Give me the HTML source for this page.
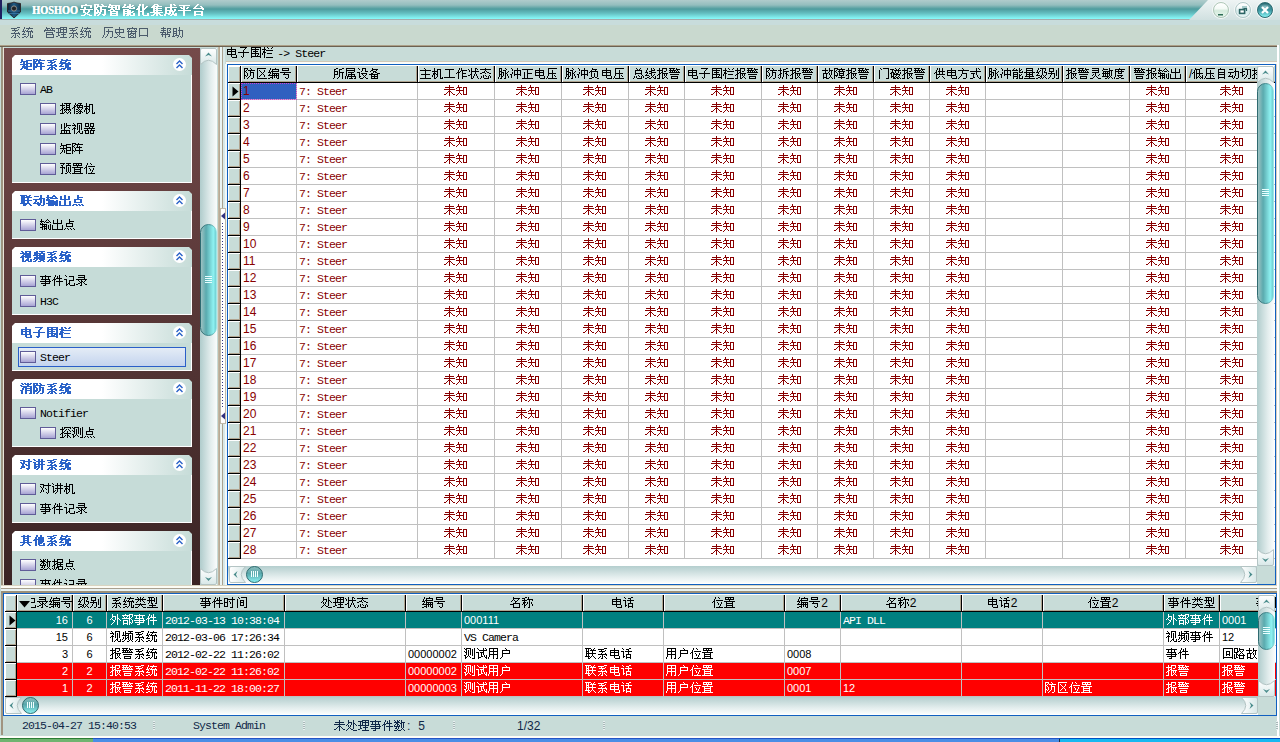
<!DOCTYPE html><html><head><meta charset="utf-8"><style>
*{margin:0;padding:0;box-sizing:border-box}
html,body{width:1280px;height:742px;overflow:hidden;background:#c8dcd8;font-family:"Liberation Sans",sans-serif;font-size:12px;color:#000;position:relative}
.ab,.hc,.c,.ind,.row{position:absolute}
.mono{font-family:"Liberation Mono",monospace;font-size:11.5px!important;letter-spacing:-0.9px}
#title{left:0;top:0;width:1280px;height:20px;background:linear-gradient(#b0cccc 0px,#94bebe 5px,#4e9c9e 9px,#62bcbe 13px,#8afcfc 19px,#a4acac 19px,#a4acac 20px)}
#titlecut{left:1189px;top:0;width:91px;height:20px;background:linear-gradient(#eef4f4,#d0e0e0);clip-path:polygon(19px 0,91px 0,91px 20px,0 20px)}
.tt{font-weight:bold;color:#fff;font-size:13px;line-height:19px}
.tt b{font-family:"Liberation Serif",serif;font-size:13px;display:inline-block;transform:scaleX(0.79);transform-origin:0 0;text-shadow:0.7px 0 0 #fff}
.menu{color:#4c5c6c;font-size:12px;line-height:20px;top:23px;--gy:2px}
.grp{left:12px;width:180px}
.gbody{left:0;top:20px;width:180px;background:#c6dcd8;border-right:1px solid #fff;border-bottom:1px solid #fff}
.gh{left:0;top:0;width:180px;height:20px;background:linear-gradient(90deg,#ffffff 0%,#ffffff 50%,#c6dcd8 100%);clip-path:polygon(3px 0,177px 0,180px 3px,180px 20px,0 20px,0 3px)}
.gt{left:8px;top:0;line-height:20px;color:#2a62c8;font-weight:bold;font-size:12px;--gy:2px}
.gc{left:161px;top:3px;width:13px;height:13px;border-radius:50%;background:#fff}
.ico{width:16px;height:12px;border:1px solid #605c98;background:linear-gradient(#ffffff,#a8a4d4)}
.it{line-height:14px;font-size:12px;--gy:-2px}
.hc{top:0;height:17px;line-height:17px;overflow:hidden;white-space:nowrap;border-right:1px solid #000;border-bottom:1px solid #000;box-shadow:inset 1px 0 0 #fff,inset -1px -1px 0 #b0a490;background:#c8dcd8}
.c{top:0;height:17px;line-height:16px;overflow:hidden;white-space:nowrap;border-right:1px solid #c0c0c0;border-bottom:1px solid #c0c0c0}
.ind{background:#c8dcd8;border-right:1px solid #000;border-bottom:1px solid #000;box-shadow:inset 1px 1px 0 #fff,inset -1px -1px 0 #b0a490}
.r{color:#880000}
.hc.l{padding-left:3px}
svg.ab{position:absolute;overflow:visible}
.g,.gb{width:12px;height:14px;vertical-align:top;fill:currentColor;position:relative;top:var(--gy,0px);overflow:visible}
.gb{width:13px}
.gt13{width:14px;height:16px;vertical-align:top;fill:currentColor;position:relative;top:var(--gy,0px);overflow:visible}
</style></head><body>
<svg width="0" height="0" style="position:absolute"><defs>
<linearGradient id="gbtn" x1="0" y1="0" x2="0" y2="1"><stop offset="0" stop-color="#ffffff"/><stop offset="1" stop-color="#d8e8e8"/></linearGradient>
<linearGradient id="gbtnh" x1="0" y1="0" x2="1" y2="0"><stop offset="0" stop-color="#ffffff"/><stop offset="1" stop-color="#d8e8e8"/></linearGradient>
<linearGradient id="gthv" x1="0" y1="0" x2="1" y2="0"><stop offset="0" stop-color="#a4c4c4"/><stop offset="0.35" stop-color="#5aaaae"/><stop offset="0.8" stop-color="#8ef2f2"/><stop offset="1" stop-color="#6cc8cc"/></linearGradient>
<linearGradient id="gstv" x1="0" y1="0" x2="1" y2="0"><stop offset="0" stop-color="#2e6a70"/><stop offset="0.6" stop-color="#4a9094"/><stop offset="1" stop-color="#9ae8e8"/></linearGradient>
<linearGradient id="gthh" x1="0" y1="0" x2="0" y2="1"><stop offset="0" stop-color="#8cbcbc"/><stop offset="0.45" stop-color="#58a8ac"/><stop offset="1" stop-color="#8cf4f4"/></linearGradient>
</defs></svg>
<div class="ab" id="title"></div>
<div class="ab" style="left:0;top:0;width:2px;height:19px;background:#202060"></div>
<div class="ab" id="titlecut"></div>
<svg class="ab" style="left:7px;top:2px" width="14" height="16" viewBox="0 0 14 16"><defs><linearGradient id="shg" x1="0" y1="0" x2="1" y2="0"><stop offset="0" stop-color="#0c2034"/><stop offset="0.5" stop-color="#1e5a84"/><stop offset="1" stop-color="#0c2a44"/></linearGradient></defs><path d="M0.5,1.5 L4,1 L6,0.5 L7,0 L8,0.5 L10,1 L13.5,1.5 L13.5,10 L7,16 L0.5,10 Z" fill="url(#shg)" stroke="#2a1a1a" stroke-width="0.8"/><path d="M1,9 H13 M1.5,11.5 H12.5" stroke="#3a7aa8" stroke-width="0.8"/><circle cx="7" cy="6.5" r="2.6" fill="#202428" stroke="#8a8a8a" stroke-width="1"/></svg>
<div class="ab tt" style="left:32px;top:0"><b>HOSHOO</b></div>
<div class="ab tt" style="left:80px;top:0;--gy:2px"><svg class=gt13><use href=#b135b89 /></svg><svg class=gt13><use href=#b139632 /></svg><svg class=gt13><use href=#b13667a /></svg><svg class=gt13><use href=#b1380fd /></svg><svg class=gt13><use href=#b135316 /></svg><svg class=gt13><use href=#b1396c6 /></svg><svg class=gt13><use href=#b136210 /></svg><svg class=gt13><use href=#b135e73 /></svg><svg class=gt13><use href=#b1353f0 /></svg></div>
<div class="ab" style="left:1213px;top:2px;width:16px;height:16px;border-radius:50%;background:linear-gradient(#ffffff 0%,#f4faf6 40%,#d4eadc 55%,#e8f6ee 100%);border:1px solid #b0c8b8;box-shadow:0 0 0 1px #f4f8f8"></div>
<div class="ab" style="left:1235px;top:2px;width:16px;height:16px;border-radius:50%;background:linear-gradient(#ffffff 0%,#f0f8f8 40%,#d4eaea 55%,#e8f6f6 100%);border:1px solid #b0c8c8;box-shadow:0 0 0 1px #f4f8f8"></div>
<div class="ab" style="left:1257px;top:2px;width:16px;height:16px;border-radius:50%;background:radial-gradient(ellipse 55% 28% at 50% 28%,rgba(230,255,255,0.55),rgba(255,255,255,0) 80%),linear-gradient(#2c6c74,#3a94a0 50%,#8af4f4);border:1px solid #2a6a70;box-shadow:0 0 0 1px #f4f8f8"></div>
<div class="ab" style="left:1218px;top:14px;width:5px;height:1px;background:#2c6c54;box-shadow:0 0.5px 0 #2c6c54"></div>
<svg class="ab" style="left:1238px;top:5px" width="10" height="10"><rect x="4" y="1" width="5" height="4" fill="#a8cccc"/><path d="M5.5 3.5 H8.5 V6" fill="none" stroke="#2c6464" stroke-width="1.2"/><rect x="1.6" y="4.6" width="5" height="3.8" fill="#fff" stroke="#2c6464" stroke-width="1.6"/></svg>
<svg class="ab" style="left:1260px;top:5px" width="10" height="10"><path d="M2 2 L8 8 M8 2 L2 8" stroke="#fff" stroke-width="2.2"/></svg>
<div class="ab" style="left:0;top:20px;width:1280px;height:5px;background:#c8dcdc"></div>
<div class="ab" style="left:0;top:25px;width:1280px;height:21px;background:#c9d9cf"></div>
<div class="ab menu" style="left:10px"><svg class=g><use href=#g7cfb /></svg><svg class=g><use href=#g7edf /></svg></div>
<div class="ab menu" style="left:44px"><svg class=g><use href=#g7ba1 /></svg><svg class=g><use href=#g7406 /></svg><svg class=g><use href=#g7cfb /></svg><svg class=g><use href=#g7edf /></svg></div>
<div class="ab menu" style="left:102px"><svg class=g><use href=#g5386 /></svg><svg class=g><use href=#g53f2 /></svg><svg class=g><use href=#g7a97 /></svg><svg class=g><use href=#g53e3 /></svg></div>
<div class="ab menu" style="left:160px"><svg class=g><use href=#g5e2e /></svg><svg class=g><use href=#g52a9 /></svg></div>
<div class="ab" style="left:0;top:45px;width:1277px;height:1px;background:#aca088"></div>
<div class="ab" style="left:0;top:46px;width:1277px;height:1px;background:#6c6252"></div>
<div class="ab" style="left:1277px;top:45px;width:2px;height:691px;background:#fff"></div>
<div class="ab" style="left:1276px;top:64px;width:1px;height:652px;background:#d8d0c0"></div>
<div class="ab" style="left:1px;top:47px;width:2px;height:538px;background:#9c9480"></div>
<div class="ab" style="left:3px;top:47px;width:1px;height:538px;background:#e8e4d8"></div>
<div class="ab" style="left:4px;top:48px;width:196px;height:537px;background:linear-gradient(#754a4a,#3a2424)"></div>
<div class="ab" style="left:4px;top:48px;width:196px;height:537px;overflow:hidden">
<div class="ab grp" style="left:8px;top:7px;height:128px">
<div class="ab gbody" style="height:108px"></div><div class="ab gh"></div><div class="ab gt"><svg class=gb><use href=#b77e9 /></svg><svg class=gb><use href=#b9635 /></svg><svg class=gb><use href=#b7cfb /></svg><svg class=gb><use href=#b7edf /></svg></div>
<div class="ab gc"><svg class="ab" width="13" height="13" style="left:0;top:0"><path d="M3.5 6 L6.5 3 L9.5 6 M3.5 10 L6.5 7 L9.5 10" fill="none" stroke="#2a62c8" stroke-width="1.4"/></svg></div>
<div class="ab ico" style="left:8px;top:28px"></div>
<div class="ab it mono" style="left:28px;top:28px">AB</div>
<div class="ab ico" style="left:28px;top:48px"></div>
<div class="ab it " style="left:48px;top:48px"><svg class=g><use href=#g6444 /></svg><svg class=g><use href=#g50cf /></svg><svg class=g><use href=#g673a /></svg></div>
<div class="ab ico" style="left:28px;top:68px"></div>
<div class="ab it " style="left:48px;top:68px"><svg class=g><use href=#g76d1 /></svg><svg class=g><use href=#g89c6 /></svg><svg class=g><use href=#g5668 /></svg></div>
<div class="ab ico" style="left:28px;top:88px"></div>
<div class="ab it " style="left:48px;top:88px"><svg class=g><use href=#g77e9 /></svg><svg class=g><use href=#g9635 /></svg></div>
<div class="ab ico" style="left:28px;top:108px"></div>
<div class="ab it " style="left:48px;top:108px"><svg class=g><use href=#g9884 /></svg><svg class=g><use href=#g7f6e /></svg><svg class=g><use href=#g4f4d /></svg></div>
</div>
<div class="ab grp" style="left:8px;top:143px;height:48px">
<div class="ab gbody" style="height:28px"></div><div class="ab gh"></div><div class="ab gt"><svg class=gb><use href=#b8054 /></svg><svg class=gb><use href=#b52a8 /></svg><svg class=gb><use href=#b8f93 /></svg><svg class=gb><use href=#b51fa /></svg><svg class=gb><use href=#b70b9 /></svg></div>
<div class="ab gc"><svg class="ab" width="13" height="13" style="left:0;top:0"><path d="M3.5 6 L6.5 3 L9.5 6 M3.5 10 L6.5 7 L9.5 10" fill="none" stroke="#2a62c8" stroke-width="1.4"/></svg></div>
<div class="ab ico" style="left:8px;top:28px"></div>
<div class="ab it " style="left:28px;top:28px"><svg class=g><use href=#g8f93 /></svg><svg class=g><use href=#g51fa /></svg><svg class=g><use href=#g70b9 /></svg></div>
</div>
<div class="ab grp" style="left:8px;top:199px;height:68px">
<div class="ab gbody" style="height:48px"></div><div class="ab gh"></div><div class="ab gt"><svg class=gb><use href=#b89c6 /></svg><svg class=gb><use href=#b9891 /></svg><svg class=gb><use href=#b7cfb /></svg><svg class=gb><use href=#b7edf /></svg></div>
<div class="ab gc"><svg class="ab" width="13" height="13" style="left:0;top:0"><path d="M3.5 6 L6.5 3 L9.5 6 M3.5 10 L6.5 7 L9.5 10" fill="none" stroke="#2a62c8" stroke-width="1.4"/></svg></div>
<div class="ab ico" style="left:8px;top:28px"></div>
<div class="ab it " style="left:28px;top:28px"><svg class=g><use href=#g4e8b /></svg><svg class=g><use href=#g4ef6 /></svg><svg class=g><use href=#g8bb0 /></svg><svg class=g><use href=#g5f55 /></svg></div>
<div class="ab ico" style="left:8px;top:48px"></div>
<div class="ab it mono" style="left:28px;top:48px">H3C</div>
</div>
<div class="ab grp" style="left:8px;top:275px;height:48px">
<div class="ab gbody" style="height:28px"></div><div class="ab gh"></div><div class="ab gt"><svg class=gb><use href=#b7535 /></svg><svg class=gb><use href=#b5b50 /></svg><svg class=gb><use href=#b56f4 /></svg><svg class=gb><use href=#b680f /></svg></div>
<div class="ab gc"><svg class="ab" width="13" height="13" style="left:0;top:0"><path d="M3.5 6 L6.5 3 L9.5 6 M3.5 10 L6.5 7 L9.5 10" fill="none" stroke="#2a62c8" stroke-width="1.4"/></svg></div>
<div class="ab" style="left:6px;top:24px;width:168px;height:20px;border:1px solid #2a5fc8;background:linear-gradient(#e4ecf6,#c4d4ee)"></div>
<div class="ab ico" style="left:8px;top:28px"></div>
<div class="ab it mono" style="left:28px;top:28px">Steer</div>
</div>
<div class="ab grp" style="left:8px;top:331px;height:68px">
<div class="ab gbody" style="height:48px"></div><div class="ab gh"></div><div class="ab gt"><svg class=gb><use href=#b6d88 /></svg><svg class=gb><use href=#b9632 /></svg><svg class=gb><use href=#b7cfb /></svg><svg class=gb><use href=#b7edf /></svg></div>
<div class="ab gc"><svg class="ab" width="13" height="13" style="left:0;top:0"><path d="M3.5 6 L6.5 3 L9.5 6 M3.5 10 L6.5 7 L9.5 10" fill="none" stroke="#2a62c8" stroke-width="1.4"/></svg></div>
<div class="ab ico" style="left:8px;top:28px"></div>
<div class="ab it mono" style="left:28px;top:28px">Notifier</div>
<div class="ab ico" style="left:28px;top:48px"></div>
<div class="ab it " style="left:48px;top:48px"><svg class=g><use href=#g63a2 /></svg><svg class=g><use href=#g6d4b /></svg><svg class=g><use href=#g70b9 /></svg></div>
</div>
<div class="ab grp" style="left:8px;top:407px;height:68px">
<div class="ab gbody" style="height:48px"></div><div class="ab gh"></div><div class="ab gt"><svg class=gb><use href=#b5bf9 /></svg><svg class=gb><use href=#b8bb2 /></svg><svg class=gb><use href=#b7cfb /></svg><svg class=gb><use href=#b7edf /></svg></div>
<div class="ab gc"><svg class="ab" width="13" height="13" style="left:0;top:0"><path d="M3.5 6 L6.5 3 L9.5 6 M3.5 10 L6.5 7 L9.5 10" fill="none" stroke="#2a62c8" stroke-width="1.4"/></svg></div>
<div class="ab ico" style="left:8px;top:28px"></div>
<div class="ab it " style="left:28px;top:28px"><svg class=g><use href=#g5bf9 /></svg><svg class=g><use href=#g8bb2 /></svg><svg class=g><use href=#g673a /></svg></div>
<div class="ab ico" style="left:8px;top:48px"></div>
<div class="ab it " style="left:28px;top:48px"><svg class=g><use href=#g4e8b /></svg><svg class=g><use href=#g4ef6 /></svg><svg class=g><use href=#g8bb0 /></svg><svg class=g><use href=#g5f55 /></svg></div>
</div>
<div class="ab grp" style="left:8px;top:483px;height:68px">
<div class="ab gbody" style="height:48px"></div><div class="ab gh"></div><div class="ab gt"><svg class=gb><use href=#b5176 /></svg><svg class=gb><use href=#b4ed6 /></svg><svg class=gb><use href=#b7cfb /></svg><svg class=gb><use href=#b7edf /></svg></div>
<div class="ab gc"><svg class="ab" width="13" height="13" style="left:0;top:0"><path d="M3.5 6 L6.5 3 L9.5 6 M3.5 10 L6.5 7 L9.5 10" fill="none" stroke="#2a62c8" stroke-width="1.4"/></svg></div>
<div class="ab ico" style="left:8px;top:28px"></div>
<div class="ab it " style="left:28px;top:28px"><svg class=g><use href=#g6570 /></svg><svg class=g><use href=#g636e /></svg><svg class=g><use href=#g70b9 /></svg></div>
<div class="ab ico" style="left:8px;top:48px"></div>
<div class="ab it " style="left:28px;top:48px"><svg class=g><use href=#g4e8b /></svg><svg class=g><use href=#g4ef6 /></svg><svg class=g><use href=#g8bb0 /></svg><svg class=g><use href=#g5f55 /></svg></div>
</div>
</div>
<div class="ab" style="left:200px;top:48px;width:17px;height:537px;background:linear-gradient(90deg,#b0cccc,#e4eeee 65%,#fafcfc)"></div>
<svg class="ab" style="left:200px;top:48px" width="17" height="17"><path d="M0.5,2 Q0.5,0.5 2,0.5 H15 Q16.5,0.5 16.5,2 V16.5 Q8.5,8 0.5,16.5 Z" fill="url(#gbtn)" stroke="#b4c4c4" stroke-width="1"/><path d="M5,8.5 L8.5,4.5 L12,8.5 L8.5,7 Z" fill="#4a8c8c"/></svg>
<svg class="ab" style="left:200px;top:568px" width="17" height="17"><path d="M0.5,0.5 Q8.5,9 16.5,0.5 V15 Q16.5,16.5 15,16.5 H2 Q0.5,16.5 0.5,15 Z" fill="url(#gbtn)" stroke="#b4c4c4" stroke-width="1"/><path d="M5,9 L8.5,13 L12,9 L8.5,10.5 Z" fill="#4a8c8c"/></svg>
<svg class="ab" style="left:200px;top:224px" width="17" height="112"><rect x="0.5" y="0.5" width="16" height="111" rx="8" ry="8" fill="url(#gthv)" stroke="url(#gstv)" stroke-width="1"/></svg>
<div class="ab" style="left:205px;top:276px;width:7px;height:8px;background:repeating-linear-gradient(#e8ffff 0 1px,transparent 1px 2px)"></div>
<div class="ab" style="left:217px;top:47px;width:10px;height:538px;background:#f2f8f8"></div>
<div class="ab" style="left:225px;top:47px;width:2px;height:17px;background:#c8dcd8"></div>
<div class="ab" style="left:217px;top:47px;width:1px;height:538px;background:#c8dcd8"></div>
<div class="ab" style="left:218px;top:47px;width:2px;height:538px;background:linear-gradient(90deg,#c8bca8,#b0a490)"></div>
<div class="ab" style="left:220px;top:47px;width:2px;height:538px;background:#eaf4f4"></div>
<div class="ab" style="left:222px;top:47px;width:1px;height:538px;background:#aaa290"></div>
<div class="ab" style="left:223px;top:47px;width:2px;height:538px;background:#d8e8e8"></div>
<div class="ab" style="left:220px;top:208px;width:6px;height:216px;background:#fff;border:1px solid #c0b8a8"></div>
<div class="ab" style="left:222px;top:223px;width:1px;height:185px;background:repeating-linear-gradient(#303080 0 1px,transparent 1px 3px)"></div>
<svg class="ab" style="left:220px;top:212px" width="6" height="8"><path d="M1 4 L5 0.5 L5 7.5 Z" fill="#303080"/></svg>
<svg class="ab" style="left:220px;top:412px" width="6" height="8"><path d="M1 4 L5 0.5 L5 7.5 Z" fill="#303080"/></svg>
<div class="ab" style="left:226px;top:61px;width:1051px;height:1px;background:#d0c8b8"></div>
<div class="ab" style="left:226px;top:62px;width:1051px;height:2px;background:#fcfcf8"></div>
<div class="ab" style="left:226px;top:45px;line-height:16px;font-size:12px"><svg class=g><use href=#g7535 /></svg><svg class=g><use href=#g5b50 /></svg><svg class=g><use href=#g56f4 /></svg><svg class=g><use href=#g680f /></svg> <span class="mono">-&gt; Steer</span></div>
<div class="ab" style="left:227px;top:64px;width:1049px;height:521px;border:1px solid #1060c0;background:#fff;overflow:hidden">
<div class="ind" style="left:0px;top:1px;width:13px;height:17px"></div>
<div class="hc" style="left:13px;top:1px;width:56px;padding-left:3px"><svg class=g><use href=#g9632 /></svg><svg class=g><use href=#g533a /></svg><svg class=g><use href=#g7f16 /></svg><svg class=g><use href=#g53f7 /></svg></div>
<div class="hc" style="left:69px;top:1px;width:121px;text-align:center"><svg class=g><use href=#g6240 /></svg><svg class=g><use href=#g5c5e /></svg><svg class=g><use href=#g8bbe /></svg><svg class=g><use href=#g5907 /></svg></div>
<div class="hc" style="left:190px;top:1px;width:77px;text-align:center"><svg class=g><use href=#g4e3b /></svg><svg class=g><use href=#g673a /></svg><svg class=g><use href=#g5de5 /></svg><svg class=g><use href=#g4f5c /></svg><svg class=g><use href=#g72b6 /></svg><svg class=g><use href=#g6001 /></svg></div>
<div class="hc" style="left:267px;top:1px;width:67px;text-align:center"><svg class=g><use href=#g8109 /></svg><svg class=g><use href=#g51b2 /></svg><svg class=g><use href=#g6b63 /></svg><svg class=g><use href=#g7535 /></svg><svg class=g><use href=#g538b /></svg></div>
<div class="hc" style="left:334px;top:1px;width:67px;text-align:center"><svg class=g><use href=#g8109 /></svg><svg class=g><use href=#g51b2 /></svg><svg class=g><use href=#g8d1f /></svg><svg class=g><use href=#g7535 /></svg><svg class=g><use href=#g538b /></svg></div>
<div class="hc" style="left:401px;top:1px;width:56px;text-align:center"><svg class=g><use href=#g603b /></svg><svg class=g><use href=#g7ebf /></svg><svg class=g><use href=#g62a5 /></svg><svg class=g><use href=#g8b66 /></svg></div>
<div class="hc" style="left:457px;top:1px;width:77px;text-align:center"><svg class=g><use href=#g7535 /></svg><svg class=g><use href=#g5b50 /></svg><svg class=g><use href=#g56f4 /></svg><svg class=g><use href=#g680f /></svg><svg class=g><use href=#g62a5 /></svg><svg class=g><use href=#g8b66 /></svg></div>
<div class="hc" style="left:534px;top:1px;width:56px;text-align:center"><svg class=g><use href=#g9632 /></svg><svg class=g><use href=#g62c6 /></svg><svg class=g><use href=#g62a5 /></svg><svg class=g><use href=#g8b66 /></svg></div>
<div class="hc" style="left:590px;top:1px;width:56px;text-align:center"><svg class=g><use href=#g6545 /></svg><svg class=g><use href=#g969c /></svg><svg class=g><use href=#g62a5 /></svg><svg class=g><use href=#g8b66 /></svg></div>
<div class="hc" style="left:646px;top:1px;width:56px;text-align:center"><svg class=g><use href=#g95e8 /></svg><svg class=g><use href=#g78c1 /></svg><svg class=g><use href=#g62a5 /></svg><svg class=g><use href=#g8b66 /></svg></div>
<div class="hc" style="left:702px;top:1px;width:56px;text-align:center"><svg class=g><use href=#g4f9b /></svg><svg class=g><use href=#g7535 /></svg><svg class=g><use href=#g65b9 /></svg><svg class=g><use href=#g5f0f /></svg></div>
<div class="hc" style="left:758px;top:1px;width:77px;text-align:center"><svg class=g><use href=#g8109 /></svg><svg class=g><use href=#g51b2 /></svg><svg class=g><use href=#g80fd /></svg><svg class=g><use href=#g91cf /></svg><svg class=g><use href=#g7ea7 /></svg><svg class=g><use href=#g522b /></svg></div>
<div class="hc" style="left:835px;top:1px;width:67px;text-align:center"><svg class=g><use href=#g62a5 /></svg><svg class=g><use href=#g8b66 /></svg><svg class=g><use href=#g7075 /></svg><svg class=g><use href=#g654f /></svg><svg class=g><use href=#g5ea6 /></svg></div>
<div class="hc" style="left:902px;top:1px;width:56px;text-align:center"><svg class=g><use href=#g8b66 /></svg><svg class=g><use href=#g62a5 /></svg><svg class=g><use href=#g8f93 /></svg><svg class=g><use href=#g51fa /></svg></div>
<div class="hc" style="left:958px;top:1px;width:93px;padding-left:3px">/<svg class=g><use href=#g4f4e /></svg><svg class=g><use href=#g538b /></svg><svg class=g><use href=#g81ea /></svg><svg class=g><use href=#g52a8 /></svg><svg class=g><use href=#g5207 /></svg><svg class=g><use href=#g6362 /></svg></div>
<div class="ind" style="left:0;top:18px;width:13px;height:17px"></div>
<svg class="ab" style="left:4px;top:21px" width="7" height="11"><path d="M0.5 0.5 L6.5 5.5 L0.5 10.5 Z" fill="#000"/></svg>
<div class="c r" style="left:13px;top:18px;width:56px;padding-left:2px;background:#3060c0;outline:1px dotted #d040d0;outline-offset:-1px;">1</div>
<div class="c r" style="left:69px;top:18px;width:121px;padding-left:2px;"><span class="mono">7: Steer</span></div>
<div class="c r" style="left:190px;top:18px;width:77px;text-align:center;"><svg class=g><use href=#g672a /></svg><svg class=g><use href=#g77e5 /></svg></div>
<div class="c r" style="left:267px;top:18px;width:67px;text-align:center;"><svg class=g><use href=#g672a /></svg><svg class=g><use href=#g77e5 /></svg></div>
<div class="c r" style="left:334px;top:18px;width:67px;text-align:center;"><svg class=g><use href=#g672a /></svg><svg class=g><use href=#g77e5 /></svg></div>
<div class="c r" style="left:401px;top:18px;width:56px;text-align:center;"><svg class=g><use href=#g672a /></svg><svg class=g><use href=#g77e5 /></svg></div>
<div class="c r" style="left:457px;top:18px;width:77px;text-align:center;"><svg class=g><use href=#g672a /></svg><svg class=g><use href=#g77e5 /></svg></div>
<div class="c r" style="left:534px;top:18px;width:56px;text-align:center;"><svg class=g><use href=#g672a /></svg><svg class=g><use href=#g77e5 /></svg></div>
<div class="c r" style="left:590px;top:18px;width:56px;text-align:center;"><svg class=g><use href=#g672a /></svg><svg class=g><use href=#g77e5 /></svg></div>
<div class="c r" style="left:646px;top:18px;width:56px;text-align:center;"><svg class=g><use href=#g672a /></svg><svg class=g><use href=#g77e5 /></svg></div>
<div class="c r" style="left:702px;top:18px;width:56px;text-align:center;"><svg class=g><use href=#g672a /></svg><svg class=g><use href=#g77e5 /></svg></div>
<div class="c r" style="left:758px;top:18px;width:77px;;"></div>
<div class="c r" style="left:835px;top:18px;width:67px;;"></div>
<div class="c r" style="left:902px;top:18px;width:56px;text-align:center;"><svg class=g><use href=#g672a /></svg><svg class=g><use href=#g77e5 /></svg></div>
<div class="c r" style="left:958px;top:18px;width:93px;text-align:center;"><svg class=g><use href=#g672a /></svg><svg class=g><use href=#g77e5 /></svg></div>
<div class="ind" style="left:0;top:35px;width:13px;height:17px"></div>
<div class="c r" style="left:13px;top:35px;width:56px;padding-left:2px;">2</div>
<div class="c r" style="left:69px;top:35px;width:121px;padding-left:2px;"><span class="mono">7: Steer</span></div>
<div class="c r" style="left:190px;top:35px;width:77px;text-align:center;"><svg class=g><use href=#g672a /></svg><svg class=g><use href=#g77e5 /></svg></div>
<div class="c r" style="left:267px;top:35px;width:67px;text-align:center;"><svg class=g><use href=#g672a /></svg><svg class=g><use href=#g77e5 /></svg></div>
<div class="c r" style="left:334px;top:35px;width:67px;text-align:center;"><svg class=g><use href=#g672a /></svg><svg class=g><use href=#g77e5 /></svg></div>
<div class="c r" style="left:401px;top:35px;width:56px;text-align:center;"><svg class=g><use href=#g672a /></svg><svg class=g><use href=#g77e5 /></svg></div>
<div class="c r" style="left:457px;top:35px;width:77px;text-align:center;"><svg class=g><use href=#g672a /></svg><svg class=g><use href=#g77e5 /></svg></div>
<div class="c r" style="left:534px;top:35px;width:56px;text-align:center;"><svg class=g><use href=#g672a /></svg><svg class=g><use href=#g77e5 /></svg></div>
<div class="c r" style="left:590px;top:35px;width:56px;text-align:center;"><svg class=g><use href=#g672a /></svg><svg class=g><use href=#g77e5 /></svg></div>
<div class="c r" style="left:646px;top:35px;width:56px;text-align:center;"><svg class=g><use href=#g672a /></svg><svg class=g><use href=#g77e5 /></svg></div>
<div class="c r" style="left:702px;top:35px;width:56px;text-align:center;"><svg class=g><use href=#g672a /></svg><svg class=g><use href=#g77e5 /></svg></div>
<div class="c r" style="left:758px;top:35px;width:77px;;"></div>
<div class="c r" style="left:835px;top:35px;width:67px;;"></div>
<div class="c r" style="left:902px;top:35px;width:56px;text-align:center;"><svg class=g><use href=#g672a /></svg><svg class=g><use href=#g77e5 /></svg></div>
<div class="c r" style="left:958px;top:35px;width:93px;text-align:center;"><svg class=g><use href=#g672a /></svg><svg class=g><use href=#g77e5 /></svg></div>
<div class="ind" style="left:0;top:52px;width:13px;height:17px"></div>
<div class="c r" style="left:13px;top:52px;width:56px;padding-left:2px;">3</div>
<div class="c r" style="left:69px;top:52px;width:121px;padding-left:2px;"><span class="mono">7: Steer</span></div>
<div class="c r" style="left:190px;top:52px;width:77px;text-align:center;"><svg class=g><use href=#g672a /></svg><svg class=g><use href=#g77e5 /></svg></div>
<div class="c r" style="left:267px;top:52px;width:67px;text-align:center;"><svg class=g><use href=#g672a /></svg><svg class=g><use href=#g77e5 /></svg></div>
<div class="c r" style="left:334px;top:52px;width:67px;text-align:center;"><svg class=g><use href=#g672a /></svg><svg class=g><use href=#g77e5 /></svg></div>
<div class="c r" style="left:401px;top:52px;width:56px;text-align:center;"><svg class=g><use href=#g672a /></svg><svg class=g><use href=#g77e5 /></svg></div>
<div class="c r" style="left:457px;top:52px;width:77px;text-align:center;"><svg class=g><use href=#g672a /></svg><svg class=g><use href=#g77e5 /></svg></div>
<div class="c r" style="left:534px;top:52px;width:56px;text-align:center;"><svg class=g><use href=#g672a /></svg><svg class=g><use href=#g77e5 /></svg></div>
<div class="c r" style="left:590px;top:52px;width:56px;text-align:center;"><svg class=g><use href=#g672a /></svg><svg class=g><use href=#g77e5 /></svg></div>
<div class="c r" style="left:646px;top:52px;width:56px;text-align:center;"><svg class=g><use href=#g672a /></svg><svg class=g><use href=#g77e5 /></svg></div>
<div class="c r" style="left:702px;top:52px;width:56px;text-align:center;"><svg class=g><use href=#g672a /></svg><svg class=g><use href=#g77e5 /></svg></div>
<div class="c r" style="left:758px;top:52px;width:77px;;"></div>
<div class="c r" style="left:835px;top:52px;width:67px;;"></div>
<div class="c r" style="left:902px;top:52px;width:56px;text-align:center;"><svg class=g><use href=#g672a /></svg><svg class=g><use href=#g77e5 /></svg></div>
<div class="c r" style="left:958px;top:52px;width:93px;text-align:center;"><svg class=g><use href=#g672a /></svg><svg class=g><use href=#g77e5 /></svg></div>
<div class="ind" style="left:0;top:69px;width:13px;height:17px"></div>
<div class="c r" style="left:13px;top:69px;width:56px;padding-left:2px;">4</div>
<div class="c r" style="left:69px;top:69px;width:121px;padding-left:2px;"><span class="mono">7: Steer</span></div>
<div class="c r" style="left:190px;top:69px;width:77px;text-align:center;"><svg class=g><use href=#g672a /></svg><svg class=g><use href=#g77e5 /></svg></div>
<div class="c r" style="left:267px;top:69px;width:67px;text-align:center;"><svg class=g><use href=#g672a /></svg><svg class=g><use href=#g77e5 /></svg></div>
<div class="c r" style="left:334px;top:69px;width:67px;text-align:center;"><svg class=g><use href=#g672a /></svg><svg class=g><use href=#g77e5 /></svg></div>
<div class="c r" style="left:401px;top:69px;width:56px;text-align:center;"><svg class=g><use href=#g672a /></svg><svg class=g><use href=#g77e5 /></svg></div>
<div class="c r" style="left:457px;top:69px;width:77px;text-align:center;"><svg class=g><use href=#g672a /></svg><svg class=g><use href=#g77e5 /></svg></div>
<div class="c r" style="left:534px;top:69px;width:56px;text-align:center;"><svg class=g><use href=#g672a /></svg><svg class=g><use href=#g77e5 /></svg></div>
<div class="c r" style="left:590px;top:69px;width:56px;text-align:center;"><svg class=g><use href=#g672a /></svg><svg class=g><use href=#g77e5 /></svg></div>
<div class="c r" style="left:646px;top:69px;width:56px;text-align:center;"><svg class=g><use href=#g672a /></svg><svg class=g><use href=#g77e5 /></svg></div>
<div class="c r" style="left:702px;top:69px;width:56px;text-align:center;"><svg class=g><use href=#g672a /></svg><svg class=g><use href=#g77e5 /></svg></div>
<div class="c r" style="left:758px;top:69px;width:77px;;"></div>
<div class="c r" style="left:835px;top:69px;width:67px;;"></div>
<div class="c r" style="left:902px;top:69px;width:56px;text-align:center;"><svg class=g><use href=#g672a /></svg><svg class=g><use href=#g77e5 /></svg></div>
<div class="c r" style="left:958px;top:69px;width:93px;text-align:center;"><svg class=g><use href=#g672a /></svg><svg class=g><use href=#g77e5 /></svg></div>
<div class="ind" style="left:0;top:86px;width:13px;height:17px"></div>
<div class="c r" style="left:13px;top:86px;width:56px;padding-left:2px;">5</div>
<div class="c r" style="left:69px;top:86px;width:121px;padding-left:2px;"><span class="mono">7: Steer</span></div>
<div class="c r" style="left:190px;top:86px;width:77px;text-align:center;"><svg class=g><use href=#g672a /></svg><svg class=g><use href=#g77e5 /></svg></div>
<div class="c r" style="left:267px;top:86px;width:67px;text-align:center;"><svg class=g><use href=#g672a /></svg><svg class=g><use href=#g77e5 /></svg></div>
<div class="c r" style="left:334px;top:86px;width:67px;text-align:center;"><svg class=g><use href=#g672a /></svg><svg class=g><use href=#g77e5 /></svg></div>
<div class="c r" style="left:401px;top:86px;width:56px;text-align:center;"><svg class=g><use href=#g672a /></svg><svg class=g><use href=#g77e5 /></svg></div>
<div class="c r" style="left:457px;top:86px;width:77px;text-align:center;"><svg class=g><use href=#g672a /></svg><svg class=g><use href=#g77e5 /></svg></div>
<div class="c r" style="left:534px;top:86px;width:56px;text-align:center;"><svg class=g><use href=#g672a /></svg><svg class=g><use href=#g77e5 /></svg></div>
<div class="c r" style="left:590px;top:86px;width:56px;text-align:center;"><svg class=g><use href=#g672a /></svg><svg class=g><use href=#g77e5 /></svg></div>
<div class="c r" style="left:646px;top:86px;width:56px;text-align:center;"><svg class=g><use href=#g672a /></svg><svg class=g><use href=#g77e5 /></svg></div>
<div class="c r" style="left:702px;top:86px;width:56px;text-align:center;"><svg class=g><use href=#g672a /></svg><svg class=g><use href=#g77e5 /></svg></div>
<div class="c r" style="left:758px;top:86px;width:77px;;"></div>
<div class="c r" style="left:835px;top:86px;width:67px;;"></div>
<div class="c r" style="left:902px;top:86px;width:56px;text-align:center;"><svg class=g><use href=#g672a /></svg><svg class=g><use href=#g77e5 /></svg></div>
<div class="c r" style="left:958px;top:86px;width:93px;text-align:center;"><svg class=g><use href=#g672a /></svg><svg class=g><use href=#g77e5 /></svg></div>
<div class="ind" style="left:0;top:103px;width:13px;height:17px"></div>
<div class="c r" style="left:13px;top:103px;width:56px;padding-left:2px;">6</div>
<div class="c r" style="left:69px;top:103px;width:121px;padding-left:2px;"><span class="mono">7: Steer</span></div>
<div class="c r" style="left:190px;top:103px;width:77px;text-align:center;"><svg class=g><use href=#g672a /></svg><svg class=g><use href=#g77e5 /></svg></div>
<div class="c r" style="left:267px;top:103px;width:67px;text-align:center;"><svg class=g><use href=#g672a /></svg><svg class=g><use href=#g77e5 /></svg></div>
<div class="c r" style="left:334px;top:103px;width:67px;text-align:center;"><svg class=g><use href=#g672a /></svg><svg class=g><use href=#g77e5 /></svg></div>
<div class="c r" style="left:401px;top:103px;width:56px;text-align:center;"><svg class=g><use href=#g672a /></svg><svg class=g><use href=#g77e5 /></svg></div>
<div class="c r" style="left:457px;top:103px;width:77px;text-align:center;"><svg class=g><use href=#g672a /></svg><svg class=g><use href=#g77e5 /></svg></div>
<div class="c r" style="left:534px;top:103px;width:56px;text-align:center;"><svg class=g><use href=#g672a /></svg><svg class=g><use href=#g77e5 /></svg></div>
<div class="c r" style="left:590px;top:103px;width:56px;text-align:center;"><svg class=g><use href=#g672a /></svg><svg class=g><use href=#g77e5 /></svg></div>
<div class="c r" style="left:646px;top:103px;width:56px;text-align:center;"><svg class=g><use href=#g672a /></svg><svg class=g><use href=#g77e5 /></svg></div>
<div class="c r" style="left:702px;top:103px;width:56px;text-align:center;"><svg class=g><use href=#g672a /></svg><svg class=g><use href=#g77e5 /></svg></div>
<div class="c r" style="left:758px;top:103px;width:77px;;"></div>
<div class="c r" style="left:835px;top:103px;width:67px;;"></div>
<div class="c r" style="left:902px;top:103px;width:56px;text-align:center;"><svg class=g><use href=#g672a /></svg><svg class=g><use href=#g77e5 /></svg></div>
<div class="c r" style="left:958px;top:103px;width:93px;text-align:center;"><svg class=g><use href=#g672a /></svg><svg class=g><use href=#g77e5 /></svg></div>
<div class="ind" style="left:0;top:120px;width:13px;height:17px"></div>
<div class="c r" style="left:13px;top:120px;width:56px;padding-left:2px;">7</div>
<div class="c r" style="left:69px;top:120px;width:121px;padding-left:2px;"><span class="mono">7: Steer</span></div>
<div class="c r" style="left:190px;top:120px;width:77px;text-align:center;"><svg class=g><use href=#g672a /></svg><svg class=g><use href=#g77e5 /></svg></div>
<div class="c r" style="left:267px;top:120px;width:67px;text-align:center;"><svg class=g><use href=#g672a /></svg><svg class=g><use href=#g77e5 /></svg></div>
<div class="c r" style="left:334px;top:120px;width:67px;text-align:center;"><svg class=g><use href=#g672a /></svg><svg class=g><use href=#g77e5 /></svg></div>
<div class="c r" style="left:401px;top:120px;width:56px;text-align:center;"><svg class=g><use href=#g672a /></svg><svg class=g><use href=#g77e5 /></svg></div>
<div class="c r" style="left:457px;top:120px;width:77px;text-align:center;"><svg class=g><use href=#g672a /></svg><svg class=g><use href=#g77e5 /></svg></div>
<div class="c r" style="left:534px;top:120px;width:56px;text-align:center;"><svg class=g><use href=#g672a /></svg><svg class=g><use href=#g77e5 /></svg></div>
<div class="c r" style="left:590px;top:120px;width:56px;text-align:center;"><svg class=g><use href=#g672a /></svg><svg class=g><use href=#g77e5 /></svg></div>
<div class="c r" style="left:646px;top:120px;width:56px;text-align:center;"><svg class=g><use href=#g672a /></svg><svg class=g><use href=#g77e5 /></svg></div>
<div class="c r" style="left:702px;top:120px;width:56px;text-align:center;"><svg class=g><use href=#g672a /></svg><svg class=g><use href=#g77e5 /></svg></div>
<div class="c r" style="left:758px;top:120px;width:77px;;"></div>
<div class="c r" style="left:835px;top:120px;width:67px;;"></div>
<div class="c r" style="left:902px;top:120px;width:56px;text-align:center;"><svg class=g><use href=#g672a /></svg><svg class=g><use href=#g77e5 /></svg></div>
<div class="c r" style="left:958px;top:120px;width:93px;text-align:center;"><svg class=g><use href=#g672a /></svg><svg class=g><use href=#g77e5 /></svg></div>
<div class="ind" style="left:0;top:137px;width:13px;height:17px"></div>
<div class="c r" style="left:13px;top:137px;width:56px;padding-left:2px;">8</div>
<div class="c r" style="left:69px;top:137px;width:121px;padding-left:2px;"><span class="mono">7: Steer</span></div>
<div class="c r" style="left:190px;top:137px;width:77px;text-align:center;"><svg class=g><use href=#g672a /></svg><svg class=g><use href=#g77e5 /></svg></div>
<div class="c r" style="left:267px;top:137px;width:67px;text-align:center;"><svg class=g><use href=#g672a /></svg><svg class=g><use href=#g77e5 /></svg></div>
<div class="c r" style="left:334px;top:137px;width:67px;text-align:center;"><svg class=g><use href=#g672a /></svg><svg class=g><use href=#g77e5 /></svg></div>
<div class="c r" style="left:401px;top:137px;width:56px;text-align:center;"><svg class=g><use href=#g672a /></svg><svg class=g><use href=#g77e5 /></svg></div>
<div class="c r" style="left:457px;top:137px;width:77px;text-align:center;"><svg class=g><use href=#g672a /></svg><svg class=g><use href=#g77e5 /></svg></div>
<div class="c r" style="left:534px;top:137px;width:56px;text-align:center;"><svg class=g><use href=#g672a /></svg><svg class=g><use href=#g77e5 /></svg></div>
<div class="c r" style="left:590px;top:137px;width:56px;text-align:center;"><svg class=g><use href=#g672a /></svg><svg class=g><use href=#g77e5 /></svg></div>
<div class="c r" style="left:646px;top:137px;width:56px;text-align:center;"><svg class=g><use href=#g672a /></svg><svg class=g><use href=#g77e5 /></svg></div>
<div class="c r" style="left:702px;top:137px;width:56px;text-align:center;"><svg class=g><use href=#g672a /></svg><svg class=g><use href=#g77e5 /></svg></div>
<div class="c r" style="left:758px;top:137px;width:77px;;"></div>
<div class="c r" style="left:835px;top:137px;width:67px;;"></div>
<div class="c r" style="left:902px;top:137px;width:56px;text-align:center;"><svg class=g><use href=#g672a /></svg><svg class=g><use href=#g77e5 /></svg></div>
<div class="c r" style="left:958px;top:137px;width:93px;text-align:center;"><svg class=g><use href=#g672a /></svg><svg class=g><use href=#g77e5 /></svg></div>
<div class="ind" style="left:0;top:154px;width:13px;height:17px"></div>
<div class="c r" style="left:13px;top:154px;width:56px;padding-left:2px;">9</div>
<div class="c r" style="left:69px;top:154px;width:121px;padding-left:2px;"><span class="mono">7: Steer</span></div>
<div class="c r" style="left:190px;top:154px;width:77px;text-align:center;"><svg class=g><use href=#g672a /></svg><svg class=g><use href=#g77e5 /></svg></div>
<div class="c r" style="left:267px;top:154px;width:67px;text-align:center;"><svg class=g><use href=#g672a /></svg><svg class=g><use href=#g77e5 /></svg></div>
<div class="c r" style="left:334px;top:154px;width:67px;text-align:center;"><svg class=g><use href=#g672a /></svg><svg class=g><use href=#g77e5 /></svg></div>
<div class="c r" style="left:401px;top:154px;width:56px;text-align:center;"><svg class=g><use href=#g672a /></svg><svg class=g><use href=#g77e5 /></svg></div>
<div class="c r" style="left:457px;top:154px;width:77px;text-align:center;"><svg class=g><use href=#g672a /></svg><svg class=g><use href=#g77e5 /></svg></div>
<div class="c r" style="left:534px;top:154px;width:56px;text-align:center;"><svg class=g><use href=#g672a /></svg><svg class=g><use href=#g77e5 /></svg></div>
<div class="c r" style="left:590px;top:154px;width:56px;text-align:center;"><svg class=g><use href=#g672a /></svg><svg class=g><use href=#g77e5 /></svg></div>
<div class="c r" style="left:646px;top:154px;width:56px;text-align:center;"><svg class=g><use href=#g672a /></svg><svg class=g><use href=#g77e5 /></svg></div>
<div class="c r" style="left:702px;top:154px;width:56px;text-align:center;"><svg class=g><use href=#g672a /></svg><svg class=g><use href=#g77e5 /></svg></div>
<div class="c r" style="left:758px;top:154px;width:77px;;"></div>
<div class="c r" style="left:835px;top:154px;width:67px;;"></div>
<div class="c r" style="left:902px;top:154px;width:56px;text-align:center;"><svg class=g><use href=#g672a /></svg><svg class=g><use href=#g77e5 /></svg></div>
<div class="c r" style="left:958px;top:154px;width:93px;text-align:center;"><svg class=g><use href=#g672a /></svg><svg class=g><use href=#g77e5 /></svg></div>
<div class="ind" style="left:0;top:171px;width:13px;height:17px"></div>
<div class="c r" style="left:13px;top:171px;width:56px;padding-left:2px;">10</div>
<div class="c r" style="left:69px;top:171px;width:121px;padding-left:2px;"><span class="mono">7: Steer</span></div>
<div class="c r" style="left:190px;top:171px;width:77px;text-align:center;"><svg class=g><use href=#g672a /></svg><svg class=g><use href=#g77e5 /></svg></div>
<div class="c r" style="left:267px;top:171px;width:67px;text-align:center;"><svg class=g><use href=#g672a /></svg><svg class=g><use href=#g77e5 /></svg></div>
<div class="c r" style="left:334px;top:171px;width:67px;text-align:center;"><svg class=g><use href=#g672a /></svg><svg class=g><use href=#g77e5 /></svg></div>
<div class="c r" style="left:401px;top:171px;width:56px;text-align:center;"><svg class=g><use href=#g672a /></svg><svg class=g><use href=#g77e5 /></svg></div>
<div class="c r" style="left:457px;top:171px;width:77px;text-align:center;"><svg class=g><use href=#g672a /></svg><svg class=g><use href=#g77e5 /></svg></div>
<div class="c r" style="left:534px;top:171px;width:56px;text-align:center;"><svg class=g><use href=#g672a /></svg><svg class=g><use href=#g77e5 /></svg></div>
<div class="c r" style="left:590px;top:171px;width:56px;text-align:center;"><svg class=g><use href=#g672a /></svg><svg class=g><use href=#g77e5 /></svg></div>
<div class="c r" style="left:646px;top:171px;width:56px;text-align:center;"><svg class=g><use href=#g672a /></svg><svg class=g><use href=#g77e5 /></svg></div>
<div class="c r" style="left:702px;top:171px;width:56px;text-align:center;"><svg class=g><use href=#g672a /></svg><svg class=g><use href=#g77e5 /></svg></div>
<div class="c r" style="left:758px;top:171px;width:77px;;"></div>
<div class="c r" style="left:835px;top:171px;width:67px;;"></div>
<div class="c r" style="left:902px;top:171px;width:56px;text-align:center;"><svg class=g><use href=#g672a /></svg><svg class=g><use href=#g77e5 /></svg></div>
<div class="c r" style="left:958px;top:171px;width:93px;text-align:center;"><svg class=g><use href=#g672a /></svg><svg class=g><use href=#g77e5 /></svg></div>
<div class="ind" style="left:0;top:188px;width:13px;height:17px"></div>
<div class="c r" style="left:13px;top:188px;width:56px;padding-left:2px;">11</div>
<div class="c r" style="left:69px;top:188px;width:121px;padding-left:2px;"><span class="mono">7: Steer</span></div>
<div class="c r" style="left:190px;top:188px;width:77px;text-align:center;"><svg class=g><use href=#g672a /></svg><svg class=g><use href=#g77e5 /></svg></div>
<div class="c r" style="left:267px;top:188px;width:67px;text-align:center;"><svg class=g><use href=#g672a /></svg><svg class=g><use href=#g77e5 /></svg></div>
<div class="c r" style="left:334px;top:188px;width:67px;text-align:center;"><svg class=g><use href=#g672a /></svg><svg class=g><use href=#g77e5 /></svg></div>
<div class="c r" style="left:401px;top:188px;width:56px;text-align:center;"><svg class=g><use href=#g672a /></svg><svg class=g><use href=#g77e5 /></svg></div>
<div class="c r" style="left:457px;top:188px;width:77px;text-align:center;"><svg class=g><use href=#g672a /></svg><svg class=g><use href=#g77e5 /></svg></div>
<div class="c r" style="left:534px;top:188px;width:56px;text-align:center;"><svg class=g><use href=#g672a /></svg><svg class=g><use href=#g77e5 /></svg></div>
<div class="c r" style="left:590px;top:188px;width:56px;text-align:center;"><svg class=g><use href=#g672a /></svg><svg class=g><use href=#g77e5 /></svg></div>
<div class="c r" style="left:646px;top:188px;width:56px;text-align:center;"><svg class=g><use href=#g672a /></svg><svg class=g><use href=#g77e5 /></svg></div>
<div class="c r" style="left:702px;top:188px;width:56px;text-align:center;"><svg class=g><use href=#g672a /></svg><svg class=g><use href=#g77e5 /></svg></div>
<div class="c r" style="left:758px;top:188px;width:77px;;"></div>
<div class="c r" style="left:835px;top:188px;width:67px;;"></div>
<div class="c r" style="left:902px;top:188px;width:56px;text-align:center;"><svg class=g><use href=#g672a /></svg><svg class=g><use href=#g77e5 /></svg></div>
<div class="c r" style="left:958px;top:188px;width:93px;text-align:center;"><svg class=g><use href=#g672a /></svg><svg class=g><use href=#g77e5 /></svg></div>
<div class="ind" style="left:0;top:205px;width:13px;height:17px"></div>
<div class="c r" style="left:13px;top:205px;width:56px;padding-left:2px;">12</div>
<div class="c r" style="left:69px;top:205px;width:121px;padding-left:2px;"><span class="mono">7: Steer</span></div>
<div class="c r" style="left:190px;top:205px;width:77px;text-align:center;"><svg class=g><use href=#g672a /></svg><svg class=g><use href=#g77e5 /></svg></div>
<div class="c r" style="left:267px;top:205px;width:67px;text-align:center;"><svg class=g><use href=#g672a /></svg><svg class=g><use href=#g77e5 /></svg></div>
<div class="c r" style="left:334px;top:205px;width:67px;text-align:center;"><svg class=g><use href=#g672a /></svg><svg class=g><use href=#g77e5 /></svg></div>
<div class="c r" style="left:401px;top:205px;width:56px;text-align:center;"><svg class=g><use href=#g672a /></svg><svg class=g><use href=#g77e5 /></svg></div>
<div class="c r" style="left:457px;top:205px;width:77px;text-align:center;"><svg class=g><use href=#g672a /></svg><svg class=g><use href=#g77e5 /></svg></div>
<div class="c r" style="left:534px;top:205px;width:56px;text-align:center;"><svg class=g><use href=#g672a /></svg><svg class=g><use href=#g77e5 /></svg></div>
<div class="c r" style="left:590px;top:205px;width:56px;text-align:center;"><svg class=g><use href=#g672a /></svg><svg class=g><use href=#g77e5 /></svg></div>
<div class="c r" style="left:646px;top:205px;width:56px;text-align:center;"><svg class=g><use href=#g672a /></svg><svg class=g><use href=#g77e5 /></svg></div>
<div class="c r" style="left:702px;top:205px;width:56px;text-align:center;"><svg class=g><use href=#g672a /></svg><svg class=g><use href=#g77e5 /></svg></div>
<div class="c r" style="left:758px;top:205px;width:77px;;"></div>
<div class="c r" style="left:835px;top:205px;width:67px;;"></div>
<div class="c r" style="left:902px;top:205px;width:56px;text-align:center;"><svg class=g><use href=#g672a /></svg><svg class=g><use href=#g77e5 /></svg></div>
<div class="c r" style="left:958px;top:205px;width:93px;text-align:center;"><svg class=g><use href=#g672a /></svg><svg class=g><use href=#g77e5 /></svg></div>
<div class="ind" style="left:0;top:222px;width:13px;height:17px"></div>
<div class="c r" style="left:13px;top:222px;width:56px;padding-left:2px;">13</div>
<div class="c r" style="left:69px;top:222px;width:121px;padding-left:2px;"><span class="mono">7: Steer</span></div>
<div class="c r" style="left:190px;top:222px;width:77px;text-align:center;"><svg class=g><use href=#g672a /></svg><svg class=g><use href=#g77e5 /></svg></div>
<div class="c r" style="left:267px;top:222px;width:67px;text-align:center;"><svg class=g><use href=#g672a /></svg><svg class=g><use href=#g77e5 /></svg></div>
<div class="c r" style="left:334px;top:222px;width:67px;text-align:center;"><svg class=g><use href=#g672a /></svg><svg class=g><use href=#g77e5 /></svg></div>
<div class="c r" style="left:401px;top:222px;width:56px;text-align:center;"><svg class=g><use href=#g672a /></svg><svg class=g><use href=#g77e5 /></svg></div>
<div class="c r" style="left:457px;top:222px;width:77px;text-align:center;"><svg class=g><use href=#g672a /></svg><svg class=g><use href=#g77e5 /></svg></div>
<div class="c r" style="left:534px;top:222px;width:56px;text-align:center;"><svg class=g><use href=#g672a /></svg><svg class=g><use href=#g77e5 /></svg></div>
<div class="c r" style="left:590px;top:222px;width:56px;text-align:center;"><svg class=g><use href=#g672a /></svg><svg class=g><use href=#g77e5 /></svg></div>
<div class="c r" style="left:646px;top:222px;width:56px;text-align:center;"><svg class=g><use href=#g672a /></svg><svg class=g><use href=#g77e5 /></svg></div>
<div class="c r" style="left:702px;top:222px;width:56px;text-align:center;"><svg class=g><use href=#g672a /></svg><svg class=g><use href=#g77e5 /></svg></div>
<div class="c r" style="left:758px;top:222px;width:77px;;"></div>
<div class="c r" style="left:835px;top:222px;width:67px;;"></div>
<div class="c r" style="left:902px;top:222px;width:56px;text-align:center;"><svg class=g><use href=#g672a /></svg><svg class=g><use href=#g77e5 /></svg></div>
<div class="c r" style="left:958px;top:222px;width:93px;text-align:center;"><svg class=g><use href=#g672a /></svg><svg class=g><use href=#g77e5 /></svg></div>
<div class="ind" style="left:0;top:239px;width:13px;height:17px"></div>
<div class="c r" style="left:13px;top:239px;width:56px;padding-left:2px;">14</div>
<div class="c r" style="left:69px;top:239px;width:121px;padding-left:2px;"><span class="mono">7: Steer</span></div>
<div class="c r" style="left:190px;top:239px;width:77px;text-align:center;"><svg class=g><use href=#g672a /></svg><svg class=g><use href=#g77e5 /></svg></div>
<div class="c r" style="left:267px;top:239px;width:67px;text-align:center;"><svg class=g><use href=#g672a /></svg><svg class=g><use href=#g77e5 /></svg></div>
<div class="c r" style="left:334px;top:239px;width:67px;text-align:center;"><svg class=g><use href=#g672a /></svg><svg class=g><use href=#g77e5 /></svg></div>
<div class="c r" style="left:401px;top:239px;width:56px;text-align:center;"><svg class=g><use href=#g672a /></svg><svg class=g><use href=#g77e5 /></svg></div>
<div class="c r" style="left:457px;top:239px;width:77px;text-align:center;"><svg class=g><use href=#g672a /></svg><svg class=g><use href=#g77e5 /></svg></div>
<div class="c r" style="left:534px;top:239px;width:56px;text-align:center;"><svg class=g><use href=#g672a /></svg><svg class=g><use href=#g77e5 /></svg></div>
<div class="c r" style="left:590px;top:239px;width:56px;text-align:center;"><svg class=g><use href=#g672a /></svg><svg class=g><use href=#g77e5 /></svg></div>
<div class="c r" style="left:646px;top:239px;width:56px;text-align:center;"><svg class=g><use href=#g672a /></svg><svg class=g><use href=#g77e5 /></svg></div>
<div class="c r" style="left:702px;top:239px;width:56px;text-align:center;"><svg class=g><use href=#g672a /></svg><svg class=g><use href=#g77e5 /></svg></div>
<div class="c r" style="left:758px;top:239px;width:77px;;"></div>
<div class="c r" style="left:835px;top:239px;width:67px;;"></div>
<div class="c r" style="left:902px;top:239px;width:56px;text-align:center;"><svg class=g><use href=#g672a /></svg><svg class=g><use href=#g77e5 /></svg></div>
<div class="c r" style="left:958px;top:239px;width:93px;text-align:center;"><svg class=g><use href=#g672a /></svg><svg class=g><use href=#g77e5 /></svg></div>
<div class="ind" style="left:0;top:256px;width:13px;height:17px"></div>
<div class="c r" style="left:13px;top:256px;width:56px;padding-left:2px;">15</div>
<div class="c r" style="left:69px;top:256px;width:121px;padding-left:2px;"><span class="mono">7: Steer</span></div>
<div class="c r" style="left:190px;top:256px;width:77px;text-align:center;"><svg class=g><use href=#g672a /></svg><svg class=g><use href=#g77e5 /></svg></div>
<div class="c r" style="left:267px;top:256px;width:67px;text-align:center;"><svg class=g><use href=#g672a /></svg><svg class=g><use href=#g77e5 /></svg></div>
<div class="c r" style="left:334px;top:256px;width:67px;text-align:center;"><svg class=g><use href=#g672a /></svg><svg class=g><use href=#g77e5 /></svg></div>
<div class="c r" style="left:401px;top:256px;width:56px;text-align:center;"><svg class=g><use href=#g672a /></svg><svg class=g><use href=#g77e5 /></svg></div>
<div class="c r" style="left:457px;top:256px;width:77px;text-align:center;"><svg class=g><use href=#g672a /></svg><svg class=g><use href=#g77e5 /></svg></div>
<div class="c r" style="left:534px;top:256px;width:56px;text-align:center;"><svg class=g><use href=#g672a /></svg><svg class=g><use href=#g77e5 /></svg></div>
<div class="c r" style="left:590px;top:256px;width:56px;text-align:center;"><svg class=g><use href=#g672a /></svg><svg class=g><use href=#g77e5 /></svg></div>
<div class="c r" style="left:646px;top:256px;width:56px;text-align:center;"><svg class=g><use href=#g672a /></svg><svg class=g><use href=#g77e5 /></svg></div>
<div class="c r" style="left:702px;top:256px;width:56px;text-align:center;"><svg class=g><use href=#g672a /></svg><svg class=g><use href=#g77e5 /></svg></div>
<div class="c r" style="left:758px;top:256px;width:77px;;"></div>
<div class="c r" style="left:835px;top:256px;width:67px;;"></div>
<div class="c r" style="left:902px;top:256px;width:56px;text-align:center;"><svg class=g><use href=#g672a /></svg><svg class=g><use href=#g77e5 /></svg></div>
<div class="c r" style="left:958px;top:256px;width:93px;text-align:center;"><svg class=g><use href=#g672a /></svg><svg class=g><use href=#g77e5 /></svg></div>
<div class="ind" style="left:0;top:273px;width:13px;height:17px"></div>
<div class="c r" style="left:13px;top:273px;width:56px;padding-left:2px;">16</div>
<div class="c r" style="left:69px;top:273px;width:121px;padding-left:2px;"><span class="mono">7: Steer</span></div>
<div class="c r" style="left:190px;top:273px;width:77px;text-align:center;"><svg class=g><use href=#g672a /></svg><svg class=g><use href=#g77e5 /></svg></div>
<div class="c r" style="left:267px;top:273px;width:67px;text-align:center;"><svg class=g><use href=#g672a /></svg><svg class=g><use href=#g77e5 /></svg></div>
<div class="c r" style="left:334px;top:273px;width:67px;text-align:center;"><svg class=g><use href=#g672a /></svg><svg class=g><use href=#g77e5 /></svg></div>
<div class="c r" style="left:401px;top:273px;width:56px;text-align:center;"><svg class=g><use href=#g672a /></svg><svg class=g><use href=#g77e5 /></svg></div>
<div class="c r" style="left:457px;top:273px;width:77px;text-align:center;"><svg class=g><use href=#g672a /></svg><svg class=g><use href=#g77e5 /></svg></div>
<div class="c r" style="left:534px;top:273px;width:56px;text-align:center;"><svg class=g><use href=#g672a /></svg><svg class=g><use href=#g77e5 /></svg></div>
<div class="c r" style="left:590px;top:273px;width:56px;text-align:center;"><svg class=g><use href=#g672a /></svg><svg class=g><use href=#g77e5 /></svg></div>
<div class="c r" style="left:646px;top:273px;width:56px;text-align:center;"><svg class=g><use href=#g672a /></svg><svg class=g><use href=#g77e5 /></svg></div>
<div class="c r" style="left:702px;top:273px;width:56px;text-align:center;"><svg class=g><use href=#g672a /></svg><svg class=g><use href=#g77e5 /></svg></div>
<div class="c r" style="left:758px;top:273px;width:77px;;"></div>
<div class="c r" style="left:835px;top:273px;width:67px;;"></div>
<div class="c r" style="left:902px;top:273px;width:56px;text-align:center;"><svg class=g><use href=#g672a /></svg><svg class=g><use href=#g77e5 /></svg></div>
<div class="c r" style="left:958px;top:273px;width:93px;text-align:center;"><svg class=g><use href=#g672a /></svg><svg class=g><use href=#g77e5 /></svg></div>
<div class="ind" style="left:0;top:290px;width:13px;height:17px"></div>
<div class="c r" style="left:13px;top:290px;width:56px;padding-left:2px;">17</div>
<div class="c r" style="left:69px;top:290px;width:121px;padding-left:2px;"><span class="mono">7: Steer</span></div>
<div class="c r" style="left:190px;top:290px;width:77px;text-align:center;"><svg class=g><use href=#g672a /></svg><svg class=g><use href=#g77e5 /></svg></div>
<div class="c r" style="left:267px;top:290px;width:67px;text-align:center;"><svg class=g><use href=#g672a /></svg><svg class=g><use href=#g77e5 /></svg></div>
<div class="c r" style="left:334px;top:290px;width:67px;text-align:center;"><svg class=g><use href=#g672a /></svg><svg class=g><use href=#g77e5 /></svg></div>
<div class="c r" style="left:401px;top:290px;width:56px;text-align:center;"><svg class=g><use href=#g672a /></svg><svg class=g><use href=#g77e5 /></svg></div>
<div class="c r" style="left:457px;top:290px;width:77px;text-align:center;"><svg class=g><use href=#g672a /></svg><svg class=g><use href=#g77e5 /></svg></div>
<div class="c r" style="left:534px;top:290px;width:56px;text-align:center;"><svg class=g><use href=#g672a /></svg><svg class=g><use href=#g77e5 /></svg></div>
<div class="c r" style="left:590px;top:290px;width:56px;text-align:center;"><svg class=g><use href=#g672a /></svg><svg class=g><use href=#g77e5 /></svg></div>
<div class="c r" style="left:646px;top:290px;width:56px;text-align:center;"><svg class=g><use href=#g672a /></svg><svg class=g><use href=#g77e5 /></svg></div>
<div class="c r" style="left:702px;top:290px;width:56px;text-align:center;"><svg class=g><use href=#g672a /></svg><svg class=g><use href=#g77e5 /></svg></div>
<div class="c r" style="left:758px;top:290px;width:77px;;"></div>
<div class="c r" style="left:835px;top:290px;width:67px;;"></div>
<div class="c r" style="left:902px;top:290px;width:56px;text-align:center;"><svg class=g><use href=#g672a /></svg><svg class=g><use href=#g77e5 /></svg></div>
<div class="c r" style="left:958px;top:290px;width:93px;text-align:center;"><svg class=g><use href=#g672a /></svg><svg class=g><use href=#g77e5 /></svg></div>
<div class="ind" style="left:0;top:307px;width:13px;height:17px"></div>
<div class="c r" style="left:13px;top:307px;width:56px;padding-left:2px;">18</div>
<div class="c r" style="left:69px;top:307px;width:121px;padding-left:2px;"><span class="mono">7: Steer</span></div>
<div class="c r" style="left:190px;top:307px;width:77px;text-align:center;"><svg class=g><use href=#g672a /></svg><svg class=g><use href=#g77e5 /></svg></div>
<div class="c r" style="left:267px;top:307px;width:67px;text-align:center;"><svg class=g><use href=#g672a /></svg><svg class=g><use href=#g77e5 /></svg></div>
<div class="c r" style="left:334px;top:307px;width:67px;text-align:center;"><svg class=g><use href=#g672a /></svg><svg class=g><use href=#g77e5 /></svg></div>
<div class="c r" style="left:401px;top:307px;width:56px;text-align:center;"><svg class=g><use href=#g672a /></svg><svg class=g><use href=#g77e5 /></svg></div>
<div class="c r" style="left:457px;top:307px;width:77px;text-align:center;"><svg class=g><use href=#g672a /></svg><svg class=g><use href=#g77e5 /></svg></div>
<div class="c r" style="left:534px;top:307px;width:56px;text-align:center;"><svg class=g><use href=#g672a /></svg><svg class=g><use href=#g77e5 /></svg></div>
<div class="c r" style="left:590px;top:307px;width:56px;text-align:center;"><svg class=g><use href=#g672a /></svg><svg class=g><use href=#g77e5 /></svg></div>
<div class="c r" style="left:646px;top:307px;width:56px;text-align:center;"><svg class=g><use href=#g672a /></svg><svg class=g><use href=#g77e5 /></svg></div>
<div class="c r" style="left:702px;top:307px;width:56px;text-align:center;"><svg class=g><use href=#g672a /></svg><svg class=g><use href=#g77e5 /></svg></div>
<div class="c r" style="left:758px;top:307px;width:77px;;"></div>
<div class="c r" style="left:835px;top:307px;width:67px;;"></div>
<div class="c r" style="left:902px;top:307px;width:56px;text-align:center;"><svg class=g><use href=#g672a /></svg><svg class=g><use href=#g77e5 /></svg></div>
<div class="c r" style="left:958px;top:307px;width:93px;text-align:center;"><svg class=g><use href=#g672a /></svg><svg class=g><use href=#g77e5 /></svg></div>
<div class="ind" style="left:0;top:324px;width:13px;height:17px"></div>
<div class="c r" style="left:13px;top:324px;width:56px;padding-left:2px;">19</div>
<div class="c r" style="left:69px;top:324px;width:121px;padding-left:2px;"><span class="mono">7: Steer</span></div>
<div class="c r" style="left:190px;top:324px;width:77px;text-align:center;"><svg class=g><use href=#g672a /></svg><svg class=g><use href=#g77e5 /></svg></div>
<div class="c r" style="left:267px;top:324px;width:67px;text-align:center;"><svg class=g><use href=#g672a /></svg><svg class=g><use href=#g77e5 /></svg></div>
<div class="c r" style="left:334px;top:324px;width:67px;text-align:center;"><svg class=g><use href=#g672a /></svg><svg class=g><use href=#g77e5 /></svg></div>
<div class="c r" style="left:401px;top:324px;width:56px;text-align:center;"><svg class=g><use href=#g672a /></svg><svg class=g><use href=#g77e5 /></svg></div>
<div class="c r" style="left:457px;top:324px;width:77px;text-align:center;"><svg class=g><use href=#g672a /></svg><svg class=g><use href=#g77e5 /></svg></div>
<div class="c r" style="left:534px;top:324px;width:56px;text-align:center;"><svg class=g><use href=#g672a /></svg><svg class=g><use href=#g77e5 /></svg></div>
<div class="c r" style="left:590px;top:324px;width:56px;text-align:center;"><svg class=g><use href=#g672a /></svg><svg class=g><use href=#g77e5 /></svg></div>
<div class="c r" style="left:646px;top:324px;width:56px;text-align:center;"><svg class=g><use href=#g672a /></svg><svg class=g><use href=#g77e5 /></svg></div>
<div class="c r" style="left:702px;top:324px;width:56px;text-align:center;"><svg class=g><use href=#g672a /></svg><svg class=g><use href=#g77e5 /></svg></div>
<div class="c r" style="left:758px;top:324px;width:77px;;"></div>
<div class="c r" style="left:835px;top:324px;width:67px;;"></div>
<div class="c r" style="left:902px;top:324px;width:56px;text-align:center;"><svg class=g><use href=#g672a /></svg><svg class=g><use href=#g77e5 /></svg></div>
<div class="c r" style="left:958px;top:324px;width:93px;text-align:center;"><svg class=g><use href=#g672a /></svg><svg class=g><use href=#g77e5 /></svg></div>
<div class="ind" style="left:0;top:341px;width:13px;height:17px"></div>
<div class="c r" style="left:13px;top:341px;width:56px;padding-left:2px;">20</div>
<div class="c r" style="left:69px;top:341px;width:121px;padding-left:2px;"><span class="mono">7: Steer</span></div>
<div class="c r" style="left:190px;top:341px;width:77px;text-align:center;"><svg class=g><use href=#g672a /></svg><svg class=g><use href=#g77e5 /></svg></div>
<div class="c r" style="left:267px;top:341px;width:67px;text-align:center;"><svg class=g><use href=#g672a /></svg><svg class=g><use href=#g77e5 /></svg></div>
<div class="c r" style="left:334px;top:341px;width:67px;text-align:center;"><svg class=g><use href=#g672a /></svg><svg class=g><use href=#g77e5 /></svg></div>
<div class="c r" style="left:401px;top:341px;width:56px;text-align:center;"><svg class=g><use href=#g672a /></svg><svg class=g><use href=#g77e5 /></svg></div>
<div class="c r" style="left:457px;top:341px;width:77px;text-align:center;"><svg class=g><use href=#g672a /></svg><svg class=g><use href=#g77e5 /></svg></div>
<div class="c r" style="left:534px;top:341px;width:56px;text-align:center;"><svg class=g><use href=#g672a /></svg><svg class=g><use href=#g77e5 /></svg></div>
<div class="c r" style="left:590px;top:341px;width:56px;text-align:center;"><svg class=g><use href=#g672a /></svg><svg class=g><use href=#g77e5 /></svg></div>
<div class="c r" style="left:646px;top:341px;width:56px;text-align:center;"><svg class=g><use href=#g672a /></svg><svg class=g><use href=#g77e5 /></svg></div>
<div class="c r" style="left:702px;top:341px;width:56px;text-align:center;"><svg class=g><use href=#g672a /></svg><svg class=g><use href=#g77e5 /></svg></div>
<div class="c r" style="left:758px;top:341px;width:77px;;"></div>
<div class="c r" style="left:835px;top:341px;width:67px;;"></div>
<div class="c r" style="left:902px;top:341px;width:56px;text-align:center;"><svg class=g><use href=#g672a /></svg><svg class=g><use href=#g77e5 /></svg></div>
<div class="c r" style="left:958px;top:341px;width:93px;text-align:center;"><svg class=g><use href=#g672a /></svg><svg class=g><use href=#g77e5 /></svg></div>
<div class="ind" style="left:0;top:358px;width:13px;height:17px"></div>
<div class="c r" style="left:13px;top:358px;width:56px;padding-left:2px;">21</div>
<div class="c r" style="left:69px;top:358px;width:121px;padding-left:2px;"><span class="mono">7: Steer</span></div>
<div class="c r" style="left:190px;top:358px;width:77px;text-align:center;"><svg class=g><use href=#g672a /></svg><svg class=g><use href=#g77e5 /></svg></div>
<div class="c r" style="left:267px;top:358px;width:67px;text-align:center;"><svg class=g><use href=#g672a /></svg><svg class=g><use href=#g77e5 /></svg></div>
<div class="c r" style="left:334px;top:358px;width:67px;text-align:center;"><svg class=g><use href=#g672a /></svg><svg class=g><use href=#g77e5 /></svg></div>
<div class="c r" style="left:401px;top:358px;width:56px;text-align:center;"><svg class=g><use href=#g672a /></svg><svg class=g><use href=#g77e5 /></svg></div>
<div class="c r" style="left:457px;top:358px;width:77px;text-align:center;"><svg class=g><use href=#g672a /></svg><svg class=g><use href=#g77e5 /></svg></div>
<div class="c r" style="left:534px;top:358px;width:56px;text-align:center;"><svg class=g><use href=#g672a /></svg><svg class=g><use href=#g77e5 /></svg></div>
<div class="c r" style="left:590px;top:358px;width:56px;text-align:center;"><svg class=g><use href=#g672a /></svg><svg class=g><use href=#g77e5 /></svg></div>
<div class="c r" style="left:646px;top:358px;width:56px;text-align:center;"><svg class=g><use href=#g672a /></svg><svg class=g><use href=#g77e5 /></svg></div>
<div class="c r" style="left:702px;top:358px;width:56px;text-align:center;"><svg class=g><use href=#g672a /></svg><svg class=g><use href=#g77e5 /></svg></div>
<div class="c r" style="left:758px;top:358px;width:77px;;"></div>
<div class="c r" style="left:835px;top:358px;width:67px;;"></div>
<div class="c r" style="left:902px;top:358px;width:56px;text-align:center;"><svg class=g><use href=#g672a /></svg><svg class=g><use href=#g77e5 /></svg></div>
<div class="c r" style="left:958px;top:358px;width:93px;text-align:center;"><svg class=g><use href=#g672a /></svg><svg class=g><use href=#g77e5 /></svg></div>
<div class="ind" style="left:0;top:375px;width:13px;height:17px"></div>
<div class="c r" style="left:13px;top:375px;width:56px;padding-left:2px;">22</div>
<div class="c r" style="left:69px;top:375px;width:121px;padding-left:2px;"><span class="mono">7: Steer</span></div>
<div class="c r" style="left:190px;top:375px;width:77px;text-align:center;"><svg class=g><use href=#g672a /></svg><svg class=g><use href=#g77e5 /></svg></div>
<div class="c r" style="left:267px;top:375px;width:67px;text-align:center;"><svg class=g><use href=#g672a /></svg><svg class=g><use href=#g77e5 /></svg></div>
<div class="c r" style="left:334px;top:375px;width:67px;text-align:center;"><svg class=g><use href=#g672a /></svg><svg class=g><use href=#g77e5 /></svg></div>
<div class="c r" style="left:401px;top:375px;width:56px;text-align:center;"><svg class=g><use href=#g672a /></svg><svg class=g><use href=#g77e5 /></svg></div>
<div class="c r" style="left:457px;top:375px;width:77px;text-align:center;"><svg class=g><use href=#g672a /></svg><svg class=g><use href=#g77e5 /></svg></div>
<div class="c r" style="left:534px;top:375px;width:56px;text-align:center;"><svg class=g><use href=#g672a /></svg><svg class=g><use href=#g77e5 /></svg></div>
<div class="c r" style="left:590px;top:375px;width:56px;text-align:center;"><svg class=g><use href=#g672a /></svg><svg class=g><use href=#g77e5 /></svg></div>
<div class="c r" style="left:646px;top:375px;width:56px;text-align:center;"><svg class=g><use href=#g672a /></svg><svg class=g><use href=#g77e5 /></svg></div>
<div class="c r" style="left:702px;top:375px;width:56px;text-align:center;"><svg class=g><use href=#g672a /></svg><svg class=g><use href=#g77e5 /></svg></div>
<div class="c r" style="left:758px;top:375px;width:77px;;"></div>
<div class="c r" style="left:835px;top:375px;width:67px;;"></div>
<div class="c r" style="left:902px;top:375px;width:56px;text-align:center;"><svg class=g><use href=#g672a /></svg><svg class=g><use href=#g77e5 /></svg></div>
<div class="c r" style="left:958px;top:375px;width:93px;text-align:center;"><svg class=g><use href=#g672a /></svg><svg class=g><use href=#g77e5 /></svg></div>
<div class="ind" style="left:0;top:392px;width:13px;height:17px"></div>
<div class="c r" style="left:13px;top:392px;width:56px;padding-left:2px;">23</div>
<div class="c r" style="left:69px;top:392px;width:121px;padding-left:2px;"><span class="mono">7: Steer</span></div>
<div class="c r" style="left:190px;top:392px;width:77px;text-align:center;"><svg class=g><use href=#g672a /></svg><svg class=g><use href=#g77e5 /></svg></div>
<div class="c r" style="left:267px;top:392px;width:67px;text-align:center;"><svg class=g><use href=#g672a /></svg><svg class=g><use href=#g77e5 /></svg></div>
<div class="c r" style="left:334px;top:392px;width:67px;text-align:center;"><svg class=g><use href=#g672a /></svg><svg class=g><use href=#g77e5 /></svg></div>
<div class="c r" style="left:401px;top:392px;width:56px;text-align:center;"><svg class=g><use href=#g672a /></svg><svg class=g><use href=#g77e5 /></svg></div>
<div class="c r" style="left:457px;top:392px;width:77px;text-align:center;"><svg class=g><use href=#g672a /></svg><svg class=g><use href=#g77e5 /></svg></div>
<div class="c r" style="left:534px;top:392px;width:56px;text-align:center;"><svg class=g><use href=#g672a /></svg><svg class=g><use href=#g77e5 /></svg></div>
<div class="c r" style="left:590px;top:392px;width:56px;text-align:center;"><svg class=g><use href=#g672a /></svg><svg class=g><use href=#g77e5 /></svg></div>
<div class="c r" style="left:646px;top:392px;width:56px;text-align:center;"><svg class=g><use href=#g672a /></svg><svg class=g><use href=#g77e5 /></svg></div>
<div class="c r" style="left:702px;top:392px;width:56px;text-align:center;"><svg class=g><use href=#g672a /></svg><svg class=g><use href=#g77e5 /></svg></div>
<div class="c r" style="left:758px;top:392px;width:77px;;"></div>
<div class="c r" style="left:835px;top:392px;width:67px;;"></div>
<div class="c r" style="left:902px;top:392px;width:56px;text-align:center;"><svg class=g><use href=#g672a /></svg><svg class=g><use href=#g77e5 /></svg></div>
<div class="c r" style="left:958px;top:392px;width:93px;text-align:center;"><svg class=g><use href=#g672a /></svg><svg class=g><use href=#g77e5 /></svg></div>
<div class="ind" style="left:0;top:409px;width:13px;height:17px"></div>
<div class="c r" style="left:13px;top:409px;width:56px;padding-left:2px;">24</div>
<div class="c r" style="left:69px;top:409px;width:121px;padding-left:2px;"><span class="mono">7: Steer</span></div>
<div class="c r" style="left:190px;top:409px;width:77px;text-align:center;"><svg class=g><use href=#g672a /></svg><svg class=g><use href=#g77e5 /></svg></div>
<div class="c r" style="left:267px;top:409px;width:67px;text-align:center;"><svg class=g><use href=#g672a /></svg><svg class=g><use href=#g77e5 /></svg></div>
<div class="c r" style="left:334px;top:409px;width:67px;text-align:center;"><svg class=g><use href=#g672a /></svg><svg class=g><use href=#g77e5 /></svg></div>
<div class="c r" style="left:401px;top:409px;width:56px;text-align:center;"><svg class=g><use href=#g672a /></svg><svg class=g><use href=#g77e5 /></svg></div>
<div class="c r" style="left:457px;top:409px;width:77px;text-align:center;"><svg class=g><use href=#g672a /></svg><svg class=g><use href=#g77e5 /></svg></div>
<div class="c r" style="left:534px;top:409px;width:56px;text-align:center;"><svg class=g><use href=#g672a /></svg><svg class=g><use href=#g77e5 /></svg></div>
<div class="c r" style="left:590px;top:409px;width:56px;text-align:center;"><svg class=g><use href=#g672a /></svg><svg class=g><use href=#g77e5 /></svg></div>
<div class="c r" style="left:646px;top:409px;width:56px;text-align:center;"><svg class=g><use href=#g672a /></svg><svg class=g><use href=#g77e5 /></svg></div>
<div class="c r" style="left:702px;top:409px;width:56px;text-align:center;"><svg class=g><use href=#g672a /></svg><svg class=g><use href=#g77e5 /></svg></div>
<div class="c r" style="left:758px;top:409px;width:77px;;"></div>
<div class="c r" style="left:835px;top:409px;width:67px;;"></div>
<div class="c r" style="left:902px;top:409px;width:56px;text-align:center;"><svg class=g><use href=#g672a /></svg><svg class=g><use href=#g77e5 /></svg></div>
<div class="c r" style="left:958px;top:409px;width:93px;text-align:center;"><svg class=g><use href=#g672a /></svg><svg class=g><use href=#g77e5 /></svg></div>
<div class="ind" style="left:0;top:426px;width:13px;height:17px"></div>
<div class="c r" style="left:13px;top:426px;width:56px;padding-left:2px;">25</div>
<div class="c r" style="left:69px;top:426px;width:121px;padding-left:2px;"><span class="mono">7: Steer</span></div>
<div class="c r" style="left:190px;top:426px;width:77px;text-align:center;"><svg class=g><use href=#g672a /></svg><svg class=g><use href=#g77e5 /></svg></div>
<div class="c r" style="left:267px;top:426px;width:67px;text-align:center;"><svg class=g><use href=#g672a /></svg><svg class=g><use href=#g77e5 /></svg></div>
<div class="c r" style="left:334px;top:426px;width:67px;text-align:center;"><svg class=g><use href=#g672a /></svg><svg class=g><use href=#g77e5 /></svg></div>
<div class="c r" style="left:401px;top:426px;width:56px;text-align:center;"><svg class=g><use href=#g672a /></svg><svg class=g><use href=#g77e5 /></svg></div>
<div class="c r" style="left:457px;top:426px;width:77px;text-align:center;"><svg class=g><use href=#g672a /></svg><svg class=g><use href=#g77e5 /></svg></div>
<div class="c r" style="left:534px;top:426px;width:56px;text-align:center;"><svg class=g><use href=#g672a /></svg><svg class=g><use href=#g77e5 /></svg></div>
<div class="c r" style="left:590px;top:426px;width:56px;text-align:center;"><svg class=g><use href=#g672a /></svg><svg class=g><use href=#g77e5 /></svg></div>
<div class="c r" style="left:646px;top:426px;width:56px;text-align:center;"><svg class=g><use href=#g672a /></svg><svg class=g><use href=#g77e5 /></svg></div>
<div class="c r" style="left:702px;top:426px;width:56px;text-align:center;"><svg class=g><use href=#g672a /></svg><svg class=g><use href=#g77e5 /></svg></div>
<div class="c r" style="left:758px;top:426px;width:77px;;"></div>
<div class="c r" style="left:835px;top:426px;width:67px;;"></div>
<div class="c r" style="left:902px;top:426px;width:56px;text-align:center;"><svg class=g><use href=#g672a /></svg><svg class=g><use href=#g77e5 /></svg></div>
<div class="c r" style="left:958px;top:426px;width:93px;text-align:center;"><svg class=g><use href=#g672a /></svg><svg class=g><use href=#g77e5 /></svg></div>
<div class="ind" style="left:0;top:443px;width:13px;height:17px"></div>
<div class="c r" style="left:13px;top:443px;width:56px;padding-left:2px;">26</div>
<div class="c r" style="left:69px;top:443px;width:121px;padding-left:2px;"><span class="mono">7: Steer</span></div>
<div class="c r" style="left:190px;top:443px;width:77px;text-align:center;"><svg class=g><use href=#g672a /></svg><svg class=g><use href=#g77e5 /></svg></div>
<div class="c r" style="left:267px;top:443px;width:67px;text-align:center;"><svg class=g><use href=#g672a /></svg><svg class=g><use href=#g77e5 /></svg></div>
<div class="c r" style="left:334px;top:443px;width:67px;text-align:center;"><svg class=g><use href=#g672a /></svg><svg class=g><use href=#g77e5 /></svg></div>
<div class="c r" style="left:401px;top:443px;width:56px;text-align:center;"><svg class=g><use href=#g672a /></svg><svg class=g><use href=#g77e5 /></svg></div>
<div class="c r" style="left:457px;top:443px;width:77px;text-align:center;"><svg class=g><use href=#g672a /></svg><svg class=g><use href=#g77e5 /></svg></div>
<div class="c r" style="left:534px;top:443px;width:56px;text-align:center;"><svg class=g><use href=#g672a /></svg><svg class=g><use href=#g77e5 /></svg></div>
<div class="c r" style="left:590px;top:443px;width:56px;text-align:center;"><svg class=g><use href=#g672a /></svg><svg class=g><use href=#g77e5 /></svg></div>
<div class="c r" style="left:646px;top:443px;width:56px;text-align:center;"><svg class=g><use href=#g672a /></svg><svg class=g><use href=#g77e5 /></svg></div>
<div class="c r" style="left:702px;top:443px;width:56px;text-align:center;"><svg class=g><use href=#g672a /></svg><svg class=g><use href=#g77e5 /></svg></div>
<div class="c r" style="left:758px;top:443px;width:77px;;"></div>
<div class="c r" style="left:835px;top:443px;width:67px;;"></div>
<div class="c r" style="left:902px;top:443px;width:56px;text-align:center;"><svg class=g><use href=#g672a /></svg><svg class=g><use href=#g77e5 /></svg></div>
<div class="c r" style="left:958px;top:443px;width:93px;text-align:center;"><svg class=g><use href=#g672a /></svg><svg class=g><use href=#g77e5 /></svg></div>
<div class="ind" style="left:0;top:460px;width:13px;height:17px"></div>
<div class="c r" style="left:13px;top:460px;width:56px;padding-left:2px;">27</div>
<div class="c r" style="left:69px;top:460px;width:121px;padding-left:2px;"><span class="mono">7: Steer</span></div>
<div class="c r" style="left:190px;top:460px;width:77px;text-align:center;"><svg class=g><use href=#g672a /></svg><svg class=g><use href=#g77e5 /></svg></div>
<div class="c r" style="left:267px;top:460px;width:67px;text-align:center;"><svg class=g><use href=#g672a /></svg><svg class=g><use href=#g77e5 /></svg></div>
<div class="c r" style="left:334px;top:460px;width:67px;text-align:center;"><svg class=g><use href=#g672a /></svg><svg class=g><use href=#g77e5 /></svg></div>
<div class="c r" style="left:401px;top:460px;width:56px;text-align:center;"><svg class=g><use href=#g672a /></svg><svg class=g><use href=#g77e5 /></svg></div>
<div class="c r" style="left:457px;top:460px;width:77px;text-align:center;"><svg class=g><use href=#g672a /></svg><svg class=g><use href=#g77e5 /></svg></div>
<div class="c r" style="left:534px;top:460px;width:56px;text-align:center;"><svg class=g><use href=#g672a /></svg><svg class=g><use href=#g77e5 /></svg></div>
<div class="c r" style="left:590px;top:460px;width:56px;text-align:center;"><svg class=g><use href=#g672a /></svg><svg class=g><use href=#g77e5 /></svg></div>
<div class="c r" style="left:646px;top:460px;width:56px;text-align:center;"><svg class=g><use href=#g672a /></svg><svg class=g><use href=#g77e5 /></svg></div>
<div class="c r" style="left:702px;top:460px;width:56px;text-align:center;"><svg class=g><use href=#g672a /></svg><svg class=g><use href=#g77e5 /></svg></div>
<div class="c r" style="left:758px;top:460px;width:77px;;"></div>
<div class="c r" style="left:835px;top:460px;width:67px;;"></div>
<div class="c r" style="left:902px;top:460px;width:56px;text-align:center;"><svg class=g><use href=#g672a /></svg><svg class=g><use href=#g77e5 /></svg></div>
<div class="c r" style="left:958px;top:460px;width:93px;text-align:center;"><svg class=g><use href=#g672a /></svg><svg class=g><use href=#g77e5 /></svg></div>
<div class="ind" style="left:0;top:477px;width:13px;height:17px"></div>
<div class="c r" style="left:13px;top:477px;width:56px;padding-left:2px;">28</div>
<div class="c r" style="left:69px;top:477px;width:121px;padding-left:2px;"><span class="mono">7: Steer</span></div>
<div class="c r" style="left:190px;top:477px;width:77px;text-align:center;"><svg class=g><use href=#g672a /></svg><svg class=g><use href=#g77e5 /></svg></div>
<div class="c r" style="left:267px;top:477px;width:67px;text-align:center;"><svg class=g><use href=#g672a /></svg><svg class=g><use href=#g77e5 /></svg></div>
<div class="c r" style="left:334px;top:477px;width:67px;text-align:center;"><svg class=g><use href=#g672a /></svg><svg class=g><use href=#g77e5 /></svg></div>
<div class="c r" style="left:401px;top:477px;width:56px;text-align:center;"><svg class=g><use href=#g672a /></svg><svg class=g><use href=#g77e5 /></svg></div>
<div class="c r" style="left:457px;top:477px;width:77px;text-align:center;"><svg class=g><use href=#g672a /></svg><svg class=g><use href=#g77e5 /></svg></div>
<div class="c r" style="left:534px;top:477px;width:56px;text-align:center;"><svg class=g><use href=#g672a /></svg><svg class=g><use href=#g77e5 /></svg></div>
<div class="c r" style="left:590px;top:477px;width:56px;text-align:center;"><svg class=g><use href=#g672a /></svg><svg class=g><use href=#g77e5 /></svg></div>
<div class="c r" style="left:646px;top:477px;width:56px;text-align:center;"><svg class=g><use href=#g672a /></svg><svg class=g><use href=#g77e5 /></svg></div>
<div class="c r" style="left:702px;top:477px;width:56px;text-align:center;"><svg class=g><use href=#g672a /></svg><svg class=g><use href=#g77e5 /></svg></div>
<div class="c r" style="left:758px;top:477px;width:77px;;"></div>
<div class="c r" style="left:835px;top:477px;width:67px;;"></div>
<div class="c r" style="left:902px;top:477px;width:56px;text-align:center;"><svg class=g><use href=#g672a /></svg><svg class=g><use href=#g77e5 /></svg></div>
<div class="c r" style="left:958px;top:477px;width:93px;text-align:center;"><svg class=g><use href=#g672a /></svg><svg class=g><use href=#g77e5 /></svg></div>
<div class="ab" style="left:1029px;top:1px;width:17px;height:500px;background:linear-gradient(90deg,#b0cccc,#e4eeee 65%,#fafcfc)"></div>
<svg class="ab" style="left:1029px;top:1px" width="17" height="17"><path d="M0.5,2 Q0.5,0.5 2,0.5 H15 Q16.5,0.5 16.5,2 V16.5 Q8.5,8 0.5,16.5 Z" fill="url(#gbtn)" stroke="#b4c4c4" stroke-width="1"/><path d="M5,8.5 L8.5,4.5 L12,8.5 L8.5,7 Z" fill="#4a8c8c"/></svg>
<svg class="ab" style="left:1029px;top:484px" width="17" height="17"><path d="M0.5,0.5 Q8.5,9 16.5,0.5 V15 Q16.5,16.5 15,16.5 H2 Q0.5,16.5 0.5,15 Z" fill="url(#gbtn)" stroke="#b4c4c4" stroke-width="1"/><path d="M5,9 L8.5,13 L12,9 L8.5,10.5 Z" fill="#4a8c8c"/></svg>
<svg class="ab" style="left:1029px;top:18px" width="17" height="221"><rect x="0.5" y="0.5" width="16" height="220" rx="8" ry="8" fill="url(#gthv)" stroke="url(#gstv)" stroke-width="1"/></svg>
<div class="ab" style="left:1034px;top:124px;width:7px;height:8px;background:repeating-linear-gradient(#e8ffff 0 1px,transparent 1px 2px)"></div>
<div class="ab" style="left:0px;top:501px;width:1029px;height:17px;background:linear-gradient(#b4cece,#e4eeee 65%,#fafcfc)"></div>
<div class="ab" style="left:1029px;top:501px;width:18px;height:18px;background:#c8dcd8"></div>
<svg class="ab" style="left:1px;top:501px" width="17" height="17"><path d="M2,0.5 H16.5 Q8,8.5 16.5,16.5 H2 Q0.5,16.5 0.5,15 V2 Q0.5,0.5 2,0.5 Z" fill="url(#gbtnh)" stroke="#b4c4c4" stroke-width="1"/><path d="M8.5,5 L4.5,8.5 L8.5,12 L7,8.5 Z" fill="#4a8c8c"/></svg>
<svg class="ab" style="left:18px;top:501px" width="17" height="17"><circle cx="8.5" cy="8.5" r="8" fill="url(#gthh)" stroke="#2e6c70" stroke-width="1"/><path d="M5.5 5 V11 M7.5 5 V11 M9.5 5 V11 M11.5 5 V11" stroke="#f0ffff" stroke-width="1"/></svg>
<svg class="ab" style="left:1012px;top:501px" width="17" height="17"><path d="M0.5,0.5 H15 Q16.5,0.5 16.5,2 V15 Q16.5,16.5 15,16.5 H0.5 Q9,8.5 0.5,0.5 Z" fill="url(#gbtnh)" stroke="#b4c4c4" stroke-width="1"/><path d="M8.5,5 L12.5,8.5 L8.5,12 L10,8.5 Z" fill="#4a8c8c"/></svg>
</div>
<div class="ab" style="left:1px;top:585px;width:1276px;height:8px;background:#e8f2f2"></div>
<div class="ab" style="left:1px;top:585px;width:1276px;height:1px;background:#d8d4c0"></div>
<div class="ab" style="left:1px;top:586px;width:1276px;height:2px;background:#fcfcf4"></div>
<div class="ab" style="left:1px;top:588px;width:1276px;height:1px;background:#a8a090"></div>
<div class="ab" style="left:1px;top:591px;width:1276px;height:2px;background:#9c9078"></div>
<div class="ab" style="left:1px;top:593px;width:2px;height:123px;background:#a09480"></div>
<div class="ab" style="left:3px;top:593px;width:1274px;height:123px;border:1px solid #1060c0;background:#fff;overflow:hidden">
<div class="ind" style="left:1px;top:1px;width:12px;height:17px"></div>
<div class="hc" style="left:13px;top:1px;width:56px;padding-left:8px"><svg class=g><use href=#g8bb0 /></svg><svg class=g><use href=#g5f55 /></svg><svg class=g><use href=#g7f16 /></svg><svg class=g><use href=#g53f7 /></svg></div>
<div class="hc" style="left:69px;top:1px;width:34px;text-align:center"><svg class=g><use href=#g7ea7 /></svg><svg class=g><use href=#g522b /></svg></div>
<div class="hc" style="left:103px;top:1px;width:56px;text-align:center"><svg class=g><use href=#g7cfb /></svg><svg class=g><use href=#g7edf /></svg><svg class=g><use href=#g7c7b /></svg><svg class=g><use href=#g578b /></svg></div>
<div class="hc" style="left:159px;top:1px;width:122px;text-align:center"><svg class=g><use href=#g4e8b /></svg><svg class=g><use href=#g4ef6 /></svg><svg class=g><use href=#g65f6 /></svg><svg class=g><use href=#g95f4 /></svg></div>
<div class="hc" style="left:281px;top:1px;width:121px;text-align:center"><svg class=g><use href=#g5904 /></svg><svg class=g><use href=#g7406 /></svg><svg class=g><use href=#g72b6 /></svg><svg class=g><use href=#g6001 /></svg></div>
<div class="hc" style="left:402px;top:1px;width:56px;text-align:center"><svg class=g><use href=#g7f16 /></svg><svg class=g><use href=#g53f7 /></svg></div>
<div class="hc" style="left:458px;top:1px;width:121px;text-align:center"><svg class=g><use href=#g540d /></svg><svg class=g><use href=#g79f0 /></svg></div>
<div class="hc" style="left:579px;top:1px;width:81px;text-align:center"><svg class=g><use href=#g7535 /></svg><svg class=g><use href=#g8bdd /></svg></div>
<div class="hc" style="left:660px;top:1px;width:121px;text-align:center"><svg class=g><use href=#g4f4d /></svg><svg class=g><use href=#g7f6e /></svg></div>
<div class="hc" style="left:781px;top:1px;width:56px;text-align:center"><svg class=g><use href=#g7f16 /></svg><svg class=g><use href=#g53f7 /></svg>2</div>
<div class="hc" style="left:837px;top:1px;width:121px;text-align:center"><svg class=g><use href=#g540d /></svg><svg class=g><use href=#g79f0 /></svg>2</div>
<div class="hc" style="left:958px;top:1px;width:81px;text-align:center"><svg class=g><use href=#g7535 /></svg><svg class=g><use href=#g8bdd /></svg>2</div>
<div class="hc" style="left:1039px;top:1px;width:121px;text-align:center"><svg class=g><use href=#g4f4d /></svg><svg class=g><use href=#g7f6e /></svg>2</div>
<div class="hc" style="left:1160px;top:1px;width:56px;text-align:center"><svg class=g><use href=#g4e8b /></svg><svg class=g><use href=#g4ef6 /></svg><svg class=g><use href=#g7c7b /></svg><svg class=g><use href=#g578b /></svg></div>
<div class="hc" style="left:1216px;top:1px;width:120px;text-align:center"><svg class=g><use href=#g4e8b /></svg><svg class=g><use href=#g4ef6 /></svg><svg class=g><use href=#g63cf /></svg><svg class=g><use href=#g8ff0 /></svg></div>
<div class="ab" style="left:14px;top:3px;width:13px;height:12px;background:#c8dcd8"></div>
<svg class="ab" style="left:15px;top:7px" width="11" height="7"><path d="M0 0 H11 L5.5 6.5 Z" fill="#000"/></svg>
<div class="ind" style="left:1px;top:18px;width:12px;height:17px"></div>
<svg class="ab" style="left:5px;top:21px" width="7" height="11"><path d="M0.5 0.5 L6.5 5.5 L0.5 10.5 Z" fill="#000"/></svg>
<div class="c" style="left:13px;top:18px;width:56px;background:#008080;color:#fff;text-align:right;padding-right:4px;font-size:11px">16</div>
<div class="c" style="left:69px;top:18px;width:34px;background:#008080;color:#fff;text-align:center;font-size:11px">6</div>
<div class="c" style="left:103px;top:18px;width:56px;background:#008080;color:#fff;padding-left:3px"><svg class=g><use href=#g5916 /></svg><svg class=g><use href=#g90e8 /></svg><svg class=g><use href=#g4e8b /></svg><svg class=g><use href=#g4ef6 /></svg></div>
<div class="c" style="left:159px;top:18px;width:122px;background:#008080;color:#fff;padding-left:2px"><span class="mono">2012-03-13 10:38:04</span></div>
<div class="c" style="left:281px;top:18px;width:121px;background:#008080;color:#fff;padding-left:2px"></div>
<div class="c" style="left:402px;top:18px;width:56px;background:#008080;color:#fff;padding-left:2px"></div>
<div class="c" style="left:458px;top:18px;width:121px;background:#008080;color:#fff;padding-left:2px;font-size:11px">000111</div>
<div class="c" style="left:579px;top:18px;width:81px;background:#008080;color:#fff;padding-left:2px"></div>
<div class="c" style="left:660px;top:18px;width:121px;background:#008080;color:#fff;padding-left:2px"></div>
<div class="c" style="left:781px;top:18px;width:56px;background:#008080;color:#fff;padding-left:2px"></div>
<div class="c" style="left:837px;top:18px;width:121px;background:#008080;color:#fff;padding-left:2px"><span class="mono">API DLL</span></div>
<div class="c" style="left:958px;top:18px;width:81px;background:#008080;color:#fff;padding-left:2px"></div>
<div class="c" style="left:1039px;top:18px;width:121px;background:#008080;color:#fff;padding-left:2px"></div>
<div class="c" style="left:1160px;top:18px;width:56px;background:#008080;color:#fff;padding-left:2px"><svg class=g><use href=#g5916 /></svg><svg class=g><use href=#g90e8 /></svg><svg class=g><use href=#g4e8b /></svg><svg class=g><use href=#g4ef6 /></svg></div>
<div class="c" style="left:1216px;top:18px;width:120px;background:#008080;color:#fff;padding-left:2px;font-size:11px">0001</div>
<div class="ind" style="left:1px;top:35px;width:12px;height:17px"></div>
<div class="c" style="left:13px;top:35px;width:56px;background:#ffffff;color:#000;text-align:right;padding-right:4px;font-size:11px">15</div>
<div class="c" style="left:69px;top:35px;width:34px;background:#ffffff;color:#000;text-align:center;font-size:11px">6</div>
<div class="c" style="left:103px;top:35px;width:56px;background:#ffffff;color:#000;padding-left:3px"><svg class=g><use href=#g89c6 /></svg><svg class=g><use href=#g9891 /></svg><svg class=g><use href=#g7cfb /></svg><svg class=g><use href=#g7edf /></svg></div>
<div class="c" style="left:159px;top:35px;width:122px;background:#ffffff;color:#000;padding-left:2px"><span class="mono">2012-03-06 17:26:34</span></div>
<div class="c" style="left:281px;top:35px;width:121px;background:#ffffff;color:#000;padding-left:2px"></div>
<div class="c" style="left:402px;top:35px;width:56px;background:#ffffff;color:#000;padding-left:2px"></div>
<div class="c" style="left:458px;top:35px;width:121px;background:#ffffff;color:#000;padding-left:2px"><span class="mono">VS Camera</span></div>
<div class="c" style="left:579px;top:35px;width:81px;background:#ffffff;color:#000;padding-left:2px"></div>
<div class="c" style="left:660px;top:35px;width:121px;background:#ffffff;color:#000;padding-left:2px"></div>
<div class="c" style="left:781px;top:35px;width:56px;background:#ffffff;color:#000;padding-left:2px"></div>
<div class="c" style="left:837px;top:35px;width:121px;background:#ffffff;color:#000;padding-left:2px"></div>
<div class="c" style="left:958px;top:35px;width:81px;background:#ffffff;color:#000;padding-left:2px"></div>
<div class="c" style="left:1039px;top:35px;width:121px;background:#ffffff;color:#000;padding-left:2px"></div>
<div class="c" style="left:1160px;top:35px;width:56px;background:#ffffff;color:#000;padding-left:2px"><svg class=g><use href=#g89c6 /></svg><svg class=g><use href=#g9891 /></svg><svg class=g><use href=#g4e8b /></svg><svg class=g><use href=#g4ef6 /></svg></div>
<div class="c" style="left:1216px;top:35px;width:120px;background:#ffffff;color:#000;padding-left:2px;font-size:11px">12</div>
<div class="ind" style="left:1px;top:52px;width:12px;height:17px"></div>
<div class="c" style="left:13px;top:52px;width:56px;background:#ffffff;color:#000;text-align:right;padding-right:4px;font-size:11px">3</div>
<div class="c" style="left:69px;top:52px;width:34px;background:#ffffff;color:#000;text-align:center;font-size:11px">6</div>
<div class="c" style="left:103px;top:52px;width:56px;background:#ffffff;color:#000;padding-left:3px"><svg class=g><use href=#g62a5 /></svg><svg class=g><use href=#g8b66 /></svg><svg class=g><use href=#g7cfb /></svg><svg class=g><use href=#g7edf /></svg></div>
<div class="c" style="left:159px;top:52px;width:122px;background:#ffffff;color:#000;padding-left:2px"><span class="mono">2012-02-22 11:26:02</span></div>
<div class="c" style="left:281px;top:52px;width:121px;background:#ffffff;color:#000;padding-left:2px"></div>
<div class="c" style="left:402px;top:52px;width:56px;background:#ffffff;color:#000;padding-left:2px;font-size:11px">00000002</div>
<div class="c" style="left:458px;top:52px;width:121px;background:#ffffff;color:#000;padding-left:2px"><svg class=g><use href=#g6d4b /></svg><svg class=g><use href=#g8bd5 /></svg><svg class=g><use href=#g7528 /></svg><svg class=g><use href=#g6237 /></svg></div>
<div class="c" style="left:579px;top:52px;width:81px;background:#ffffff;color:#000;padding-left:2px"><svg class=g><use href=#g8054 /></svg><svg class=g><use href=#g7cfb /></svg><svg class=g><use href=#g7535 /></svg><svg class=g><use href=#g8bdd /></svg></div>
<div class="c" style="left:660px;top:52px;width:121px;background:#ffffff;color:#000;padding-left:2px"><svg class=g><use href=#g7528 /></svg><svg class=g><use href=#g6237 /></svg><svg class=g><use href=#g4f4d /></svg><svg class=g><use href=#g7f6e /></svg></div>
<div class="c" style="left:781px;top:52px;width:56px;background:#ffffff;color:#000;padding-left:2px;font-size:11px">0008</div>
<div class="c" style="left:837px;top:52px;width:121px;background:#ffffff;color:#000;padding-left:2px"></div>
<div class="c" style="left:958px;top:52px;width:81px;background:#ffffff;color:#000;padding-left:2px"></div>
<div class="c" style="left:1039px;top:52px;width:121px;background:#ffffff;color:#000;padding-left:2px"></div>
<div class="c" style="left:1160px;top:52px;width:56px;background:#ffffff;color:#000;padding-left:2px"><svg class=g><use href=#g4e8b /></svg><svg class=g><use href=#g4ef6 /></svg></div>
<div class="c" style="left:1216px;top:52px;width:120px;background:#ffffff;color:#000;padding-left:2px"><svg class=g><use href=#g56de /></svg><svg class=g><use href=#g8def /></svg><svg class=g><use href=#g6545 /></svg><svg class=g><use href=#g969c /></svg></div>
<div class="ind" style="left:1px;top:69px;width:12px;height:17px"></div>
<div class="c" style="left:13px;top:69px;width:56px;background:#ff0000;color:#fff;text-align:right;padding-right:4px;font-size:11px">2</div>
<div class="c" style="left:69px;top:69px;width:34px;background:#ff0000;color:#fff;text-align:center;font-size:11px">2</div>
<div class="c" style="left:103px;top:69px;width:56px;background:#ff0000;color:#fff;padding-left:3px"><svg class=g><use href=#g62a5 /></svg><svg class=g><use href=#g8b66 /></svg><svg class=g><use href=#g7cfb /></svg><svg class=g><use href=#g7edf /></svg></div>
<div class="c" style="left:159px;top:69px;width:122px;background:#ff0000;color:#fff;padding-left:2px"><span class="mono">2012-02-22 11:26:02</span></div>
<div class="c" style="left:281px;top:69px;width:121px;background:#ff0000;color:#fff;padding-left:2px"></div>
<div class="c" style="left:402px;top:69px;width:56px;background:#ff0000;color:#fff;padding-left:2px;font-size:11px">00000002</div>
<div class="c" style="left:458px;top:69px;width:121px;background:#ff0000;color:#fff;padding-left:2px"><svg class=g><use href=#g6d4b /></svg><svg class=g><use href=#g8bd5 /></svg><svg class=g><use href=#g7528 /></svg><svg class=g><use href=#g6237 /></svg></div>
<div class="c" style="left:579px;top:69px;width:81px;background:#ff0000;color:#fff;padding-left:2px"><svg class=g><use href=#g8054 /></svg><svg class=g><use href=#g7cfb /></svg><svg class=g><use href=#g7535 /></svg><svg class=g><use href=#g8bdd /></svg></div>
<div class="c" style="left:660px;top:69px;width:121px;background:#ff0000;color:#fff;padding-left:2px"><svg class=g><use href=#g7528 /></svg><svg class=g><use href=#g6237 /></svg><svg class=g><use href=#g4f4d /></svg><svg class=g><use href=#g7f6e /></svg></div>
<div class="c" style="left:781px;top:69px;width:56px;background:#ff0000;color:#fff;padding-left:2px;font-size:11px">0007</div>
<div class="c" style="left:837px;top:69px;width:121px;background:#ff0000;color:#fff;padding-left:2px"></div>
<div class="c" style="left:958px;top:69px;width:81px;background:#ff0000;color:#fff;padding-left:2px"></div>
<div class="c" style="left:1039px;top:69px;width:121px;background:#ff0000;color:#fff;padding-left:2px"></div>
<div class="c" style="left:1160px;top:69px;width:56px;background:#ff0000;color:#fff;padding-left:2px"><svg class=g><use href=#g62a5 /></svg><svg class=g><use href=#g8b66 /></svg></div>
<div class="c" style="left:1216px;top:69px;width:120px;background:#ff0000;color:#fff;padding-left:2px"><svg class=g><use href=#g62a5 /></svg><svg class=g><use href=#g8b66 /></svg></div>
<div class="ind" style="left:1px;top:86px;width:12px;height:17px"></div>
<div class="c" style="left:13px;top:86px;width:56px;background:#ff0000;color:#fff;text-align:right;padding-right:4px;font-size:11px">1</div>
<div class="c" style="left:69px;top:86px;width:34px;background:#ff0000;color:#fff;text-align:center;font-size:11px">2</div>
<div class="c" style="left:103px;top:86px;width:56px;background:#ff0000;color:#fff;padding-left:3px"><svg class=g><use href=#g62a5 /></svg><svg class=g><use href=#g8b66 /></svg><svg class=g><use href=#g7cfb /></svg><svg class=g><use href=#g7edf /></svg></div>
<div class="c" style="left:159px;top:86px;width:122px;background:#ff0000;color:#fff;padding-left:2px"><span class="mono">2011-11-22 18:00:27</span></div>
<div class="c" style="left:281px;top:86px;width:121px;background:#ff0000;color:#fff;padding-left:2px"></div>
<div class="c" style="left:402px;top:86px;width:56px;background:#ff0000;color:#fff;padding-left:2px;font-size:11px">00000003</div>
<div class="c" style="left:458px;top:86px;width:121px;background:#ff0000;color:#fff;padding-left:2px"><svg class=g><use href=#g6d4b /></svg><svg class=g><use href=#g8bd5 /></svg><svg class=g><use href=#g7528 /></svg><svg class=g><use href=#g6237 /></svg></div>
<div class="c" style="left:579px;top:86px;width:81px;background:#ff0000;color:#fff;padding-left:2px"><svg class=g><use href=#g8054 /></svg><svg class=g><use href=#g7cfb /></svg><svg class=g><use href=#g7535 /></svg><svg class=g><use href=#g8bdd /></svg></div>
<div class="c" style="left:660px;top:86px;width:121px;background:#ff0000;color:#fff;padding-left:2px"><svg class=g><use href=#g7528 /></svg><svg class=g><use href=#g6237 /></svg><svg class=g><use href=#g4f4d /></svg><svg class=g><use href=#g7f6e /></svg></div>
<div class="c" style="left:781px;top:86px;width:56px;background:#ff0000;color:#fff;padding-left:2px;font-size:11px">0001</div>
<div class="c" style="left:837px;top:86px;width:121px;background:#ff0000;color:#fff;padding-left:2px;font-size:11px">12</div>
<div class="c" style="left:958px;top:86px;width:81px;background:#ff0000;color:#fff;padding-left:2px"></div>
<div class="c" style="left:1039px;top:86px;width:121px;background:#ff0000;color:#fff;padding-left:2px"><svg class=g><use href=#g9632 /></svg><svg class=g><use href=#g533a /></svg><svg class=g><use href=#g4f4d /></svg><svg class=g><use href=#g7f6e /></svg></div>
<div class="c" style="left:1160px;top:86px;width:56px;background:#ff0000;color:#fff;padding-left:2px"><svg class=g><use href=#g62a5 /></svg><svg class=g><use href=#g8b66 /></svg></div>
<div class="c" style="left:1216px;top:86px;width:120px;background:#ff0000;color:#fff;padding-left:2px"><svg class=g><use href=#g62a5 /></svg><svg class=g><use href=#g8b66 /></svg></div>
<div class="ab" style="left:1254px;top:1px;width:17px;height:102px;background:linear-gradient(90deg,#b0cccc,#e4eeee 65%,#fafcfc)"></div>
<svg class="ab" style="left:1254px;top:1px" width="17" height="17"><path d="M0.5,2 Q0.5,0.5 2,0.5 H15 Q16.5,0.5 16.5,2 V16.5 Q8.5,8 0.5,16.5 Z" fill="url(#gbtn)" stroke="#b4c4c4" stroke-width="1"/><path d="M5,8.5 L8.5,4.5 L12,8.5 L8.5,7 Z" fill="#4a8c8c"/></svg>
<svg class="ab" style="left:1254px;top:86px" width="17" height="17"><path d="M0.5,0.5 Q8.5,9 16.5,0.5 V15 Q16.5,16.5 15,16.5 H2 Q0.5,16.5 0.5,15 Z" fill="url(#gbtn)" stroke="#b4c4c4" stroke-width="1"/><path d="M5,9 L8.5,13 L12,9 L8.5,10.5 Z" fill="#4a8c8c"/></svg>
<svg class="ab" style="left:1254px;top:18px" width="17" height="38"><rect x="0.5" y="0.5" width="16" height="37" rx="8" ry="8" fill="url(#gthv)" stroke="url(#gstv)" stroke-width="1"/></svg>
<div class="ab" style="left:1259px;top:33px;width:7px;height:8px;background:repeating-linear-gradient(#e8ffff 0 1px,transparent 1px 2px)"></div>
<div class="ab" style="left:1px;top:103px;width:1253px;height:17px;background:linear-gradient(#b4cece,#e4eeee 65%,#fafcfc)"></div>
<div class="ab" style="left:1254px;top:103px;width:18px;height:18px;background:#c8dcd8"></div>
<svg class="ab" style="left:1px;top:103px" width="17" height="17"><path d="M2,0.5 H16.5 Q8,8.5 16.5,16.5 H2 Q0.5,16.5 0.5,15 V2 Q0.5,0.5 2,0.5 Z" fill="url(#gbtnh)" stroke="#b4c4c4" stroke-width="1"/><path d="M8.5,5 L4.5,8.5 L8.5,12 L7,8.5 Z" fill="#4a8c8c"/></svg>
<svg class="ab" style="left:18px;top:103px" width="17" height="17"><circle cx="8.5" cy="8.5" r="8" fill="url(#gthh)" stroke="#2e6c70" stroke-width="1"/><path d="M5.5 5 V11 M7.5 5 V11 M9.5 5 V11 M11.5 5 V11" stroke="#f0ffff" stroke-width="1"/></svg>
<svg class="ab" style="left:1237px;top:103px" width="17" height="17"><path d="M0.5,0.5 H15 Q16.5,0.5 16.5,2 V15 Q16.5,16.5 15,16.5 H0.5 Q9,8.5 0.5,0.5 Z" fill="url(#gbtnh)" stroke="#b4c4c4" stroke-width="1"/><path d="M8.5,5 L12.5,8.5 L8.5,12 L10,8.5 Z" fill="#4a8c8c"/></svg>
</div>
<div class="ab" style="left:0;top:716px;width:1277px;height:20px;background:#c8dcd8"></div>
<div class="ab" style="left:1px;top:716px;width:2px;height:19px;background:#a09480"></div>
<div class="ab mono" style="left:22px;top:718px;line-height:16px;color:#102848">2015-04-27 15:40:53</div>
<div class="ab mono" style="left:193px;top:718px;line-height:16px;color:#102848">System Admin</div>
<div class="ab " style="left:517px;top:718px;line-height:16px;color:#102848">1/32</div>
<div class="ab" style="left:334px;top:718px;line-height:16px;color:#102848"><svg class=g><use href=#g672a /></svg><svg class=g><use href=#g5904 /></svg><svg class=g><use href=#g7406 /></svg><svg class=g><use href=#g4e8b /></svg><svg class=g><use href=#g4ef6 /></svg><svg class=g><use href=#g6570 /></svg><span style="margin-left:1px">:</span><span style="margin-left:8px">5</span></div>
<div class="ab" style="left:153px;top:721px;width:2px;height:9px;background:repeating-linear-gradient(#e8f0f0 0 1px,#a8b8b8 1px 2px)"></div>
<div class="ab" style="left:303px;top:721px;width:2px;height:9px;background:repeating-linear-gradient(#e8f0f0 0 1px,#a8b8b8 1px 2px)"></div>
<div class="ab" style="left:453px;top:721px;width:2px;height:9px;background:repeating-linear-gradient(#e8f0f0 0 1px,#a8b8b8 1px 2px)"></div>
<div class="ab" style="left:603px;top:721px;width:2px;height:9px;background:repeating-linear-gradient(#e8f0f0 0 1px,#a8b8b8 1px 2px)"></div>
<div class="ab" style="left:1276px;top:721px;width:2px;height:9px;background:repeating-linear-gradient(#e8f0f0 0 1px,#a8b8b8 1px 2px)"></div>
<div class="ab" style="left:0;top:736px;width:1280px;height:2px;background:#fdfdf8"></div>
<div class="ab" style="left:0;top:738px;width:1280px;height:4px;background:linear-gradient(#2454c4 0 1px,#4a8ee6 1px)"></div>
<div class="ab" style="left:0;top:738px;width:93px;height:4px;background:linear-gradient(#2c7c34 0 1px,#70b470 1px)"></div>
<div class="ab" style="left:1059px;top:738px;width:221px;height:4px;background:linear-gradient(#0050c0 0 1px,#18b8f0 1px)"></div>
<div class="ab" style="left:1059px;top:739px;width:1px;height:3px;background:#203040"></div>
<svg width="0" height="0" style="position:absolute;left:0;top:0"><defs><path id="b135b89" d="M5 2h2v1h-2zM1 3h11v1h-11zM1 4h2v1h-2zM10 4h2v1h-2zM1 5h2v1h-2zM4 5h2v1h-2zM10 5h2v1h-2zM4 6h2v1h-2zM0 7h13v1h-13zM3 8h2v1h-2zM8 8h2v1h-2zM3 9h2v1h-2zM8 9h2v1h-2zM3 10h3v1h-3zM7 10h2v1h-2zM5 11h3v1h-3zM4 12h2v1h-2zM7 12h3v1h-3zM1 13h4v1h-4zM9 13h3v1h-3z"/><path id="b139632" d="M0 2h5v1h-5zM7 2h2v1h-2zM0 3h2v1h-2zM3 3h2v1h-2zM8 3h2v1h-2zM0 4h2v1h-2zM3 4h10v1h-10zM0 5h4v1h-4zM6 5h2v1h-2zM0 6h3v1h-3zM6 6h2v1h-2zM0 7h4v1h-4zM6 7h6v1h-6zM0 8h2v1h-2zM3 8h2v1h-2zM6 8h2v1h-2zM10 8h2v1h-2zM0 9h2v1h-2zM3 9h2v1h-2zM6 9h2v1h-2zM10 9h2v1h-2zM0 10h7v1h-7zM10 10h2v1h-2zM0 11h4v1h-4zM5 11h2v1h-2zM10 11h2v1h-2zM0 12h2v1h-2zM4 12h2v1h-2zM8 12h4v1h-4zM0 13h2v1h-2zM3 13h2v1h-2zM9 13h2v1h-2z"/><path id="b13667a" d="M1 2h2v1h-2zM1 3h11v1h-11zM0 4h2v1h-2zM3 4h2v1h-2zM7 4h2v1h-2zM10 4h2v1h-2zM0 5h9v1h-9zM10 5h2v1h-2zM3 6h2v1h-2zM7 6h2v1h-2zM10 6h2v1h-2zM2 7h4v1h-4zM7 7h5v1h-5zM0 8h3v1h-3zM5 8h2v1h-2zM2 9h8v1h-8zM2 10h2v1h-2zM8 10h2v1h-2zM2 11h8v1h-8zM2 12h2v1h-2zM8 12h2v1h-2zM2 13h8v1h-8z"/><path id="b1380fd" d="M2 2h2v1h-2zM7 2h2v1h-2zM2 3h2v1h-2zM7 3h2v1h-2zM10 3h2v1h-2zM1 4h2v1h-2zM5 4h6v1h-6zM0 5h9v1h-9zM11 5h2v1h-2zM7 6h6v1h-6zM1 7h6v1h-6zM1 8h2v1h-2zM5 8h4v1h-4zM1 9h8v1h-8zM10 9h2v1h-2zM1 10h2v1h-2zM5 10h6v1h-6zM1 11h8v1h-8zM11 11h2v1h-2zM1 12h2v1h-2zM5 12h4v1h-4zM11 12h2v1h-2zM1 13h2v1h-2zM4 13h3v1h-3zM8 13h5v1h-5z"/><path id="b135316" d="M3 2h2v1h-2zM6 2h2v1h-2zM3 3h2v1h-2zM6 3h2v1h-2zM2 4h2v1h-2zM6 4h2v1h-2zM10 4h2v1h-2zM2 5h2v1h-2zM6 5h2v1h-2zM9 5h2v1h-2zM1 6h3v1h-3zM6 6h4v1h-4zM0 7h4v1h-4zM6 7h3v1h-3zM2 8h2v1h-2zM6 8h2v1h-2zM2 9h6v1h-6zM2 10h2v1h-2zM6 10h2v1h-2zM2 11h2v1h-2zM6 11h2v1h-2zM11 11h2v1h-2zM2 12h2v1h-2zM6 12h2v1h-2zM11 12h2v1h-2zM2 13h2v1h-2zM7 13h6v1h-6z"/><path id="b1396c6" d="M4 2h4v1h-4zM3 3h2v1h-2zM7 3h2v1h-2zM2 4h10v1h-10zM1 5h4v1h-4zM6 5h2v1h-2zM3 6h9v1h-9zM3 7h2v1h-2zM6 7h2v1h-2zM3 8h9v1h-9zM3 9h2v1h-2zM6 9h2v1h-2zM0 10h13v1h-13zM4 11h6v1h-6zM3 12h2v1h-2zM6 12h2v1h-2zM9 12h2v1h-2zM1 13h3v1h-3zM6 13h2v1h-2zM10 13h3v1h-3z"/><path id="b136210" d="M6 2h2v1h-2zM9 2h2v1h-2zM6 3h2v1h-2zM10 3h2v1h-2zM6 4h2v1h-2zM1 5h12v1h-12zM1 6h2v1h-2zM6 6h2v1h-2zM1 7h2v1h-2zM6 7h2v1h-2zM10 7h2v1h-2zM1 8h8v1h-8zM10 8h2v1h-2zM1 9h2v1h-2zM5 9h6v1h-6zM1 10h2v1h-2zM5 10h2v1h-2zM8 10h2v1h-2zM1 11h6v1h-6zM8 11h2v1h-2zM11 11h2v1h-2zM0 12h2v1h-2zM4 12h2v1h-2zM7 12h6v1h-6zM0 13h2v1h-2zM6 13h2v1h-2zM10 13h3v1h-3z"/><path id="b135e73" d="M1 3h11v1h-11zM5 4h2v1h-2zM2 5h2v1h-2zM5 5h2v1h-2zM9 5h2v1h-2zM3 6h4v1h-4zM8 6h2v1h-2zM5 7h2v1h-2zM0 8h13v1h-13zM5 9h2v1h-2zM5 10h2v1h-2zM5 11h2v1h-2zM5 12h2v1h-2zM5 13h2v1h-2z"/><path id="b1353f0" d="M5 2h2v1h-2zM4 3h2v1h-2zM3 4h2v1h-2zM8 4h2v1h-2zM2 5h2v1h-2zM9 5h2v1h-2zM1 6h11v1h-11zM10 7h2v1h-2zM2 9h9v1h-9zM2 10h2v1h-2zM9 10h2v1h-2zM2 11h2v1h-2zM9 11h2v1h-2zM2 12h9v1h-9zM2 13h2v1h-2zM9 13h2v1h-2z"/><path id="g7cfb" d="M7 2h3v1h-3zM1 3h6v1h-6zM4 4h1v1h-1zM8 4h1v1h-1zM2 5h6v1h-6zM5 6h1v1h-1zM4 7h1v1h-1zM8 7h1v1h-1zM1 8h9v1h-9zM5 9h1v1h-1zM9 9h1v1h-1zM3 10h1v1h-1zM5 10h1v1h-1zM7 10h1v1h-1zM2 11h1v1h-1zM5 11h1v1h-1zM8 11h1v1h-1zM1 12h1v1h-1zM4 12h2v1h-2zM9 12h1v1h-1z"/><path id="g7edf" d="M2 2h1v1h-1zM7 2h1v1h-1zM2 3h1v1h-1zM4 3h7v1h-7zM1 4h1v1h-1zM6 4h1v1h-1zM1 5h1v1h-1zM3 5h1v1h-1zM5 5h1v1h-1zM9 5h1v1h-1zM0 6h3v1h-3zM4 6h7v1h-7zM2 7h1v1h-1zM6 7h1v1h-1zM8 7h1v1h-1zM10 7h1v1h-1zM1 8h1v1h-1zM6 8h1v1h-1zM8 8h1v1h-1zM0 9h4v1h-4zM6 9h1v1h-1zM8 9h1v1h-1zM6 10h1v1h-1zM8 10h1v1h-1zM10 10h1v1h-1zM2 11h2v1h-2zM5 11h1v1h-1zM8 11h1v1h-1zM10 11h1v1h-1zM0 12h2v1h-2zM4 12h1v1h-1zM8 12h3v1h-3z"/><path id="g7ba1" d="M2 2h1v1h-1zM7 2h1v1h-1zM2 3h4v1h-4zM7 3h4v1h-4zM1 4h1v1h-1zM3 4h1v1h-1zM6 4h1v1h-1zM8 4h1v1h-1zM0 5h11v1h-11zM0 6h1v1h-1zM10 6h1v1h-1zM2 7h7v1h-7zM2 8h1v1h-1zM8 8h1v1h-1zM2 9h8v1h-8zM2 10h1v1h-1zM9 10h1v1h-1zM2 11h1v1h-1zM9 11h1v1h-1zM2 12h8v1h-8z"/><path id="g7406" d="M4 2h7v1h-7zM0 3h5v1h-5zM7 3h1v1h-1zM10 3h1v1h-1zM2 4h1v1h-1zM4 4h7v1h-7zM2 5h1v1h-1zM4 5h1v1h-1zM7 5h1v1h-1zM10 5h1v1h-1zM2 6h1v1h-1zM4 6h1v1h-1zM7 6h1v1h-1zM10 6h1v1h-1zM0 7h11v1h-11zM2 8h1v1h-1zM7 8h1v1h-1zM2 9h1v1h-1zM5 9h5v1h-5zM2 10h2v1h-2zM7 10h1v1h-1zM0 11h2v1h-2zM7 11h1v1h-1zM4 12h7v1h-7z"/><path id="g5386" d="M2 2h9v1h-9zM2 3h1v1h-1zM2 4h1v1h-1zM6 4h1v1h-1zM2 5h1v1h-1zM6 5h1v1h-1zM2 6h1v1h-1zM4 6h7v1h-7zM2 7h1v1h-1zM6 7h1v1h-1zM10 7h1v1h-1zM2 8h1v1h-1zM6 8h1v1h-1zM10 8h1v1h-1zM2 9h1v1h-1zM5 9h1v1h-1zM10 9h1v1h-1zM1 10h1v1h-1zM5 10h1v1h-1zM10 10h1v1h-1zM1 11h1v1h-1zM4 11h1v1h-1zM10 11h1v1h-1zM0 12h1v1h-1zM3 12h1v1h-1zM8 12h2v1h-2z"/><path id="g53f2" d="M5 2h1v1h-1zM5 3h1v1h-1zM1 4h9v1h-9zM1 5h1v1h-1zM5 5h1v1h-1zM9 5h1v1h-1zM1 6h1v1h-1zM5 6h1v1h-1zM9 6h1v1h-1zM1 7h9v1h-9zM2 8h1v1h-1zM5 8h1v1h-1zM3 9h1v1h-1zM5 9h1v1h-1zM4 10h1v1h-1zM3 11h1v1h-1zM5 11h2v1h-2zM0 12h3v1h-3zM7 12h4v1h-4z"/><path id="g7a97" d="M6 2h1v1h-1zM1 3h10v1h-10zM1 4h1v1h-1zM3 4h1v1h-1zM8 4h1v1h-1zM10 4h1v1h-1zM2 5h1v1h-1zM5 5h1v1h-1zM9 5h1v1h-1zM1 6h10v1h-10zM2 7h1v1h-1zM5 7h1v1h-1zM9 7h1v1h-1zM2 8h1v1h-1zM4 8h6v1h-6zM2 9h3v1h-3zM7 9h1v1h-1zM9 9h1v1h-1zM2 10h1v1h-1zM5 10h2v1h-2zM9 10h1v1h-1zM2 11h1v1h-1zM4 11h1v1h-1zM7 11h1v1h-1zM9 11h1v1h-1zM2 12h8v1h-8z"/><path id="g53e3" d="M1 3h9v1h-9zM1 4h1v1h-1zM9 4h1v1h-1zM1 5h1v1h-1zM9 5h1v1h-1zM1 6h1v1h-1zM9 6h1v1h-1zM1 7h1v1h-1zM9 7h1v1h-1zM1 8h1v1h-1zM9 8h1v1h-1zM1 9h1v1h-1zM9 9h1v1h-1zM1 10h9v1h-9zM1 11h1v1h-1zM9 11h1v1h-1z"/><path id="g5e2e" d="M3 2h1v1h-1zM1 3h5v1h-5zM7 3h4v1h-4zM3 4h1v1h-1zM7 4h1v1h-1zM10 4h1v1h-1zM1 5h5v1h-5zM7 5h1v1h-1zM9 5h1v1h-1zM3 6h1v1h-1zM7 6h1v1h-1zM10 6h1v1h-1zM0 7h6v1h-6zM7 7h4v1h-4zM2 8h1v1h-1zM5 8h1v1h-1zM7 8h1v1h-1zM1 9h9v1h-9zM2 10h1v1h-1zM5 10h1v1h-1zM9 10h1v1h-1zM2 11h1v1h-1zM5 11h1v1h-1zM8 11h2v1h-2zM5 12h1v1h-1z"/><path id="g52a9" d="M7 2h1v1h-1zM1 3h4v1h-4zM7 3h1v1h-1zM1 4h1v1h-1zM4 4h1v1h-1zM7 4h1v1h-1zM1 5h1v1h-1zM4 5h1v1h-1zM6 5h5v1h-5zM1 6h4v1h-4zM7 6h1v1h-1zM10 6h1v1h-1zM1 7h1v1h-1zM4 7h1v1h-1zM7 7h1v1h-1zM10 7h1v1h-1zM1 8h4v1h-4zM7 8h1v1h-1zM10 8h1v1h-1zM1 9h1v1h-1zM4 9h1v1h-1zM7 9h1v1h-1zM10 9h1v1h-1zM1 10h1v1h-1zM3 10h4v1h-4zM10 10h1v1h-1zM0 11h3v1h-3zM6 11h1v1h-1zM8 11h1v1h-1zM10 11h1v1h-1zM5 12h1v1h-1zM9 12h1v1h-1z"/><path id="b77e9" d="M1 2h2v1h-2zM1 3h2v1h-2zM6 3h6v1h-6zM1 4h7v1h-7zM0 5h2v1h-2zM3 5h2v1h-2zM6 5h2v1h-2zM3 6h2v1h-2zM6 6h6v1h-6zM0 7h8v1h-8zM10 7h2v1h-2zM3 8h2v1h-2zM6 8h2v1h-2zM10 8h2v1h-2zM2 9h10v1h-10zM2 10h6v1h-6zM1 11h2v1h-2zM4 11h4v1h-4zM0 12h2v1h-2zM6 12h6v1h-6z"/><path id="b9635" d="M0 2h5v1h-5zM6 2h2v1h-2zM0 3h2v1h-2zM3 3h9v1h-9zM0 4h4v1h-4zM5 4h2v1h-2zM0 5h3v1h-3zM5 5h4v1h-4zM0 6h11v1h-11zM0 7h2v1h-2zM3 7h2v1h-2zM7 7h2v1h-2zM0 8h2v1h-2zM3 8h2v1h-2zM7 8h2v1h-2zM0 9h12v1h-12zM0 10h4v1h-4zM7 10h2v1h-2zM0 11h2v1h-2zM7 11h2v1h-2zM0 12h2v1h-2zM7 12h2v1h-2z"/><path id="b7cfb" d="M7 2h4v1h-4zM1 3h7v1h-7zM4 4h2v1h-2zM8 4h2v1h-2zM2 5h7v1h-7zM5 6h2v1h-2zM4 7h2v1h-2zM8 7h2v1h-2zM1 8h10v1h-10zM5 9h2v1h-2zM9 9h2v1h-2zM3 10h6v1h-6zM2 11h2v1h-2zM5 11h2v1h-2zM8 11h2v1h-2zM1 12h2v1h-2zM4 12h3v1h-3zM9 12h2v1h-2z"/><path id="b7edf" d="M2 2h2v1h-2zM7 2h2v1h-2zM2 3h10v1h-10zM1 4h2v1h-2zM6 4h2v1h-2zM1 5h6v1h-6zM9 5h2v1h-2zM0 6h12v1h-12zM2 7h2v1h-2zM6 7h6v1h-6zM1 8h2v1h-2zM6 8h4v1h-4zM0 9h5v1h-5zM6 9h4v1h-4zM6 10h6v1h-6zM2 11h5v1h-5zM8 11h4v1h-4zM0 12h3v1h-3zM4 12h2v1h-2zM8 12h4v1h-4z"/><path id="g6444" d="M2 2h1v1h-1zM4 2h7v1h-7zM2 3h1v1h-1zM6 3h1v1h-1zM9 3h1v1h-1zM0 4h5v1h-5zM6 4h4v1h-4zM2 5h1v1h-1zM6 5h1v1h-1zM9 5h1v1h-1zM2 6h1v1h-1zM4 6h1v1h-1zM6 6h4v1h-4zM2 7h2v1h-2zM6 7h1v1h-1zM9 7h1v1h-1zM1 8h2v1h-2zM4 8h7v1h-7zM0 9h1v1h-1zM2 9h1v1h-1zM4 9h1v1h-1zM6 9h1v1h-1zM8 9h1v1h-1zM10 9h1v1h-1zM2 10h1v1h-1zM5 10h1v1h-1zM9 10h1v1h-1zM2 11h1v1h-1zM4 11h1v1h-1zM6 11h1v1h-1zM8 11h1v1h-1zM10 11h1v1h-1zM0 12h4v1h-4zM7 12h1v1h-1zM10 12h1v1h-1z"/><path id="g50cf" d="M3 2h1v1h-1zM6 2h4v1h-4zM3 3h1v1h-1zM5 3h1v1h-1zM8 3h1v1h-1zM2 4h1v1h-1zM4 4h7v1h-7zM2 5h2v1h-2zM5 5h1v1h-1zM7 5h1v1h-1zM10 5h1v1h-1zM1 6h2v1h-2zM5 6h6v1h-6zM0 7h1v1h-1zM2 7h1v1h-1zM6 7h1v1h-1zM10 7h1v1h-1zM2 8h1v1h-1zM4 8h2v1h-2zM7 8h1v1h-1zM9 8h1v1h-1zM2 9h1v1h-1zM6 9h1v1h-1zM8 9h1v1h-1zM2 10h1v1h-1zM4 10h2v1h-2zM7 10h3v1h-3zM2 11h1v1h-1zM6 11h1v1h-1zM8 11h1v1h-1zM10 11h1v1h-1zM2 12h1v1h-1zM4 12h2v1h-2zM7 12h2v1h-2z"/><path id="g673a" d="M2 2h1v1h-1zM2 3h1v1h-1zM5 3h4v1h-4zM2 4h1v1h-1zM5 4h1v1h-1zM8 4h1v1h-1zM0 5h6v1h-6zM8 5h1v1h-1zM2 6h1v1h-1zM5 6h1v1h-1zM8 6h1v1h-1zM1 7h3v1h-3zM5 7h1v1h-1zM8 7h1v1h-1zM1 8h2v1h-2zM4 8h2v1h-2zM8 8h1v1h-1zM0 9h1v1h-1zM2 9h1v1h-1zM5 9h1v1h-1zM8 9h1v1h-1zM0 10h1v1h-1zM2 10h1v1h-1zM5 10h1v1h-1zM8 10h1v1h-1zM2 11h1v1h-1zM4 11h1v1h-1zM8 11h1v1h-1zM10 11h1v1h-1zM2 12h2v1h-2zM8 12h3v1h-3z"/><path id="g76d1" d="M4 2h1v1h-1zM6 2h1v1h-1zM1 3h1v1h-1zM4 3h1v1h-1zM6 3h1v1h-1zM1 4h1v1h-1zM4 4h1v1h-1zM6 4h5v1h-5zM1 5h1v1h-1zM4 5h1v1h-1zM6 5h1v1h-1zM1 6h1v1h-1zM4 6h2v1h-2zM8 6h1v1h-1zM1 7h1v1h-1zM4 7h1v1h-1zM9 7h1v1h-1zM4 8h1v1h-1zM1 9h9v1h-9zM1 10h1v1h-1zM4 10h1v1h-1zM6 10h1v1h-1zM9 10h1v1h-1zM1 11h1v1h-1zM4 11h1v1h-1zM6 11h1v1h-1zM9 11h1v1h-1zM0 12h11v1h-11z"/><path id="g89c6" d="M1 2h1v1h-1zM5 2h5v1h-5zM2 3h1v1h-1zM5 3h1v1h-1zM9 3h1v1h-1zM0 4h4v1h-4zM5 4h1v1h-1zM7 4h1v1h-1zM9 4h1v1h-1zM3 5h1v1h-1zM5 5h1v1h-1zM7 5h1v1h-1zM9 5h1v1h-1zM2 6h1v1h-1zM5 6h1v1h-1zM7 6h1v1h-1zM9 6h1v1h-1zM1 7h3v1h-3zM5 7h1v1h-1zM7 7h1v1h-1zM9 7h1v1h-1zM0 8h1v1h-1zM2 8h1v1h-1zM5 8h1v1h-1zM7 8h1v1h-1zM9 8h1v1h-1zM2 9h1v1h-1zM7 9h1v1h-1zM2 10h1v1h-1zM6 10h2v1h-2zM10 10h1v1h-1zM2 11h1v1h-1zM5 11h1v1h-1zM7 11h1v1h-1zM10 11h1v1h-1zM2 12h1v1h-1zM4 12h1v1h-1zM8 12h3v1h-3z"/><path id="g5668" d="M1 2h4v1h-4zM6 2h4v1h-4zM1 3h1v1h-1zM4 3h1v1h-1zM6 3h1v1h-1zM9 3h1v1h-1zM1 4h1v1h-1zM4 4h1v1h-1zM6 4h1v1h-1zM9 4h1v1h-1zM1 5h4v1h-4zM6 5h4v1h-4zM5 6h1v1h-1zM8 6h1v1h-1zM0 7h11v1h-11zM3 8h1v1h-1zM7 8h1v1h-1zM0 9h5v1h-5zM6 9h5v1h-5zM1 10h1v1h-1zM4 10h1v1h-1zM6 10h1v1h-1zM9 10h1v1h-1zM1 11h1v1h-1zM4 11h1v1h-1zM6 11h1v1h-1zM9 11h1v1h-1zM1 12h4v1h-4zM6 12h4v1h-4z"/><path id="g77e9" d="M1 2h1v1h-1zM1 3h1v1h-1zM6 3h5v1h-5zM1 4h6v1h-6zM0 5h1v1h-1zM3 5h1v1h-1zM6 5h1v1h-1zM3 6h1v1h-1zM6 6h5v1h-5zM0 7h7v1h-7zM10 7h1v1h-1zM3 8h1v1h-1zM6 8h1v1h-1zM10 8h1v1h-1zM2 9h1v1h-1zM4 9h1v1h-1zM6 9h5v1h-5zM2 10h1v1h-1zM4 10h1v1h-1zM6 10h1v1h-1zM1 11h1v1h-1zM4 11h1v1h-1zM6 11h1v1h-1zM0 12h1v1h-1zM6 12h5v1h-5z"/><path id="g9635" d="M0 2h4v1h-4zM6 2h1v1h-1zM0 3h1v1h-1zM3 3h8v1h-8zM0 4h1v1h-1zM2 4h1v1h-1zM5 4h1v1h-1zM0 5h2v1h-2zM5 5h1v1h-1zM7 5h1v1h-1zM0 6h1v1h-1zM2 6h1v1h-1zM4 6h6v1h-6zM0 7h1v1h-1zM3 7h1v1h-1zM7 7h1v1h-1zM0 8h1v1h-1zM3 8h1v1h-1zM7 8h1v1h-1zM0 9h2v1h-2zM3 9h8v1h-8zM0 10h1v1h-1zM2 10h1v1h-1zM7 10h1v1h-1zM0 11h1v1h-1zM7 11h1v1h-1zM0 12h1v1h-1zM7 12h1v1h-1z"/><path id="g9884" d="M0 2h5v1h-5zM6 2h5v1h-5zM3 3h1v1h-1zM8 3h1v1h-1zM1 4h2v1h-2zM6 4h5v1h-5zM2 5h1v1h-1zM6 5h1v1h-1zM10 5h1v1h-1zM0 6h5v1h-5zM6 6h1v1h-1zM8 6h1v1h-1zM10 6h1v1h-1zM2 7h1v1h-1zM4 7h1v1h-1zM6 7h1v1h-1zM8 7h1v1h-1zM10 7h1v1h-1zM2 8h1v1h-1zM6 8h1v1h-1zM8 8h1v1h-1zM10 8h1v1h-1zM2 9h1v1h-1zM6 9h1v1h-1zM8 9h1v1h-1zM10 9h1v1h-1zM2 10h1v1h-1zM6 10h1v1h-1zM8 10h1v1h-1zM10 10h1v1h-1zM2 11h1v1h-1zM7 11h1v1h-1zM9 11h1v1h-1zM1 12h2v1h-2zM5 12h2v1h-2zM10 12h1v1h-1z"/><path id="g7f6e" d="M1 2h9v1h-9zM1 3h1v1h-1zM4 3h1v1h-1zM6 3h1v1h-1zM9 3h1v1h-1zM1 4h9v1h-9zM5 5h1v1h-1zM0 6h11v1h-11zM2 7h1v1h-1zM8 7h1v1h-1zM2 8h7v1h-7zM2 9h1v1h-1zM8 9h1v1h-1zM2 10h7v1h-7zM2 11h1v1h-1zM8 11h1v1h-1zM0 12h11v1h-11z"/><path id="g4f4d" d="M3 2h1v1h-1zM6 2h1v1h-1zM3 3h1v1h-1zM7 3h1v1h-1zM2 4h1v1h-1zM2 5h1v1h-1zM4 5h7v1h-7zM1 6h2v1h-2zM0 7h1v1h-1zM2 7h1v1h-1zM5 7h1v1h-1zM9 7h1v1h-1zM2 8h1v1h-1zM6 8h1v1h-1zM9 8h1v1h-1zM2 9h1v1h-1zM6 9h1v1h-1zM8 9h1v1h-1zM2 10h1v1h-1zM8 10h1v1h-1zM2 11h1v1h-1zM7 11h1v1h-1zM2 12h1v1h-1zM4 12h7v1h-7z"/><path id="b8054" d="M0 2h7v1h-7zM9 2h2v1h-2zM1 3h4v1h-4zM6 3h4v1h-4zM1 4h11v1h-11zM1 5h4v1h-4zM7 5h2v1h-2zM1 6h4v1h-4zM7 6h2v1h-2zM1 7h11v1h-11zM1 8h4v1h-4zM7 8h2v1h-2zM1 9h4v1h-4zM7 9h2v1h-2zM0 10h10v1h-10zM3 11h4v1h-4zM9 11h2v1h-2zM3 12h3v1h-3zM10 12h2v1h-2z"/><path id="b52a8" d="M7 2h2v1h-2zM1 3h5v1h-5zM7 3h2v1h-2zM7 4h2v1h-2zM6 5h6v1h-6zM0 6h9v1h-9zM10 6h2v1h-2zM2 7h2v1h-2zM7 7h2v1h-2zM10 7h2v1h-2zM2 8h2v1h-2zM7 8h2v1h-2zM10 8h2v1h-2zM1 9h2v1h-2zM4 9h2v1h-2zM7 9h2v1h-2zM10 9h2v1h-2zM0 10h8v1h-8zM10 10h2v1h-2zM4 11h4v1h-4zM10 11h2v1h-2zM5 12h2v1h-2zM8 12h3v1h-3z"/><path id="b8f93" d="M1 2h2v1h-2zM7 2h2v1h-2zM1 3h2v1h-2zM6 3h4v1h-4zM0 4h7v1h-7zM9 4h2v1h-2zM1 5h2v1h-2zM4 5h8v1h-8zM0 6h4v1h-4zM0 7h8v1h-8zM10 7h2v1h-2zM2 8h10v1h-10zM2 9h10v1h-10zM0 10h12v1h-12zM2 11h10v1h-10zM2 12h6v1h-6zM9 12h3v1h-3z"/><path id="b51fa" d="M5 2h2v1h-2zM1 3h2v1h-2zM5 3h2v1h-2zM9 3h2v1h-2zM1 4h2v1h-2zM5 4h2v1h-2zM9 4h2v1h-2zM1 5h2v1h-2zM5 5h2v1h-2zM9 5h2v1h-2zM1 6h10v1h-10zM5 7h2v1h-2zM0 8h2v1h-2zM5 8h2v1h-2zM10 8h2v1h-2zM0 9h2v1h-2zM5 9h2v1h-2zM10 9h2v1h-2zM0 10h2v1h-2zM5 10h2v1h-2zM10 10h2v1h-2zM0 11h2v1h-2zM5 11h2v1h-2zM10 11h2v1h-2zM0 12h12v1h-12z"/><path id="b70b9" d="M5 2h2v1h-2zM5 3h2v1h-2zM5 4h6v1h-6zM5 5h2v1h-2zM2 6h8v1h-8zM2 7h2v1h-2zM8 7h2v1h-2zM2 8h2v1h-2zM8 8h2v1h-2zM2 9h8v1h-8zM1 11h4v1h-4zM6 11h2v1h-2zM9 11h2v1h-2zM0 12h2v1h-2zM4 12h2v1h-2zM7 12h2v1h-2zM10 12h2v1h-2z"/><path id="g8f93" d="M1 2h1v1h-1zM7 2h1v1h-1zM1 3h1v1h-1zM6 3h1v1h-1zM8 3h1v1h-1zM0 4h4v1h-4zM5 4h1v1h-1zM9 4h1v1h-1zM1 5h1v1h-1zM4 5h1v1h-1zM6 5h3v1h-3zM10 5h1v1h-1zM0 6h1v1h-1zM2 6h1v1h-1zM0 7h7v1h-7zM10 7h1v1h-1zM2 8h1v1h-1zM4 8h1v1h-1zM6 8h1v1h-1zM8 8h1v1h-1zM10 8h1v1h-1zM2 9h5v1h-5zM8 9h1v1h-1zM10 9h1v1h-1zM0 10h3v1h-3zM4 10h1v1h-1zM6 10h1v1h-1zM8 10h1v1h-1zM10 10h1v1h-1zM2 11h1v1h-1zM4 11h3v1h-3zM8 11h1v1h-1zM10 11h1v1h-1zM2 12h1v1h-1zM4 12h1v1h-1zM6 12h1v1h-1zM9 12h2v1h-2z"/><path id="g51fa" d="M5 2h1v1h-1zM1 3h1v1h-1zM5 3h1v1h-1zM9 3h1v1h-1zM1 4h1v1h-1zM5 4h1v1h-1zM9 4h1v1h-1zM1 5h1v1h-1zM5 5h1v1h-1zM9 5h1v1h-1zM1 6h9v1h-9zM5 7h1v1h-1zM0 8h1v1h-1zM5 8h1v1h-1zM10 8h1v1h-1zM0 9h1v1h-1zM5 9h1v1h-1zM10 9h1v1h-1zM0 10h1v1h-1zM5 10h1v1h-1zM10 10h1v1h-1zM0 11h1v1h-1zM5 11h1v1h-1zM10 11h1v1h-1zM0 12h11v1h-11z"/><path id="g70b9" d="M5 2h1v1h-1zM5 3h1v1h-1zM5 4h5v1h-5zM5 5h1v1h-1zM2 6h7v1h-7zM2 7h1v1h-1zM8 7h1v1h-1zM2 8h1v1h-1zM8 8h1v1h-1zM2 9h7v1h-7zM1 11h1v1h-1zM3 11h1v1h-1zM6 11h1v1h-1zM9 11h1v1h-1zM0 12h1v1h-1zM4 12h1v1h-1zM7 12h1v1h-1zM10 12h1v1h-1z"/><path id="b89c6" d="M1 2h2v1h-2zM5 2h6v1h-6zM2 3h2v1h-2zM5 3h2v1h-2zM9 3h2v1h-2zM0 4h11v1h-11zM3 5h8v1h-8zM2 6h2v1h-2zM5 6h6v1h-6zM1 7h10v1h-10zM0 8h4v1h-4zM5 8h6v1h-6zM2 9h2v1h-2zM7 9h2v1h-2zM2 10h2v1h-2zM6 10h3v1h-3zM10 10h2v1h-2zM2 11h2v1h-2zM5 11h4v1h-4zM10 11h2v1h-2zM2 12h4v1h-4zM8 12h4v1h-4z"/><path id="b9891" d="M3 2h2v1h-2zM6 2h6v1h-6zM1 3h4v1h-4zM8 3h2v1h-2zM1 4h11v1h-11zM1 5h4v1h-4zM6 5h2v1h-2zM10 5h2v1h-2zM0 6h12v1h-12zM3 7h2v1h-2zM6 7h6v1h-6zM1 8h11v1h-11zM1 9h11v1h-11zM0 10h2v1h-2zM3 10h2v1h-2zM6 10h6v1h-6zM2 11h2v1h-2zM7 11h4v1h-4zM0 12h3v1h-3zM5 12h3v1h-3zM10 12h2v1h-2z"/><path id="g4e8b" d="M5 2h1v1h-1zM0 3h11v1h-11zM2 4h1v1h-1zM5 4h1v1h-1zM8 4h1v1h-1zM2 5h1v1h-1zM5 5h1v1h-1zM8 5h1v1h-1zM1 6h9v1h-9zM5 7h1v1h-1zM9 7h1v1h-1zM0 8h11v1h-11zM5 9h1v1h-1zM9 9h1v1h-1zM1 10h9v1h-9zM5 11h1v1h-1zM3 12h3v1h-3z"/><path id="g4ef6" d="M3 2h1v1h-1zM7 2h1v1h-1zM3 3h1v1h-1zM5 3h1v1h-1zM7 3h1v1h-1zM2 4h1v1h-1zM5 4h1v1h-1zM7 4h1v1h-1zM2 5h1v1h-1zM4 5h6v1h-6zM1 6h3v1h-3zM7 6h1v1h-1zM0 7h1v1h-1zM2 7h1v1h-1zM7 7h1v1h-1zM2 8h1v1h-1zM4 8h7v1h-7zM2 9h1v1h-1zM7 9h1v1h-1zM2 10h1v1h-1zM7 10h1v1h-1zM2 11h1v1h-1zM7 11h1v1h-1zM2 12h1v1h-1zM7 12h1v1h-1z"/><path id="g8bb0" d="M1 2h1v1h-1zM2 3h1v1h-1zM5 3h5v1h-5zM9 4h1v1h-1zM9 5h1v1h-1zM0 6h3v1h-3zM9 6h1v1h-1zM2 7h1v1h-1zM5 7h5v1h-5zM2 8h1v1h-1zM5 8h1v1h-1zM2 9h1v1h-1zM5 9h1v1h-1zM2 10h1v1h-1zM4 10h2v1h-2zM10 10h1v1h-1zM2 11h2v1h-2zM5 11h1v1h-1zM10 11h1v1h-1zM2 12h1v1h-1zM6 12h5v1h-5z"/><path id="g5f55" d="M2 2h7v1h-7zM8 3h1v1h-1zM2 4h7v1h-7zM8 5h1v1h-1zM0 6h11v1h-11zM2 7h1v1h-1zM5 7h1v1h-1zM9 7h1v1h-1zM3 8h1v1h-1zM5 8h2v1h-2zM8 8h1v1h-1zM4 9h2v1h-2zM7 9h1v1h-1zM2 10h2v1h-2zM5 10h1v1h-1zM8 10h1v1h-1zM0 11h2v1h-2zM5 11h1v1h-1zM9 11h2v1h-2zM4 12h2v1h-2z"/><path id="b7535" d="M5 2h2v1h-2zM5 3h2v1h-2zM1 4h10v1h-10zM1 5h2v1h-2zM5 5h2v1h-2zM9 5h2v1h-2zM1 6h10v1h-10zM1 7h2v1h-2zM5 7h2v1h-2zM9 7h2v1h-2zM1 8h2v1h-2zM5 8h2v1h-2zM9 8h2v1h-2zM1 9h10v1h-10zM5 10h2v1h-2zM10 10h2v1h-2zM5 11h2v1h-2zM10 11h2v1h-2zM6 12h6v1h-6z"/><path id="b5b50" d="M2 2h8v1h-8zM7 3h2v1h-2zM6 4h2v1h-2zM5 5h2v1h-2zM5 6h2v1h-2zM0 7h12v1h-12zM5 8h2v1h-2zM5 9h2v1h-2zM5 10h2v1h-2zM3 11h4v1h-4zM4 12h2v1h-2z"/><path id="b56f4" d="M1 2h11v1h-11zM1 3h2v1h-2zM5 3h2v1h-2zM10 3h2v1h-2zM1 4h11v1h-11zM1 5h2v1h-2zM5 5h2v1h-2zM10 5h2v1h-2zM1 6h8v1h-8zM10 6h2v1h-2zM1 7h2v1h-2zM5 7h2v1h-2zM10 7h2v1h-2zM1 8h11v1h-11zM1 9h2v1h-2zM5 9h2v1h-2zM8 9h4v1h-4zM1 10h2v1h-2zM5 10h4v1h-4zM10 10h2v1h-2zM1 11h11v1h-11zM1 12h2v1h-2zM10 12h2v1h-2z"/><path id="b680f" d="M2 2h2v1h-2zM5 2h2v1h-2zM10 2h2v1h-2zM2 3h2v1h-2zM6 3h2v1h-2zM9 3h2v1h-2zM0 4h5v1h-5zM2 5h10v1h-10zM1 6h3v1h-3zM1 7h4v1h-4zM0 8h4v1h-4zM5 8h6v1h-6zM0 9h4v1h-4zM2 10h2v1h-2zM2 11h2v1h-2zM2 12h10v1h-10z"/><path id="b6d88" d="M1 2h2v1h-2zM4 2h2v1h-2zM7 2h2v1h-2zM10 2h2v1h-2zM2 3h2v1h-2zM5 3h6v1h-6zM0 4h2v1h-2zM7 4h2v1h-2zM1 5h11v1h-11zM3 6h4v1h-4zM10 6h2v1h-2zM2 7h2v1h-2zM5 7h7v1h-7zM2 8h2v1h-2zM5 8h2v1h-2zM10 8h2v1h-2zM0 9h3v1h-3zM5 9h7v1h-7zM1 10h2v1h-2zM5 10h2v1h-2zM10 10h2v1h-2zM1 11h2v1h-2zM5 11h2v1h-2zM10 11h2v1h-2zM1 12h2v1h-2zM5 12h2v1h-2zM9 12h3v1h-3z"/><path id="b9632" d="M0 2h5v1h-5zM6 2h2v1h-2zM0 3h2v1h-2zM3 3h2v1h-2zM7 3h2v1h-2zM0 4h12v1h-12zM0 5h3v1h-3zM6 5h2v1h-2zM0 6h4v1h-4zM6 6h5v1h-5zM0 7h2v1h-2zM3 7h2v1h-2zM6 7h2v1h-2zM9 7h2v1h-2zM0 8h2v1h-2zM3 8h2v1h-2zM6 8h2v1h-2zM9 8h2v1h-2zM0 9h5v1h-5zM6 9h2v1h-2zM9 9h2v1h-2zM0 10h4v1h-4zM5 10h2v1h-2zM9 10h2v1h-2zM0 11h2v1h-2zM4 11h2v1h-2zM9 11h2v1h-2zM0 12h2v1h-2zM3 12h2v1h-2zM7 12h3v1h-3z"/><path id="g63a2" d="M2 2h1v1h-1zM4 2h7v1h-7zM2 3h1v1h-1zM4 3h1v1h-1zM10 3h1v1h-1zM0 4h4v1h-4zM6 4h1v1h-1zM8 4h1v1h-1zM2 5h1v1h-1zM5 5h1v1h-1zM9 5h1v1h-1zM2 6h1v1h-1zM4 6h1v1h-1zM7 6h1v1h-1zM10 6h1v1h-1zM2 7h2v1h-2zM7 7h1v1h-1zM1 8h2v1h-2zM4 8h7v1h-7zM0 9h1v1h-1zM2 9h1v1h-1zM7 9h1v1h-1zM2 10h1v1h-1zM5 10h1v1h-1zM7 10h2v1h-2zM2 11h1v1h-1zM4 11h1v1h-1zM7 11h1v1h-1zM9 11h1v1h-1zM0 12h4v1h-4zM7 12h1v1h-1zM10 12h1v1h-1z"/><path id="g6d4b" d="M0 2h1v1h-1zM2 2h5v1h-5zM10 2h1v1h-1zM1 3h2v1h-2zM6 3h1v1h-1zM8 3h1v1h-1zM10 3h1v1h-1zM2 4h1v1h-1zM4 4h1v1h-1zM6 4h1v1h-1zM8 4h1v1h-1zM10 4h1v1h-1zM0 5h1v1h-1zM2 5h1v1h-1zM4 5h1v1h-1zM6 5h1v1h-1zM8 5h1v1h-1zM10 5h1v1h-1zM1 6h2v1h-2zM4 6h1v1h-1zM6 6h1v1h-1zM8 6h1v1h-1zM10 6h1v1h-1zM2 7h1v1h-1zM4 7h1v1h-1zM6 7h1v1h-1zM8 7h1v1h-1zM10 7h1v1h-1zM2 8h1v1h-1zM4 8h1v1h-1zM6 8h1v1h-1zM8 8h1v1h-1zM10 8h1v1h-1zM0 9h2v1h-2zM4 9h1v1h-1zM8 9h1v1h-1zM10 9h1v1h-1zM1 10h1v1h-1zM3 10h1v1h-1zM5 10h1v1h-1zM10 10h1v1h-1zM1 11h2v1h-2zM6 11h1v1h-1zM10 11h1v1h-1zM1 12h1v1h-1zM8 12h3v1h-3z"/><path id="b5bf9" d="M8 2h2v1h-2zM0 3h5v1h-5zM8 3h2v1h-2zM3 4h9v1h-9zM0 5h2v1h-2zM3 5h2v1h-2zM8 5h2v1h-2zM1 6h4v1h-4zM8 6h2v1h-2zM2 7h2v1h-2zM5 7h2v1h-2zM8 7h2v1h-2zM2 8h2v1h-2zM6 8h4v1h-4zM1 9h4v1h-4zM8 9h2v1h-2zM1 10h4v1h-4zM8 10h2v1h-2zM0 11h2v1h-2zM6 11h4v1h-4zM7 12h2v1h-2z"/><path id="b8bb2" d="M0 2h2v1h-2zM5 2h2v1h-2zM8 2h2v1h-2zM1 3h2v1h-2zM5 3h2v1h-2zM8 3h2v1h-2zM3 4h9v1h-9zM0 5h3v1h-3zM5 5h2v1h-2zM8 5h2v1h-2zM1 6h2v1h-2zM5 6h2v1h-2zM8 6h2v1h-2zM1 7h11v1h-11zM1 8h2v1h-2zM5 8h2v1h-2zM8 8h2v1h-2zM1 9h6v1h-6zM8 9h2v1h-2zM1 10h3v1h-3zM5 10h2v1h-2zM8 10h2v1h-2zM1 11h2v1h-2zM4 11h2v1h-2zM8 11h2v1h-2zM3 12h2v1h-2zM8 12h2v1h-2z"/><path id="g5bf9" d="M8 2h1v1h-1zM0 3h4v1h-4zM8 3h1v1h-1zM3 4h8v1h-8zM0 5h1v1h-1zM3 5h1v1h-1zM8 5h1v1h-1zM1 6h1v1h-1zM3 6h1v1h-1zM8 6h1v1h-1zM2 7h1v1h-1zM5 7h1v1h-1zM8 7h1v1h-1zM2 8h1v1h-1zM6 8h1v1h-1zM8 8h1v1h-1zM1 9h1v1h-1zM3 9h1v1h-1zM8 9h1v1h-1zM1 10h1v1h-1zM3 10h1v1h-1zM8 10h1v1h-1zM0 11h1v1h-1zM6 11h1v1h-1zM8 11h1v1h-1zM7 12h1v1h-1z"/><path id="g8bb2" d="M0 2h1v1h-1zM5 2h1v1h-1zM8 2h1v1h-1zM1 3h1v1h-1zM5 3h1v1h-1zM8 3h1v1h-1zM3 4h8v1h-8zM0 5h2v1h-2zM5 5h1v1h-1zM8 5h1v1h-1zM1 6h1v1h-1zM5 6h1v1h-1zM8 6h1v1h-1zM1 7h1v1h-1zM3 7h8v1h-8zM1 8h1v1h-1zM5 8h1v1h-1zM8 8h1v1h-1zM1 9h1v1h-1zM3 9h1v1h-1zM5 9h1v1h-1zM8 9h1v1h-1zM1 10h2v1h-2zM5 10h1v1h-1zM8 10h1v1h-1zM1 11h1v1h-1zM4 11h1v1h-1zM8 11h1v1h-1zM3 12h1v1h-1zM8 12h1v1h-1z"/><path id="b5176" d="M3 2h2v1h-2zM7 2h2v1h-2zM1 3h10v1h-10zM3 4h2v1h-2zM7 4h2v1h-2zM3 5h6v1h-6zM3 6h2v1h-2zM7 6h2v1h-2zM3 7h6v1h-6zM3 8h2v1h-2zM7 8h2v1h-2zM0 9h12v1h-12zM3 10h2v1h-2zM7 10h2v1h-2zM2 11h2v1h-2zM8 11h2v1h-2zM0 12h3v1h-3zM9 12h2v1h-2z"/><path id="b4ed6" d="M3 2h2v1h-2zM7 2h2v1h-2zM3 3h2v1h-2zM7 3h2v1h-2zM2 4h2v1h-2zM5 4h6v1h-6zM2 5h2v1h-2zM5 5h6v1h-6zM1 6h10v1h-10zM0 7h4v1h-4zM5 7h6v1h-6zM2 8h2v1h-2zM5 8h6v1h-6zM2 9h2v1h-2zM5 9h5v1h-5zM2 10h2v1h-2zM5 10h4v1h-4zM10 10h2v1h-2zM2 11h2v1h-2zM5 11h2v1h-2zM10 11h2v1h-2zM2 12h2v1h-2zM6 12h6v1h-6z"/><path id="g6570" d="M0 2h1v1h-1zM3 2h1v1h-1zM5 2h1v1h-1zM7 2h1v1h-1zM1 3h1v1h-1zM3 3h2v1h-2zM7 3h1v1h-1zM0 4h6v1h-6zM7 4h4v1h-4zM2 5h2v1h-2zM6 5h2v1h-2zM9 5h1v1h-1zM1 6h1v1h-1zM3 6h2v1h-2zM7 6h1v1h-1zM9 6h1v1h-1zM0 7h1v1h-1zM3 7h1v1h-1zM5 7h1v1h-1zM7 7h1v1h-1zM9 7h1v1h-1zM0 8h6v1h-6zM7 8h1v1h-1zM9 8h1v1h-1zM2 9h1v1h-1zM4 9h1v1h-1zM7 9h1v1h-1zM9 9h1v1h-1zM1 10h2v1h-2zM4 10h1v1h-1zM8 10h1v1h-1zM3 11h1v1h-1zM7 11h1v1h-1zM9 11h1v1h-1zM0 12h3v1h-3zM4 12h3v1h-3zM10 12h1v1h-1z"/><path id="g636e" d="M2 2h1v1h-1zM5 2h6v1h-6zM2 3h1v1h-1zM5 3h1v1h-1zM10 3h1v1h-1zM0 4h6v1h-6zM10 4h1v1h-1zM2 5h1v1h-1zM5 5h6v1h-6zM2 6h1v1h-1zM4 6h2v1h-2zM8 6h1v1h-1zM2 7h2v1h-2zM5 7h6v1h-6zM1 8h2v1h-2zM5 8h1v1h-1zM8 8h1v1h-1zM0 9h1v1h-1zM2 9h1v1h-1zM5 9h6v1h-6zM2 10h1v1h-1zM4 10h3v1h-3zM10 10h1v1h-1zM0 11h1v1h-1zM2 11h1v1h-1zM4 11h1v1h-1zM6 11h1v1h-1zM10 11h1v1h-1zM1 12h1v1h-1zM3 12h1v1h-1zM6 12h5v1h-5z"/><path id="g7535" d="M5 2h1v1h-1zM5 3h1v1h-1zM1 4h9v1h-9zM1 5h1v1h-1zM5 5h1v1h-1zM9 5h1v1h-1zM1 6h9v1h-9zM1 7h1v1h-1zM5 7h1v1h-1zM9 7h1v1h-1zM1 8h1v1h-1zM5 8h1v1h-1zM9 8h1v1h-1zM1 9h9v1h-9zM5 10h1v1h-1zM10 10h1v1h-1zM5 11h1v1h-1zM10 11h1v1h-1zM6 12h5v1h-5z"/><path id="g5b50" d="M2 2h7v1h-7zM7 3h1v1h-1zM6 4h1v1h-1zM5 5h1v1h-1zM5 6h1v1h-1zM0 7h11v1h-11zM5 8h1v1h-1zM5 9h1v1h-1zM5 10h1v1h-1zM3 11h1v1h-1zM5 11h1v1h-1zM4 12h1v1h-1z"/><path id="g56f4" d="M1 2h10v1h-10zM1 3h1v1h-1zM5 3h1v1h-1zM10 3h1v1h-1zM1 4h8v1h-8zM10 4h1v1h-1zM1 5h1v1h-1zM5 5h1v1h-1zM10 5h1v1h-1zM1 6h1v1h-1zM3 6h5v1h-5zM10 6h1v1h-1zM1 7h1v1h-1zM5 7h1v1h-1zM10 7h1v1h-1zM1 8h8v1h-8zM10 8h1v1h-1zM1 9h1v1h-1zM5 9h1v1h-1zM8 9h1v1h-1zM10 9h1v1h-1zM1 10h1v1h-1zM5 10h1v1h-1zM7 10h1v1h-1zM10 10h1v1h-1zM1 11h10v1h-10zM1 12h1v1h-1zM10 12h1v1h-1z"/><path id="g680f" d="M2 2h1v1h-1zM5 2h1v1h-1zM10 2h1v1h-1zM2 3h1v1h-1zM6 3h1v1h-1zM9 3h1v1h-1zM0 4h4v1h-4zM2 5h1v1h-1zM4 5h7v1h-7zM1 6h2v1h-2zM1 7h3v1h-3zM0 8h1v1h-1zM2 8h1v1h-1zM5 8h5v1h-5zM0 9h1v1h-1zM2 9h1v1h-1zM2 10h1v1h-1zM2 11h1v1h-1zM2 12h1v1h-1zM4 12h7v1h-7z"/><path id="g9632" d="M0 2h4v1h-4zM6 2h1v1h-1zM0 3h1v1h-1zM3 3h1v1h-1zM7 3h1v1h-1zM0 4h1v1h-1zM2 4h1v1h-1zM4 4h7v1h-7zM0 5h2v1h-2zM6 5h1v1h-1zM0 6h1v1h-1zM2 6h1v1h-1zM6 6h4v1h-4zM0 7h1v1h-1zM3 7h1v1h-1zM6 7h1v1h-1zM9 7h1v1h-1zM0 8h1v1h-1zM3 8h1v1h-1zM6 8h1v1h-1zM9 8h1v1h-1zM0 9h2v1h-2zM3 9h1v1h-1zM6 9h1v1h-1zM9 9h1v1h-1zM0 10h1v1h-1zM2 10h1v1h-1zM5 10h1v1h-1zM9 10h1v1h-1zM0 11h1v1h-1zM4 11h1v1h-1zM9 11h1v1h-1zM0 12h1v1h-1zM3 12h1v1h-1zM7 12h2v1h-2z"/><path id="g533a" d="M1 2h9v1h-9zM1 3h1v1h-1zM1 4h1v1h-1zM3 4h1v1h-1zM8 4h1v1h-1zM1 5h1v1h-1zM4 5h1v1h-1zM8 5h1v1h-1zM1 6h1v1h-1zM5 6h1v1h-1zM7 6h1v1h-1zM1 7h1v1h-1zM6 7h1v1h-1zM1 8h1v1h-1zM5 8h1v1h-1zM7 8h1v1h-1zM1 9h1v1h-1zM4 9h1v1h-1zM8 9h1v1h-1zM1 10h1v1h-1zM3 10h1v1h-1zM8 10h1v1h-1zM1 11h1v1h-1zM1 12h10v1h-10z"/><path id="g7f16" d="M2 2h1v1h-1zM7 2h1v1h-1zM2 3h1v1h-1zM4 3h7v1h-7zM1 4h1v1h-1zM4 4h1v1h-1zM10 4h1v1h-1zM1 5h1v1h-1zM3 5h8v1h-8zM0 6h3v1h-3zM4 6h1v1h-1zM2 7h1v1h-1zM4 7h7v1h-7zM1 8h1v1h-1zM4 8h1v1h-1zM6 8h1v1h-1zM8 8h1v1h-1zM10 8h1v1h-1zM0 9h11v1h-11zM4 10h1v1h-1zM6 10h1v1h-1zM8 10h1v1h-1zM10 10h1v1h-1zM2 11h3v1h-3zM6 11h1v1h-1zM8 11h1v1h-1zM10 11h1v1h-1zM0 12h2v1h-2zM4 12h1v1h-1zM9 12h2v1h-2z"/><path id="g53f7" d="M2 2h7v1h-7zM2 3h1v1h-1zM8 3h1v1h-1zM2 4h7v1h-7zM0 6h11v1h-11zM4 7h1v1h-1zM3 8h6v1h-6zM8 9h1v1h-1zM8 10h1v1h-1zM5 11h1v1h-1zM8 11h1v1h-1zM6 12h2v1h-2z"/><path id="g6240" d="M3 2h2v1h-2zM9 2h2v1h-2zM1 3h2v1h-2zM6 3h3v1h-3zM1 4h1v1h-1zM6 4h1v1h-1zM1 5h4v1h-4zM6 5h1v1h-1zM1 6h1v1h-1zM4 6h1v1h-1zM6 6h5v1h-5zM1 7h1v1h-1zM4 7h1v1h-1zM6 7h1v1h-1zM9 7h1v1h-1zM1 8h4v1h-4zM6 8h1v1h-1zM9 8h1v1h-1zM1 9h1v1h-1zM6 9h1v1h-1zM9 9h1v1h-1zM1 10h1v1h-1zM6 10h1v1h-1zM9 10h1v1h-1zM1 11h1v1h-1zM5 11h1v1h-1zM9 11h1v1h-1zM0 12h1v1h-1zM4 12h1v1h-1zM9 12h1v1h-1z"/><path id="g5c5e" d="M1 2h9v1h-9zM1 3h1v1h-1zM9 3h1v1h-1zM1 4h9v1h-9zM1 5h1v1h-1zM9 5h1v1h-1zM1 6h1v1h-1zM3 6h6v1h-6zM1 7h1v1h-1zM6 7h1v1h-1zM1 8h1v1h-1zM3 8h7v1h-7zM1 9h1v1h-1zM3 9h1v1h-1zM6 9h1v1h-1zM9 9h1v1h-1zM0 10h1v1h-1zM2 10h9v1h-9zM0 11h1v1h-1zM2 11h1v1h-1zM6 11h1v1h-1zM10 11h1v1h-1zM0 12h1v1h-1zM2 12h1v1h-1zM4 12h4v1h-4zM9 12h2v1h-2z"/><path id="g8bbe" d="M1 2h1v1h-1zM5 2h4v1h-4zM2 3h1v1h-1zM5 3h1v1h-1zM8 3h1v1h-1zM5 4h1v1h-1zM8 4h1v1h-1zM4 5h1v1h-1zM8 5h3v1h-3zM0 6h3v1h-3zM2 7h1v1h-1zM4 7h6v1h-6zM2 8h1v1h-1zM5 8h1v1h-1zM9 8h1v1h-1zM2 9h1v1h-1zM6 9h1v1h-1zM8 9h1v1h-1zM2 10h2v1h-2zM7 10h1v1h-1zM2 11h1v1h-1zM6 11h1v1h-1zM8 11h1v1h-1zM3 12h3v1h-3zM9 12h2v1h-2z"/><path id="g5907" d="M3 2h1v1h-1zM3 3h6v1h-6zM2 4h2v1h-2zM7 4h1v1h-1zM1 5h1v1h-1zM4 5h3v1h-3zM4 6h1v1h-1zM6 6h2v1h-2zM2 7h2v1h-2zM8 7h3v1h-3zM0 8h9v1h-9zM2 9h1v1h-1zM5 9h1v1h-1zM8 9h1v1h-1zM2 10h7v1h-7zM2 11h1v1h-1zM5 11h1v1h-1zM8 11h1v1h-1zM2 12h7v1h-7z"/><path id="g4e3b" d="M4 2h1v1h-1zM5 3h1v1h-1zM0 4h11v1h-11zM5 5h1v1h-1zM5 6h1v1h-1zM5 7h1v1h-1zM1 8h9v1h-9zM5 9h1v1h-1zM5 10h1v1h-1zM5 11h1v1h-1zM0 12h11v1h-11z"/><path id="g5de5" d="M1 3h9v1h-9zM5 4h1v1h-1zM5 5h1v1h-1zM5 6h1v1h-1zM5 7h1v1h-1zM5 8h1v1h-1zM5 9h1v1h-1zM5 10h1v1h-1zM0 11h11v1h-11z"/><path id="g4f5c" d="M3 2h1v1h-1zM5 2h1v1h-1zM3 3h1v1h-1zM5 3h1v1h-1zM2 4h1v1h-1zM5 4h6v1h-6zM2 5h1v1h-1zM4 5h1v1h-1zM6 5h1v1h-1zM1 6h3v1h-3zM6 6h1v1h-1zM0 7h1v1h-1zM2 7h1v1h-1zM6 7h4v1h-4zM2 8h1v1h-1zM6 8h1v1h-1zM2 9h1v1h-1zM6 9h1v1h-1zM2 10h1v1h-1zM6 10h5v1h-5zM2 11h1v1h-1zM6 11h1v1h-1zM2 12h1v1h-1zM6 12h1v1h-1z"/><path id="g72b6" d="M3 2h1v1h-1zM7 2h2v1h-2zM0 3h1v1h-1zM3 3h1v1h-1zM7 3h1v1h-1zM9 3h1v1h-1zM1 4h1v1h-1zM3 4h1v1h-1zM7 4h1v1h-1zM1 5h1v1h-1zM3 5h8v1h-8zM3 6h1v1h-1zM7 6h1v1h-1zM3 7h1v1h-1zM7 7h1v1h-1zM2 8h2v1h-2zM6 8h1v1h-1zM8 8h1v1h-1zM0 9h2v1h-2zM3 9h1v1h-1zM6 9h1v1h-1zM8 9h1v1h-1zM3 10h1v1h-1zM5 10h1v1h-1zM9 10h1v1h-1zM3 11h1v1h-1zM5 11h1v1h-1zM9 11h1v1h-1zM3 12h2v1h-2zM10 12h1v1h-1z"/><path id="g6001" d="M5 2h1v1h-1zM0 3h11v1h-11zM5 4h1v1h-1zM4 5h1v1h-1zM6 5h1v1h-1zM2 6h3v1h-3zM7 6h2v1h-2zM0 7h2v1h-2zM5 7h1v1h-1zM9 7h2v1h-2zM3 9h1v1h-1zM5 9h1v1h-1zM9 9h1v1h-1zM1 10h1v1h-1zM3 10h1v1h-1zM6 10h1v1h-1zM8 10h1v1h-1zM10 10h1v1h-1zM1 11h1v1h-1zM3 11h1v1h-1zM8 11h1v1h-1zM10 11h1v1h-1zM0 12h1v1h-1zM4 12h5v1h-5z"/><path id="g8109" d="M1 2h3v1h-3zM7 2h1v1h-1zM1 3h1v1h-1zM3 3h1v1h-1zM8 3h1v1h-1zM1 4h1v1h-1zM3 4h1v1h-1zM5 4h3v1h-3zM1 5h3v1h-3zM7 5h1v1h-1zM10 5h1v1h-1zM1 6h1v1h-1zM3 6h3v1h-3zM7 6h1v1h-1zM9 6h1v1h-1zM1 7h1v1h-1zM3 7h1v1h-1zM5 7h1v1h-1zM7 7h2v1h-2zM1 8h3v1h-3zM5 8h1v1h-1zM7 8h1v1h-1zM9 8h1v1h-1zM1 9h1v1h-1zM3 9h1v1h-1zM5 9h1v1h-1zM7 9h1v1h-1zM9 9h1v1h-1zM1 10h1v1h-1zM3 10h2v1h-2zM7 10h1v1h-1zM10 10h1v1h-1zM0 11h1v1h-1zM3 11h1v1h-1zM7 11h1v1h-1zM10 11h1v1h-1zM0 12h1v1h-1zM2 12h2v1h-2zM6 12h2v1h-2z"/><path id="g51b2" d="M1 2h1v1h-1zM7 2h1v1h-1zM2 3h1v1h-1zM7 3h1v1h-1zM2 4h1v1h-1zM4 4h7v1h-7zM4 5h1v1h-1zM7 5h1v1h-1zM10 5h1v1h-1zM2 6h1v1h-1zM4 6h1v1h-1zM7 6h1v1h-1zM10 6h1v1h-1zM2 7h1v1h-1zM4 7h1v1h-1zM7 7h1v1h-1zM10 7h1v1h-1zM0 8h2v1h-2zM4 8h7v1h-7zM1 9h1v1h-1zM4 9h1v1h-1zM7 9h1v1h-1zM10 9h1v1h-1zM1 10h1v1h-1zM7 10h1v1h-1zM1 11h1v1h-1zM7 11h1v1h-1zM7 12h1v1h-1z"/><path id="g6b63" d="M0 3h11v1h-11zM5 4h1v1h-1zM5 5h1v1h-1zM2 6h1v1h-1zM5 6h1v1h-1zM2 7h1v1h-1zM5 7h5v1h-5zM2 8h1v1h-1zM5 8h1v1h-1zM2 9h1v1h-1zM5 9h1v1h-1zM2 10h1v1h-1zM5 10h1v1h-1zM2 11h1v1h-1zM5 11h1v1h-1zM0 12h11v1h-11z"/><path id="g538b" d="M2 2h9v1h-9zM2 3h1v1h-1zM2 4h1v1h-1zM6 4h1v1h-1zM2 5h1v1h-1zM6 5h1v1h-1zM2 6h1v1h-1zM6 6h1v1h-1zM2 7h8v1h-8zM2 8h1v1h-1zM6 8h1v1h-1zM2 9h1v1h-1zM6 9h1v1h-1zM8 9h1v1h-1zM1 10h1v1h-1zM6 10h1v1h-1zM9 10h1v1h-1zM1 11h1v1h-1zM6 11h1v1h-1zM0 12h1v1h-1zM2 12h9v1h-9z"/><path id="g8d1f" d="M3 2h1v1h-1zM3 3h5v1h-5zM2 4h1v1h-1zM6 4h1v1h-1zM1 5h8v1h-8zM0 6h1v1h-1zM2 6h1v1h-1zM8 6h1v1h-1zM2 7h1v1h-1zM5 7h1v1h-1zM8 7h1v1h-1zM2 8h1v1h-1zM5 8h1v1h-1zM8 8h1v1h-1zM2 9h1v1h-1zM5 9h1v1h-1zM8 9h1v1h-1zM2 10h1v1h-1zM5 10h1v1h-1zM8 10h1v1h-1zM3 11h2v1h-2zM6 11h2v1h-2zM0 12h3v1h-3zM8 12h2v1h-2z"/><path id="g603b" d="M3 2h1v1h-1zM7 2h1v1h-1zM4 3h1v1h-1zM6 3h1v1h-1zM2 4h7v1h-7zM2 5h1v1h-1zM8 5h1v1h-1zM2 6h1v1h-1zM8 6h1v1h-1zM2 7h7v1h-7zM2 8h1v1h-1zM8 8h1v1h-1zM5 9h1v1h-1zM9 9h1v1h-1zM1 10h1v1h-1zM3 10h1v1h-1zM6 10h1v1h-1zM8 10h1v1h-1zM10 10h1v1h-1zM1 11h1v1h-1zM3 11h1v1h-1zM8 11h1v1h-1zM10 11h1v1h-1zM0 12h1v1h-1zM4 12h5v1h-5z"/><path id="g7ebf" d="M2 2h1v1h-1zM6 2h1v1h-1zM8 2h1v1h-1zM2 3h1v1h-1zM6 3h1v1h-1zM9 3h1v1h-1zM1 4h1v1h-1zM6 4h4v1h-4zM1 5h1v1h-1zM4 5h3v1h-3zM0 6h3v1h-3zM6 6h5v1h-5zM2 7h1v1h-1zM4 7h3v1h-3zM1 8h1v1h-1zM6 8h1v1h-1zM9 8h1v1h-1zM0 9h4v1h-4zM6 9h1v1h-1zM8 9h1v1h-1zM4 10h1v1h-1zM7 10h1v1h-1zM10 10h1v1h-1zM2 11h2v1h-2zM6 11h1v1h-1zM8 11h1v1h-1zM10 11h1v1h-1zM0 12h2v1h-2zM4 12h2v1h-2zM9 12h2v1h-2z"/><path id="g62a5" d="M2 2h1v1h-1zM5 2h5v1h-5zM2 3h1v1h-1zM5 3h1v1h-1zM9 3h1v1h-1zM0 4h6v1h-6zM9 4h1v1h-1zM2 5h1v1h-1zM5 5h1v1h-1zM7 5h2v1h-2zM2 6h1v1h-1zM4 6h2v1h-2zM2 7h2v1h-2zM5 7h6v1h-6zM1 8h2v1h-2zM5 8h1v1h-1zM7 8h1v1h-1zM9 8h1v1h-1zM0 9h1v1h-1zM2 9h1v1h-1zM5 9h1v1h-1zM7 9h1v1h-1zM9 9h1v1h-1zM2 10h1v1h-1zM5 10h1v1h-1zM8 10h1v1h-1zM2 11h1v1h-1zM5 11h1v1h-1zM7 11h1v1h-1zM9 11h1v1h-1zM0 12h3v1h-3zM5 12h2v1h-2zM10 12h1v1h-1z"/><path id="g8b66" d="M0 2h6v1h-6zM7 2h1v1h-1zM1 3h1v1h-1zM4 3h1v1h-1zM7 3h4v1h-4zM0 4h7v1h-7zM8 4h1v1h-1zM1 5h1v1h-1zM3 5h1v1h-1zM5 5h1v1h-1zM7 5h1v1h-1zM9 5h1v1h-1zM0 6h11v1h-11zM1 8h9v1h-9zM2 10h7v1h-7zM2 11h1v1h-1zM8 11h1v1h-1zM2 12h7v1h-7z"/><path id="g62c6" d="M2 2h1v1h-1zM8 2h2v1h-2zM2 3h1v1h-1zM5 3h3v1h-3zM0 4h4v1h-4zM5 4h1v1h-1zM2 5h1v1h-1zM5 5h6v1h-6zM2 6h1v1h-1zM5 6h1v1h-1zM8 6h1v1h-1zM2 7h2v1h-2zM5 7h1v1h-1zM7 7h2v1h-2zM1 8h2v1h-2zM5 8h1v1h-1zM8 8h2v1h-2zM0 9h1v1h-1zM2 9h1v1h-1zM5 9h1v1h-1zM8 9h1v1h-1zM10 9h1v1h-1zM2 10h1v1h-1zM5 10h1v1h-1zM8 10h1v1h-1zM0 11h1v1h-1zM2 11h1v1h-1zM4 11h1v1h-1zM8 11h1v1h-1zM1 12h1v1h-1zM4 12h1v1h-1zM8 12h1v1h-1z"/><path id="g6545" d="M3 2h1v1h-1zM7 2h1v1h-1zM3 3h1v1h-1zM7 3h1v1h-1zM0 4h6v1h-6zM7 4h4v1h-4zM3 5h1v1h-1zM7 5h1v1h-1zM9 5h1v1h-1zM3 6h1v1h-1zM6 6h1v1h-1zM9 6h1v1h-1zM1 7h5v1h-5zM7 7h1v1h-1zM9 7h1v1h-1zM1 8h1v1h-1zM4 8h1v1h-1zM7 8h1v1h-1zM9 8h1v1h-1zM1 9h1v1h-1zM4 9h1v1h-1zM8 9h1v1h-1zM1 10h1v1h-1zM4 10h1v1h-1zM8 10h1v1h-1zM1 11h4v1h-4zM7 11h1v1h-1zM9 11h1v1h-1zM1 12h1v1h-1zM4 12h3v1h-3zM10 12h1v1h-1z"/><path id="g969c" d="M0 2h4v1h-4zM7 2h1v1h-1zM0 3h1v1h-1zM3 3h8v1h-8zM0 4h1v1h-1zM2 4h1v1h-1zM5 4h1v1h-1zM8 4h1v1h-1zM0 5h2v1h-2zM4 5h7v1h-7zM0 6h1v1h-1zM2 6h1v1h-1zM5 6h1v1h-1zM9 6h1v1h-1zM0 7h1v1h-1zM3 7h1v1h-1zM5 7h5v1h-5zM0 8h1v1h-1zM3 8h1v1h-1zM5 8h1v1h-1zM9 8h1v1h-1zM0 9h4v1h-4zM5 9h5v1h-5zM0 10h1v1h-1zM2 10h1v1h-1zM7 10h1v1h-1zM0 11h1v1h-1zM4 11h7v1h-7zM0 12h1v1h-1zM7 12h1v1h-1z"/><path id="g95e8" d="M2 2h1v1h-1zM5 2h6v1h-6zM3 3h1v1h-1zM10 3h1v1h-1zM1 4h1v1h-1zM10 4h1v1h-1zM1 5h1v1h-1zM10 5h1v1h-1zM1 6h1v1h-1zM10 6h1v1h-1zM1 7h1v1h-1zM10 7h1v1h-1zM1 8h1v1h-1zM10 8h1v1h-1zM1 9h1v1h-1zM10 9h1v1h-1zM1 10h1v1h-1zM10 10h1v1h-1zM1 11h1v1h-1zM10 11h1v1h-1zM1 12h1v1h-1zM8 12h3v1h-3z"/><path id="g78c1" d="M5 2h1v1h-1zM9 2h1v1h-1zM0 3h4v1h-4zM6 3h1v1h-1zM8 3h1v1h-1zM2 4h1v1h-1zM4 4h7v1h-7zM2 5h1v1h-1zM5 5h1v1h-1zM8 5h1v1h-1zM1 6h3v1h-3zM5 6h1v1h-1zM8 6h1v1h-1zM10 6h1v1h-1zM0 7h2v1h-2zM3 7h2v1h-2zM6 7h2v1h-2zM10 7h1v1h-1zM1 8h1v1h-1zM3 8h7v1h-7zM1 9h1v1h-1zM3 9h1v1h-1zM6 9h1v1h-1zM9 9h1v1h-1zM1 10h3v1h-3zM5 10h1v1h-1zM8 10h1v1h-1zM1 11h1v1h-1zM3 11h2v1h-2zM6 11h2v1h-2zM9 11h1v1h-1zM3 12h3v1h-3zM7 12h2v1h-2zM10 12h1v1h-1z"/><path id="g4f9b" d="M3 2h1v1h-1zM5 2h1v1h-1zM8 2h1v1h-1zM3 3h1v1h-1zM5 3h1v1h-1zM8 3h1v1h-1zM2 4h1v1h-1zM5 4h1v1h-1zM8 4h1v1h-1zM2 5h1v1h-1zM4 5h7v1h-7zM1 6h2v1h-2zM5 6h1v1h-1zM8 6h1v1h-1zM0 7h1v1h-1zM2 7h1v1h-1zM5 7h1v1h-1zM8 7h1v1h-1zM2 8h9v1h-9zM2 9h1v1h-1zM2 10h1v1h-1zM5 10h1v1h-1zM8 10h1v1h-1zM2 11h1v1h-1zM4 11h1v1h-1zM9 11h1v1h-1zM2 12h2v1h-2zM10 12h1v1h-1z"/><path id="g65b9" d="M4 2h1v1h-1zM5 3h1v1h-1zM0 4h11v1h-11zM4 5h1v1h-1zM4 6h1v1h-1zM4 7h5v1h-5zM3 8h1v1h-1zM8 8h1v1h-1zM3 9h1v1h-1zM8 9h1v1h-1zM2 10h1v1h-1zM8 10h1v1h-1zM1 11h1v1h-1zM8 11h1v1h-1zM0 12h1v1h-1zM5 12h3v1h-3z"/><path id="g5f0f" d="M6 2h1v1h-1zM8 2h1v1h-1zM6 3h1v1h-1zM9 3h1v1h-1zM6 4h1v1h-1zM0 5h11v1h-11zM6 6h1v1h-1zM1 7h4v1h-4zM6 7h1v1h-1zM3 8h1v1h-1zM6 8h1v1h-1zM3 9h1v1h-1zM7 9h1v1h-1zM3 10h1v1h-1zM7 10h1v1h-1zM10 10h1v1h-1zM3 11h2v1h-2zM8 11h1v1h-1zM10 11h1v1h-1zM0 12h3v1h-3zM9 12h2v1h-2z"/><path id="g80fd" d="M2 2h1v1h-1zM7 2h1v1h-1zM1 3h1v1h-1zM4 3h1v1h-1zM7 3h1v1h-1zM9 3h1v1h-1zM0 4h6v1h-6zM7 4h2v1h-2zM7 5h1v1h-1zM10 5h1v1h-1zM1 6h5v1h-5zM7 6h4v1h-4zM1 7h1v1h-1zM5 7h1v1h-1zM1 8h5v1h-5zM7 8h1v1h-1zM9 8h1v1h-1zM1 9h1v1h-1zM5 9h1v1h-1zM7 9h2v1h-2zM1 10h5v1h-5zM7 10h1v1h-1zM10 10h1v1h-1zM1 11h1v1h-1zM5 11h1v1h-1zM7 11h1v1h-1zM10 11h1v1h-1zM1 12h1v1h-1zM4 12h2v1h-2zM7 12h4v1h-4z"/><path id="g91cf" d="M2 2h7v1h-7zM2 3h1v1h-1zM8 3h1v1h-1zM2 4h7v1h-7zM2 5h1v1h-1zM8 5h1v1h-1zM0 6h11v1h-11zM2 7h1v1h-1zM5 7h1v1h-1zM8 7h1v1h-1zM2 8h7v1h-7zM2 9h1v1h-1zM5 9h1v1h-1zM8 9h1v1h-1zM1 10h9v1h-9zM5 11h1v1h-1zM0 12h11v1h-11z"/><path id="g7ea7" d="M2 2h1v1h-1zM4 2h6v1h-6zM2 3h1v1h-1zM6 3h1v1h-1zM9 3h1v1h-1zM1 4h1v1h-1zM4 4h1v1h-1zM6 4h1v1h-1zM9 4h1v1h-1zM1 5h1v1h-1zM3 5h1v1h-1zM6 5h1v1h-1zM8 5h1v1h-1zM0 6h3v1h-3zM6 6h1v1h-1zM8 6h3v1h-3zM2 7h1v1h-1zM6 7h1v1h-1zM10 7h1v1h-1zM1 8h1v1h-1zM6 8h1v1h-1zM10 8h1v1h-1zM0 9h4v1h-4zM5 9h1v1h-1zM7 9h1v1h-1zM9 9h1v1h-1zM4 10h2v1h-2zM8 10h1v1h-1zM2 11h2v1h-2zM5 11h1v1h-1zM7 11h1v1h-1zM9 11h1v1h-1zM0 12h2v1h-2zM4 12h1v1h-1zM6 12h1v1h-1zM10 12h1v1h-1z"/><path id="g522b" d="M1 2h5v1h-5zM10 2h1v1h-1zM1 3h1v1h-1zM5 3h1v1h-1zM10 3h1v1h-1zM1 4h1v1h-1zM5 4h1v1h-1zM8 4h1v1h-1zM10 4h1v1h-1zM1 5h5v1h-5zM8 5h1v1h-1zM10 5h1v1h-1zM3 6h1v1h-1zM8 6h1v1h-1zM10 6h1v1h-1zM0 7h7v1h-7zM8 7h1v1h-1zM10 7h1v1h-1zM3 8h1v1h-1zM6 8h1v1h-1zM8 8h1v1h-1zM10 8h1v1h-1zM2 9h1v1h-1zM6 9h1v1h-1zM8 9h1v1h-1zM10 9h1v1h-1zM2 10h1v1h-1zM6 10h1v1h-1zM10 10h1v1h-1zM1 11h1v1h-1zM6 11h1v1h-1zM10 11h1v1h-1zM0 12h1v1h-1zM4 12h2v1h-2zM8 12h3v1h-3z"/><path id="g7075" d="M2 2h7v1h-7zM8 3h1v1h-1zM2 4h7v1h-7zM8 5h1v1h-1zM2 6h7v1h-7zM5 7h1v1h-1zM3 8h1v1h-1zM5 8h1v1h-1zM9 8h1v1h-1zM2 9h1v1h-1zM5 9h1v1h-1zM8 9h1v1h-1zM4 10h1v1h-1zM6 10h1v1h-1zM3 11h1v1h-1zM7 11h1v1h-1zM0 12h3v1h-3zM8 12h3v1h-3z"/><path id="g654f" d="M1 2h1v1h-1zM7 2h1v1h-1zM1 3h5v1h-5zM7 3h1v1h-1zM0 4h1v1h-1zM7 4h4v1h-4zM1 5h7v1h-7zM9 5h1v1h-1zM1 6h1v1h-1zM3 6h1v1h-1zM5 6h1v1h-1zM7 6h1v1h-1zM9 6h1v1h-1zM0 7h8v1h-8zM9 7h1v1h-1zM1 8h1v1h-1zM3 8h1v1h-1zM5 8h1v1h-1zM7 8h1v1h-1zM9 8h1v1h-1zM1 9h1v1h-1zM3 9h1v1h-1zM5 9h1v1h-1zM7 9h1v1h-1zM9 9h1v1h-1zM0 10h7v1h-7zM8 10h1v1h-1zM5 11h1v1h-1zM7 11h1v1h-1zM9 11h1v1h-1zM3 12h2v1h-2zM6 12h1v1h-1zM10 12h1v1h-1z"/><path id="g5ea6" d="M5 2h1v1h-1zM1 3h10v1h-10zM1 4h1v1h-1zM4 4h1v1h-1zM7 4h1v1h-1zM1 5h9v1h-9zM1 6h1v1h-1zM4 6h1v1h-1zM7 6h1v1h-1zM1 7h1v1h-1zM4 7h4v1h-4zM1 8h1v1h-1zM1 9h1v1h-1zM3 9h6v1h-6zM1 10h1v1h-1zM4 10h1v1h-1zM7 10h1v1h-1zM0 11h1v1h-1zM5 11h2v1h-2zM0 12h1v1h-1zM2 12h3v1h-3zM7 12h3v1h-3z"/><path id="g4f4e" d="M3 2h1v1h-1zM8 2h2v1h-2zM3 3h5v1h-5zM2 4h1v1h-1zM4 4h1v1h-1zM7 4h1v1h-1zM2 5h1v1h-1zM4 5h1v1h-1zM7 5h1v1h-1zM1 6h2v1h-2zM4 6h1v1h-1zM7 6h1v1h-1zM0 7h1v1h-1zM2 7h1v1h-1zM4 7h7v1h-7zM2 8h1v1h-1zM4 8h1v1h-1zM7 8h1v1h-1zM2 9h1v1h-1zM4 9h1v1h-1zM7 9h1v1h-1zM10 9h1v1h-1zM2 10h1v1h-1zM4 10h1v1h-1zM6 10h1v1h-1zM8 10h1v1h-1zM10 10h1v1h-1zM2 11h1v1h-1zM4 11h2v1h-2zM7 11h1v1h-1zM9 11h2v1h-2zM2 12h1v1h-1zM4 12h1v1h-1zM8 12h1v1h-1zM10 12h1v1h-1z"/><path id="g81ea" d="M4 2h1v1h-1zM2 3h7v1h-7zM2 4h1v1h-1zM8 4h1v1h-1zM2 5h1v1h-1zM8 5h1v1h-1zM2 6h7v1h-7zM2 7h1v1h-1zM8 7h1v1h-1zM2 8h7v1h-7zM2 9h1v1h-1zM8 9h1v1h-1zM2 10h1v1h-1zM8 10h1v1h-1zM2 11h7v1h-7zM2 12h1v1h-1zM8 12h1v1h-1z"/><path id="g52a8" d="M7 2h1v1h-1zM1 3h4v1h-4zM7 3h1v1h-1zM7 4h1v1h-1zM6 5h5v1h-5zM0 6h6v1h-6zM7 6h1v1h-1zM10 6h1v1h-1zM2 7h1v1h-1zM7 7h1v1h-1zM10 7h1v1h-1zM2 8h1v1h-1zM7 8h1v1h-1zM10 8h1v1h-1zM1 9h1v1h-1zM4 9h1v1h-1zM7 9h1v1h-1zM10 9h1v1h-1zM0 10h5v1h-5zM6 10h1v1h-1zM10 10h1v1h-1zM4 11h1v1h-1zM6 11h1v1h-1zM10 11h1v1h-1zM5 12h1v1h-1zM8 12h2v1h-2z"/><path id="g5207" d="M2 2h1v1h-1zM2 3h1v1h-1zM5 3h6v1h-6zM2 4h1v1h-1zM7 4h1v1h-1zM10 4h1v1h-1zM2 5h3v1h-3zM7 5h1v1h-1zM10 5h1v1h-1zM0 6h3v1h-3zM7 6h1v1h-1zM10 6h1v1h-1zM2 7h1v1h-1zM7 7h1v1h-1zM10 7h1v1h-1zM2 8h1v1h-1zM4 8h1v1h-1zM7 8h1v1h-1zM10 8h1v1h-1zM2 9h2v1h-2zM6 9h1v1h-1zM10 9h1v1h-1zM2 10h1v1h-1zM6 10h1v1h-1zM10 10h1v1h-1zM5 11h1v1h-1zM10 11h1v1h-1zM4 12h1v1h-1zM8 12h2v1h-2z"/><path id="g6362" d="M2 2h1v1h-1zM6 2h1v1h-1zM2 3h1v1h-1zM6 3h4v1h-4zM0 4h6v1h-6zM8 4h1v1h-1zM2 5h1v1h-1zM5 5h5v1h-5zM2 6h1v1h-1zM4 6h2v1h-2zM7 6h1v1h-1zM9 6h1v1h-1zM2 7h2v1h-2zM5 7h1v1h-1zM7 7h1v1h-1zM9 7h1v1h-1zM1 8h2v1h-2zM4 8h7v1h-7zM0 9h1v1h-1zM2 9h1v1h-1zM7 9h1v1h-1zM2 10h1v1h-1zM6 10h1v1h-1zM8 10h1v1h-1zM2 11h1v1h-1zM5 11h1v1h-1zM9 11h1v1h-1zM0 12h3v1h-3zM4 12h1v1h-1zM10 12h1v1h-1z"/><path id="g672a" d="M5 2h1v1h-1zM5 3h1v1h-1zM1 4h9v1h-9zM5 5h1v1h-1zM0 6h11v1h-11zM5 7h1v1h-1zM4 8h3v1h-3zM3 9h1v1h-1zM5 9h1v1h-1zM7 9h1v1h-1zM2 10h1v1h-1zM5 10h1v1h-1zM8 10h1v1h-1zM0 11h2v1h-2zM5 11h1v1h-1zM9 11h2v1h-2zM5 12h1v1h-1z"/><path id="g77e5" d="M2 2h1v1h-1zM2 3h1v1h-1zM1 4h5v1h-5zM7 4h4v1h-4zM0 5h1v1h-1zM3 5h1v1h-1zM7 5h1v1h-1zM10 5h1v1h-1zM3 6h1v1h-1zM7 6h1v1h-1zM10 6h1v1h-1zM0 7h8v1h-8zM10 7h1v1h-1zM3 8h1v1h-1zM7 8h1v1h-1zM10 8h1v1h-1zM3 9h1v1h-1zM7 9h1v1h-1zM10 9h1v1h-1zM2 10h1v1h-1zM4 10h1v1h-1zM7 10h1v1h-1zM10 10h1v1h-1zM1 11h1v1h-1zM5 11h1v1h-1zM7 11h4v1h-4zM0 12h1v1h-1z"/><path id="g7c7b" d="M2 2h1v1h-1zM5 2h1v1h-1zM8 2h1v1h-1zM3 3h1v1h-1zM5 3h1v1h-1zM7 3h1v1h-1zM0 4h11v1h-11zM3 5h1v1h-1zM5 5h1v1h-1zM7 5h1v1h-1zM2 6h1v1h-1zM5 6h1v1h-1zM8 6h1v1h-1zM1 7h1v1h-1zM9 7h1v1h-1zM5 8h1v1h-1zM0 9h11v1h-11zM4 10h1v1h-1zM6 10h1v1h-1zM3 11h1v1h-1zM7 11h1v1h-1zM0 12h3v1h-3zM8 12h3v1h-3z"/><path id="g578b" d="M1 2h6v1h-6zM9 2h1v1h-1zM2 3h1v1h-1zM4 3h1v1h-1zM7 3h1v1h-1zM9 3h1v1h-1zM2 4h1v1h-1zM4 4h1v1h-1zM7 4h1v1h-1zM9 4h1v1h-1zM0 5h8v1h-8zM9 5h1v1h-1zM2 6h1v1h-1zM4 6h1v1h-1zM7 6h1v1h-1zM9 6h1v1h-1zM2 7h1v1h-1zM4 7h1v1h-1zM9 7h1v1h-1zM1 8h1v1h-1zM4 8h2v1h-2zM8 8h2v1h-2zM5 9h1v1h-1zM2 10h7v1h-7zM5 11h1v1h-1zM0 12h11v1h-11z"/><path id="g65f6" d="M8 2h1v1h-1zM0 3h4v1h-4zM8 3h1v1h-1zM0 4h1v1h-1zM3 4h8v1h-8zM0 5h1v1h-1zM3 5h1v1h-1zM8 5h1v1h-1zM0 6h1v1h-1zM3 6h1v1h-1zM5 6h1v1h-1zM8 6h1v1h-1zM0 7h4v1h-4zM6 7h1v1h-1zM8 7h1v1h-1zM0 8h1v1h-1zM3 8h1v1h-1zM6 8h1v1h-1zM8 8h1v1h-1zM0 9h1v1h-1zM3 9h1v1h-1zM8 9h1v1h-1zM0 10h1v1h-1zM3 10h1v1h-1zM8 10h1v1h-1zM0 11h4v1h-4zM8 11h1v1h-1zM6 12h3v1h-3z"/><path id="g95f4" d="M2 2h1v1h-1zM5 2h6v1h-6zM3 3h1v1h-1zM10 3h1v1h-1zM1 4h1v1h-1zM10 4h1v1h-1zM1 5h1v1h-1zM4 5h4v1h-4zM10 5h1v1h-1zM1 6h1v1h-1zM4 6h1v1h-1zM7 6h1v1h-1zM10 6h1v1h-1zM1 7h1v1h-1zM4 7h4v1h-4zM10 7h1v1h-1zM1 8h1v1h-1zM4 8h1v1h-1zM7 8h1v1h-1zM10 8h1v1h-1zM1 9h1v1h-1zM4 9h1v1h-1zM7 9h1v1h-1zM10 9h1v1h-1zM1 10h1v1h-1zM4 10h4v1h-4zM10 10h1v1h-1zM1 11h1v1h-1zM10 11h1v1h-1zM1 12h1v1h-1zM8 12h3v1h-3z"/><path id="g5904" d="M2 2h1v1h-1zM7 2h1v1h-1zM2 3h1v1h-1zM7 3h1v1h-1zM2 4h4v1h-4zM7 4h1v1h-1zM2 5h1v1h-1zM5 5h1v1h-1zM7 5h2v1h-2zM1 6h1v1h-1zM5 6h1v1h-1zM7 6h1v1h-1zM9 6h1v1h-1zM0 7h1v1h-1zM2 7h1v1h-1zM4 7h1v1h-1zM7 7h1v1h-1zM10 7h1v1h-1zM2 8h1v1h-1zM4 8h1v1h-1zM7 8h1v1h-1zM3 9h1v1h-1zM7 9h1v1h-1zM2 10h1v1h-1zM4 10h1v1h-1zM7 10h1v1h-1zM1 11h1v1h-1zM5 11h2v1h-2zM0 12h1v1h-1zM7 12h4v1h-4z"/><path id="g540d" d="M3 2h1v1h-1zM3 3h7v1h-7zM3 4h1v1h-1zM8 4h1v1h-1zM2 5h1v1h-1zM4 5h1v1h-1zM7 5h1v1h-1zM1 6h1v1h-1zM5 6h2v1h-2zM5 7h1v1h-1zM3 8h7v1h-7zM0 9h4v1h-4zM9 9h1v1h-1zM3 10h1v1h-1zM9 10h1v1h-1zM3 11h1v1h-1zM9 11h1v1h-1zM3 12h7v1h-7z"/><path id="g79f0" d="M3 2h2v1h-2zM6 2h1v1h-1zM0 3h3v1h-3zM6 3h1v1h-1zM2 4h1v1h-1zM5 4h6v1h-6zM0 5h5v1h-5zM7 5h1v1h-1zM10 5h1v1h-1zM2 6h1v1h-1zM7 6h1v1h-1zM1 7h3v1h-3zM5 7h1v1h-1zM7 7h1v1h-1zM9 7h1v1h-1zM1 8h2v1h-2zM5 8h1v1h-1zM7 8h1v1h-1zM9 8h1v1h-1zM0 9h1v1h-1zM2 9h1v1h-1zM4 9h1v1h-1zM7 9h1v1h-1zM10 9h1v1h-1zM2 10h2v1h-2zM7 10h1v1h-1zM10 10h1v1h-1zM2 11h1v1h-1zM7 11h1v1h-1zM2 12h1v1h-1zM6 12h2v1h-2z"/><path id="g8bdd" d="M1 2h1v1h-1zM8 2h2v1h-2zM2 3h1v1h-1zM5 3h3v1h-3zM7 4h1v1h-1zM0 5h3v1h-3zM4 5h7v1h-7zM2 6h1v1h-1zM7 6h1v1h-1zM2 7h1v1h-1zM7 7h1v1h-1zM2 8h1v1h-1zM5 8h5v1h-5zM2 9h1v1h-1zM5 9h1v1h-1zM9 9h1v1h-1zM2 10h2v1h-2zM5 10h1v1h-1zM9 10h1v1h-1zM2 11h1v1h-1zM5 11h5v1h-5zM5 12h1v1h-1zM9 12h1v1h-1z"/><path id="g63cf" d="M2 2h1v1h-1zM6 2h1v1h-1zM8 2h1v1h-1zM2 3h1v1h-1zM4 3h7v1h-7zM0 4h4v1h-4zM6 4h1v1h-1zM8 4h1v1h-1zM2 5h1v1h-1zM2 6h1v1h-1zM5 6h6v1h-6zM2 7h2v1h-2zM5 7h1v1h-1zM7 7h1v1h-1zM10 7h1v1h-1zM1 8h2v1h-2zM5 8h1v1h-1zM7 8h1v1h-1zM10 8h1v1h-1zM0 9h1v1h-1zM2 9h1v1h-1zM5 9h6v1h-6zM2 10h1v1h-1zM5 10h1v1h-1zM7 10h1v1h-1zM10 10h1v1h-1zM2 11h1v1h-1zM5 11h6v1h-6zM0 12h3v1h-3zM5 12h1v1h-1zM10 12h1v1h-1z"/><path id="g8ff0" d="M1 2h1v1h-1zM7 2h1v1h-1zM9 2h1v1h-1zM2 3h1v1h-1zM7 3h1v1h-1zM10 3h1v1h-1zM2 4h1v1h-1zM4 4h7v1h-7zM7 5h1v1h-1zM0 6h3v1h-3zM6 6h3v1h-3zM2 7h1v1h-1zM5 7h1v1h-1zM7 7h1v1h-1zM9 7h1v1h-1zM2 8h1v1h-1zM5 8h1v1h-1zM7 8h1v1h-1zM9 8h1v1h-1zM2 9h1v1h-1zM4 9h1v1h-1zM7 9h1v1h-1zM10 9h1v1h-1zM2 10h1v1h-1zM7 10h1v1h-1zM1 11h1v1h-1zM3 11h1v1h-1zM0 12h1v1h-1zM4 12h7v1h-7z"/><path id="g5916" d="M2 2h1v1h-1zM7 2h1v1h-1zM2 3h1v1h-1zM7 3h1v1h-1zM2 4h4v1h-4zM7 4h1v1h-1zM2 5h1v1h-1zM5 5h1v1h-1zM7 5h1v1h-1zM1 6h1v1h-1zM5 6h1v1h-1zM7 6h2v1h-2zM0 7h1v1h-1zM2 7h1v1h-1zM5 7h1v1h-1zM7 7h1v1h-1zM9 7h1v1h-1zM3 8h2v1h-2zM7 8h1v1h-1zM10 8h1v1h-1zM4 9h1v1h-1zM7 9h1v1h-1zM3 10h1v1h-1zM7 10h1v1h-1zM2 11h1v1h-1zM7 11h1v1h-1zM1 12h1v1h-1zM7 12h1v1h-1z"/><path id="g90e8" d="M3 2h1v1h-1zM7 2h4v1h-4zM0 3h8v1h-8zM10 3h1v1h-1zM1 4h1v1h-1zM5 4h1v1h-1zM7 4h1v1h-1zM10 4h1v1h-1zM2 5h1v1h-1zM4 5h1v1h-1zM7 5h1v1h-1zM9 5h1v1h-1zM0 6h9v1h-9zM7 7h1v1h-1zM9 7h1v1h-1zM1 8h5v1h-5zM7 8h1v1h-1zM10 8h1v1h-1zM1 9h1v1h-1zM5 9h1v1h-1zM7 9h1v1h-1zM10 9h1v1h-1zM1 10h1v1h-1zM5 10h1v1h-1zM7 10h2v1h-2zM10 10h1v1h-1zM1 11h5v1h-5zM7 11h1v1h-1zM9 11h1v1h-1zM1 12h1v1h-1zM5 12h1v1h-1zM7 12h1v1h-1z"/><path id="g9891" d="M3 2h1v1h-1zM6 2h5v1h-5zM1 3h1v1h-1zM3 3h1v1h-1zM8 3h1v1h-1zM1 4h1v1h-1zM3 4h8v1h-8zM1 5h1v1h-1zM3 5h1v1h-1zM6 5h1v1h-1zM10 5h1v1h-1zM0 6h7v1h-7zM8 6h1v1h-1zM10 6h1v1h-1zM3 7h1v1h-1zM6 7h1v1h-1zM8 7h1v1h-1zM10 7h1v1h-1zM1 8h1v1h-1zM3 8h1v1h-1zM5 8h2v1h-2zM8 8h1v1h-1zM10 8h1v1h-1zM1 9h1v1h-1zM3 9h2v1h-2zM6 9h1v1h-1zM8 9h1v1h-1zM10 9h1v1h-1zM0 10h1v1h-1zM3 10h1v1h-1zM6 10h1v1h-1zM8 10h1v1h-1zM10 10h1v1h-1zM2 11h1v1h-1zM7 11h1v1h-1zM9 11h1v1h-1zM0 12h2v1h-2zM5 12h2v1h-2zM10 12h1v1h-1z"/><path id="g8bd5" d="M1 2h1v1h-1zM7 2h1v1h-1zM9 2h1v1h-1zM2 3h1v1h-1zM7 3h1v1h-1zM10 3h1v1h-1zM3 4h8v1h-8zM7 5h1v1h-1zM0 6h3v1h-3zM4 6h4v1h-4zM2 7h1v1h-1zM5 7h1v1h-1zM7 7h1v1h-1zM2 8h1v1h-1zM5 8h1v1h-1zM7 8h1v1h-1zM2 9h1v1h-1zM5 9h1v1h-1zM8 9h1v1h-1zM10 9h1v1h-1zM2 10h1v1h-1zM5 10h2v1h-2zM8 10h1v1h-1zM10 10h1v1h-1zM2 11h3v1h-3zM9 11h2v1h-2zM2 12h1v1h-1zM10 12h1v1h-1z"/><path id="g7528" d="M1 2h9v1h-9zM1 3h1v1h-1zM5 3h1v1h-1zM9 3h1v1h-1zM1 4h1v1h-1zM5 4h1v1h-1zM9 4h1v1h-1zM1 5h9v1h-9zM1 6h1v1h-1zM5 6h1v1h-1zM9 6h1v1h-1zM1 7h1v1h-1zM5 7h1v1h-1zM9 7h1v1h-1zM1 8h9v1h-9zM1 9h1v1h-1zM5 9h1v1h-1zM9 9h1v1h-1zM1 10h1v1h-1zM5 10h1v1h-1zM9 10h1v1h-1zM0 11h1v1h-1zM5 11h1v1h-1zM9 11h1v1h-1zM0 12h1v1h-1zM5 12h1v1h-1zM8 12h2v1h-2z"/><path id="g6237" d="M5 2h1v1h-1zM6 3h1v1h-1zM2 4h8v1h-8zM2 5h1v1h-1zM9 5h1v1h-1zM2 6h1v1h-1zM9 6h1v1h-1zM2 7h8v1h-8zM2 8h1v1h-1zM2 9h1v1h-1zM2 10h1v1h-1zM1 11h1v1h-1zM0 12h1v1h-1z"/><path id="g8054" d="M0 2h6v1h-6zM9 2h1v1h-1zM1 3h1v1h-1zM3 3h1v1h-1zM6 3h1v1h-1zM8 3h1v1h-1zM1 4h1v1h-1zM3 4h1v1h-1zM5 4h6v1h-6zM1 5h3v1h-3zM7 5h1v1h-1zM1 6h1v1h-1zM3 6h1v1h-1zM7 6h1v1h-1zM1 7h10v1h-10zM1 8h1v1h-1zM3 8h1v1h-1zM7 8h1v1h-1zM1 9h1v1h-1zM3 9h1v1h-1zM7 9h1v1h-1zM0 10h5v1h-5zM6 10h1v1h-1zM8 10h1v1h-1zM3 11h1v1h-1zM5 11h1v1h-1zM9 11h1v1h-1zM3 12h2v1h-2zM10 12h1v1h-1z"/><path id="g56de" d="M1 2h10v1h-10zM1 3h1v1h-1zM10 3h1v1h-1zM1 4h1v1h-1zM10 4h1v1h-1zM1 5h1v1h-1zM4 5h4v1h-4zM10 5h1v1h-1zM1 6h1v1h-1zM4 6h1v1h-1zM7 6h1v1h-1zM10 6h1v1h-1zM1 7h1v1h-1zM4 7h1v1h-1zM7 7h1v1h-1zM10 7h1v1h-1zM1 8h1v1h-1zM4 8h4v1h-4zM10 8h1v1h-1zM1 9h1v1h-1zM4 9h1v1h-1zM7 9h1v1h-1zM10 9h1v1h-1zM1 10h1v1h-1zM10 10h1v1h-1zM1 11h10v1h-10zM1 12h1v1h-1zM10 12h1v1h-1z"/><path id="g8def" d="M0 2h4v1h-4zM5 2h1v1h-1zM0 3h1v1h-1zM3 3h1v1h-1zM5 3h5v1h-5zM0 4h1v1h-1zM3 4h1v1h-1zM5 4h1v1h-1zM9 4h1v1h-1zM0 5h1v1h-1zM3 5h2v1h-2zM6 5h1v1h-1zM8 5h1v1h-1zM0 6h4v1h-4zM7 6h1v1h-1zM2 7h1v1h-1zM6 7h1v1h-1zM8 7h1v1h-1zM0 8h1v1h-1zM2 8h2v1h-2zM5 8h1v1h-1zM9 8h1v1h-1zM0 9h1v1h-1zM2 9h1v1h-1zM4 9h7v1h-7zM0 10h1v1h-1zM2 10h1v1h-1zM5 10h1v1h-1zM9 10h1v1h-1zM0 11h1v1h-1zM2 11h2v1h-2zM5 11h1v1h-1zM9 11h1v1h-1zM0 12h2v1h-2zM5 12h5v1h-5z"/></defs></svg>
</body></html>
